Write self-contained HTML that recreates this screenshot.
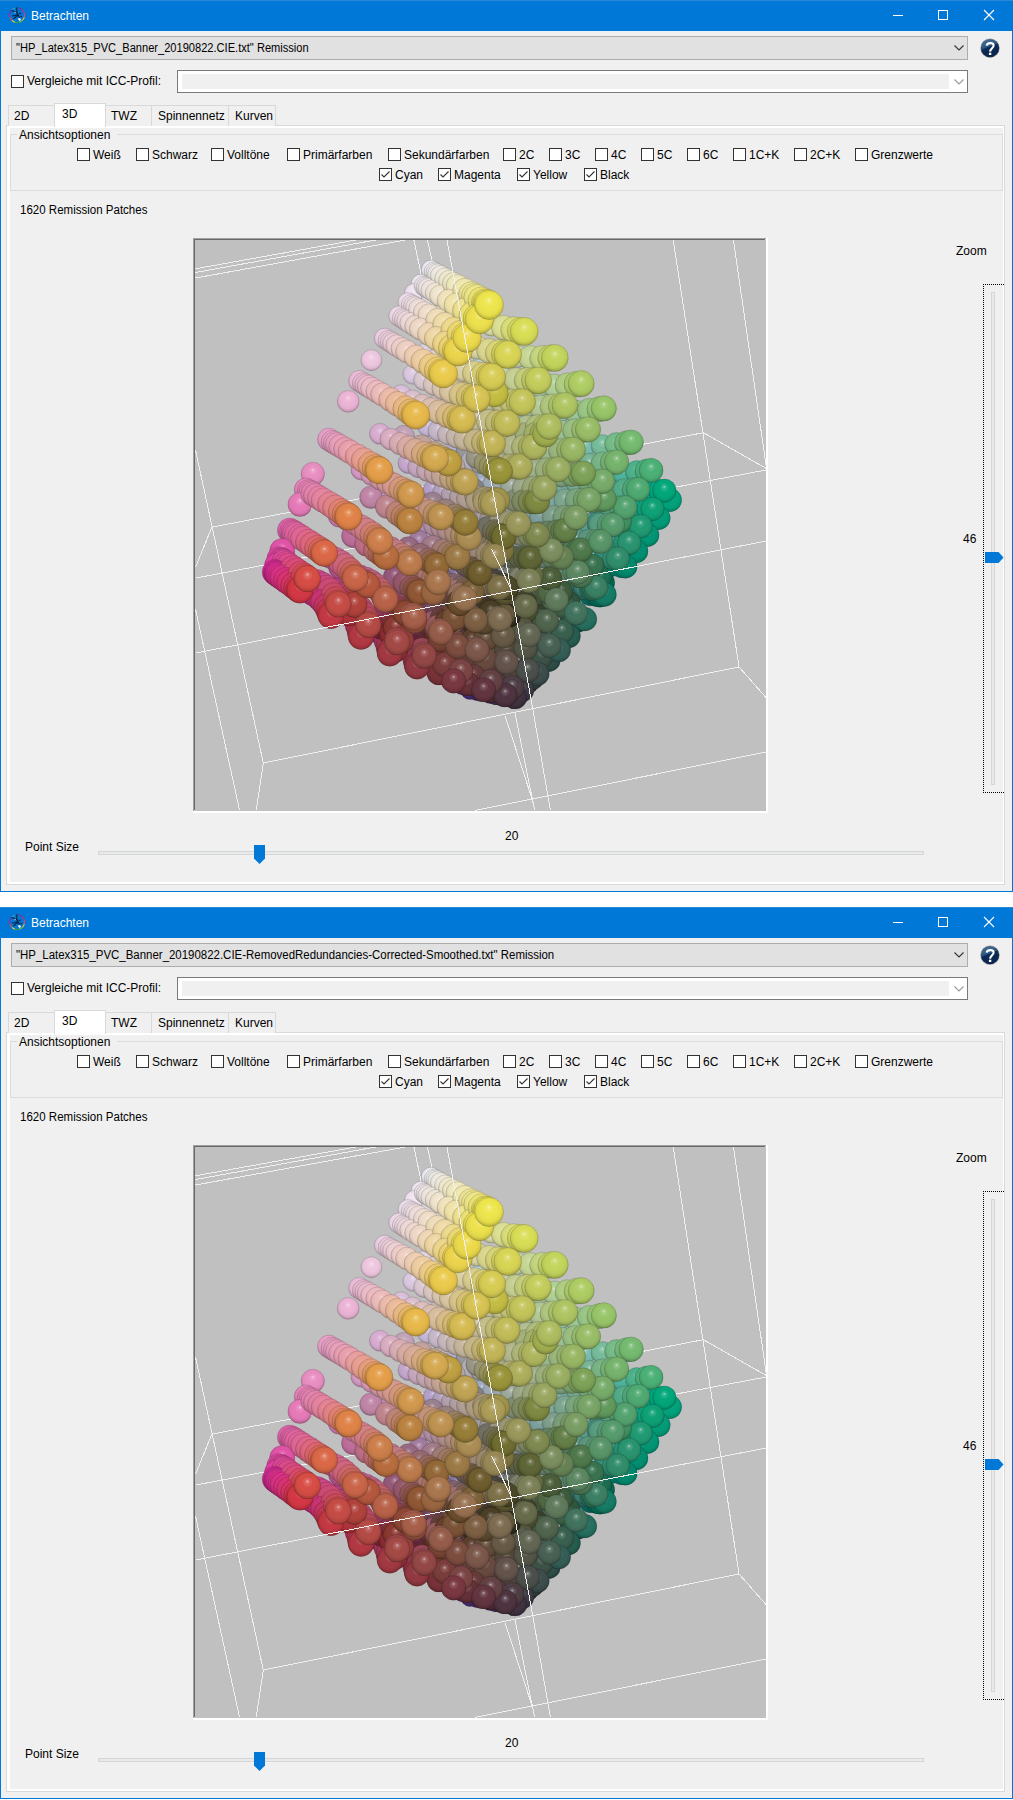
<!DOCTYPE html>
<html><head><meta charset="utf-8"><style>
html,body{margin:0;padding:0;background:#fff;width:1013px;height:1800px;overflow:hidden}
.t{position:absolute;white-space:nowrap;font-family:"Liberation Sans", sans-serif;line-height:14px;height:14px}
.r{position:absolute}
</style></head><body>
<div class="r" style="left:0px;top:0px;width:1013px;height:892px;background:#0078d7"></div>
<div class="r" style="left:1px;top:31px;width:1011px;height:860px;background:#f0f0f0"></div>
<div class="r" style="left:0px;top:0px;width:1013px;height:1px;background:#2a88d8"></div>
<svg class="r" style="left:6px;top:4px" width="22" height="22" viewBox="0 0 22 22"><g fill="none" stroke-width="1.1"><path d="M9.18 3.95 A7.4 7.4 0 0 1 13.02 3.95" stroke="#205a80"/><path d="M13.02 3.95 A7.4 7.4 0 0 1 16.33 5.87" stroke="#8a2a9a"/><path d="M16.33 5.87 A7.4 7.4 0 0 1 18.25 9.18" stroke="#d02a80"/><path d="M18.25 9.18 A7.4 7.4 0 0 1 18.25 13.02" stroke="#e84070"/><path d="M18.25 13.02 A7.4 7.4 0 0 1 16.33 16.33" stroke="#f0c030"/><path d="M16.33 16.33 A7.4 7.4 0 0 1 13.02 18.25" stroke="#80c030"/><path d="M13.02 18.25 A7.4 7.4 0 0 1 9.18 18.25" stroke="#30a040"/><path d="M9.18 18.25 A7.4 7.4 0 0 1 5.87 16.33" stroke="#f0d030"/><path d="M5.87 16.33 A7.4 7.4 0 0 1 3.95 13.02" stroke="#e05030"/><path d="M3.95 13.02 A7.4 7.4 0 0 1 3.95 9.18" stroke="#c02090"/><path d="M3.95 9.18 A7.4 7.4 0 0 1 5.87 5.87" stroke="#7030a0"/><path d="M5.87 5.87 A7.4 7.4 0 0 1 9.18 3.95" stroke="#30a0b0"/></g><path d="M10.5 3.8 L11.2 9 L12.8 12 L13.6 15.5 M5.6 6.6 L8 7.6 L11.2 9 M6 12 L9.2 11.5 L11.5 10.5 M7.5 15 L9.5 13 L12 11.5 M13 9.5 L15.2 9 M14.5 12 L16 13" stroke="#0a2040" stroke-width="1.1" fill="none"/><ellipse cx="13.5" cy="15.3" rx="1.5" ry="1.1" transform="rotate(40 13.5 15.3)" fill="#fff"/><circle cx="9" cy="8.5" r="0.7" fill="#cfe0f0"/></svg>
<div class="t" style="left:31px;top:9px;font-size:12px;color:#fff;">Betrachten</div>
<div class="r" style="left:893px;top:15px;width:10px;height:1px;background:#fff"></div>
<div class="r" style="left:938px;top:10px;width:10px;height:10px;border:1px solid #fff;box-sizing:border-box"></div>
<svg class="r" style="left:983px;top:9px" width="12" height="12"><path d="M1 1 L11 11 M11 1 L1 11" stroke="#fff" stroke-width="1.1"/></svg>
<div class="r" style="left:11px;top:36px;width:957px;height:24px;background:#e1e1e1;border:1px solid #adadad;box-sizing:border-box"></div>
<div class="t" style="left:16px;top:41px;font-size:12px;color:#000;transform:scaleX(0.924);transform-origin:0 0">"HP_Latex315_PVC_Banner_20190822.CIE.txt" Remission</div>
<svg class="r" style="left:954px;top:45px" width="10" height="7"><path d="M0.5 0.5 L5 5 L9.5 0.5" fill="none" stroke="#333" stroke-width="1.1"/></svg>
<svg class="r" style="left:979px;top:37px" width="22" height="22" viewBox="0 0 22 22"><defs><linearGradient id="hg0" x1="0.3" y1="0.1" x2="0.55" y2="0.75"><stop offset="0" stop-color="#3f6b92"/><stop offset="0.5" stop-color="#2a537c"/><stop offset="0.53" stop-color="#0c2c5a"/><stop offset="1" stop-color="#0a2650"/></linearGradient></defs><circle cx="11" cy="11.3" r="9.8" fill="#000" opacity="0.12"/><circle cx="11" cy="11.1" r="9.2" fill="url(#hg0)" stroke="#4a3a30" stroke-opacity="0.45" stroke-width="0.6"/><path d="M7.6 8.6 C8.2 5.6 14 5.2 14.6 8 C15.2 10.6 11.2 11.6 11.1 14.6" fill="none" stroke="#fff" stroke-width="2.1"/><rect x="9.9" y="15.7" width="2.4" height="2.3" fill="#fff"/></svg>
<div class="r" style="left:11px;top:75px;width:13px;height:13px;background:#fff;border:1px solid #333;box-sizing:border-box"></div>
<div class="t" style="left:27px;top:74px;font-size:12px;color:#000;">Vergleiche mit ICC-Profil:</div>
<div class="r" style="left:177px;top:70px;width:791px;height:23px;background:#fff;border:1px solid #7a7a7a;box-sizing:border-box"></div>
<div class="r" style="left:182px;top:74px;width:767px;height:15px;background:#f0f0f0"></div>
<svg class="r" style="left:954px;top:79px" width="10" height="7"><path d="M0.5 0.5 L5 5 L9.5 0.5" fill="none" stroke="#9a9a9a" stroke-width="1.1"/></svg>
<div class="r" style="left:6px;top:125px;width:999px;height:760px;border:1px solid #d9d9d9;box-sizing:border-box;background:#fff"></div>
<div class="r" style="left:10px;top:128px;width:993px;height:754px;background:#f0f0f0"></div>
<div class="r" style="left:8px;top:105px;width:47px;height:21px;background:#f0f0f0;border:1px solid #d9d9d9;border-bottom:none;box-sizing:border-box"></div>
<div class="t" style="left:14px;top:109px;font-size:12px;color:#000;">2D</div>
<div class="r" style="left:105px;top:105px;width:47px;height:21px;background:#f0f0f0;border:1px solid #d9d9d9;border-bottom:none;box-sizing:border-box"></div>
<div class="t" style="left:111px;top:109px;font-size:12px;color:#000;">TWZ</div>
<div class="r" style="left:151px;top:105px;width:78px;height:21px;background:#f0f0f0;border:1px solid #d9d9d9;border-bottom:none;box-sizing:border-box"></div>
<div class="t" style="left:158px;top:109px;font-size:12px;color:#000;">Spinnennetz</div>
<div class="r" style="left:228px;top:105px;width:48px;height:21px;background:#f0f0f0;border:1px solid #d9d9d9;border-bottom:none;box-sizing:border-box"></div>
<div class="t" style="left:235px;top:109px;font-size:12px;color:#000;">Kurven</div>
<div class="r" style="left:54px;top:103px;width:52px;height:24px;background:#fff;border:1px solid #d9d9d9;border-bottom:none;box-sizing:border-box"></div>
<div class="t" style="left:62px;top:107px;font-size:12px;color:#000;">3D</div>
<div class="r" style="left:10px;top:134px;width:993px;height:57px;border:1px solid #dcdcdc;box-sizing:border-box"></div>
<div class="r" style="left:17px;top:130px;width:100px;height:8px;background:#f0f0f0"></div>
<div class="t" style="left:19px;top:128px;font-size:12px;color:#000;">Ansichtsoptionen</div>
<div class="r" style="left:77px;top:148px;width:13px;height:13px;background:#fff;border:1px solid #333;box-sizing:border-box"></div>
<div class="t" style="left:93px;top:148px;font-size:12px;color:#000;">Weiß</div>
<div class="r" style="left:136px;top:148px;width:13px;height:13px;background:#fff;border:1px solid #333;box-sizing:border-box"></div>
<div class="t" style="left:152px;top:148px;font-size:12px;color:#000;">Schwarz</div>
<div class="r" style="left:211px;top:148px;width:13px;height:13px;background:#fff;border:1px solid #333;box-sizing:border-box"></div>
<div class="t" style="left:227px;top:148px;font-size:12px;color:#000;">Volltöne</div>
<div class="r" style="left:287px;top:148px;width:13px;height:13px;background:#fff;border:1px solid #333;box-sizing:border-box"></div>
<div class="t" style="left:303px;top:148px;font-size:12px;color:#000;">Primärfarben</div>
<div class="r" style="left:388px;top:148px;width:13px;height:13px;background:#fff;border:1px solid #333;box-sizing:border-box"></div>
<div class="t" style="left:404px;top:148px;font-size:12px;color:#000;">Sekundärfarben</div>
<div class="r" style="left:503px;top:148px;width:13px;height:13px;background:#fff;border:1px solid #333;box-sizing:border-box"></div>
<div class="t" style="left:519px;top:148px;font-size:12px;color:#000;">2C</div>
<div class="r" style="left:549px;top:148px;width:13px;height:13px;background:#fff;border:1px solid #333;box-sizing:border-box"></div>
<div class="t" style="left:565px;top:148px;font-size:12px;color:#000;">3C</div>
<div class="r" style="left:595px;top:148px;width:13px;height:13px;background:#fff;border:1px solid #333;box-sizing:border-box"></div>
<div class="t" style="left:611px;top:148px;font-size:12px;color:#000;">4C</div>
<div class="r" style="left:641px;top:148px;width:13px;height:13px;background:#fff;border:1px solid #333;box-sizing:border-box"></div>
<div class="t" style="left:657px;top:148px;font-size:12px;color:#000;">5C</div>
<div class="r" style="left:687px;top:148px;width:13px;height:13px;background:#fff;border:1px solid #333;box-sizing:border-box"></div>
<div class="t" style="left:703px;top:148px;font-size:12px;color:#000;">6C</div>
<div class="r" style="left:733px;top:148px;width:13px;height:13px;background:#fff;border:1px solid #333;box-sizing:border-box"></div>
<div class="t" style="left:749px;top:148px;font-size:12px;color:#000;">1C+K</div>
<div class="r" style="left:794px;top:148px;width:13px;height:13px;background:#fff;border:1px solid #333;box-sizing:border-box"></div>
<div class="t" style="left:810px;top:148px;font-size:12px;color:#000;">2C+K</div>
<div class="r" style="left:855px;top:148px;width:13px;height:13px;background:#fff;border:1px solid #333;box-sizing:border-box"></div>
<div class="t" style="left:871px;top:148px;font-size:12px;color:#000;">Grenzwerte</div>
<div class="r" style="left:379px;top:168px;width:13px;height:13px;background:#fff;border:1px solid #333;box-sizing:border-box"></div><svg class="r" style="left:379px;top:168px" width="13" height="13"><path d="M2.5 6.5 L5 9 L10.5 3.5" fill="none" stroke="#333" stroke-width="1.1"/></svg>
<div class="t" style="left:395px;top:168px;font-size:12px;color:#000;">Cyan</div>
<div class="r" style="left:438px;top:168px;width:13px;height:13px;background:#fff;border:1px solid #333;box-sizing:border-box"></div><svg class="r" style="left:438px;top:168px" width="13" height="13"><path d="M2.5 6.5 L5 9 L10.5 3.5" fill="none" stroke="#333" stroke-width="1.1"/></svg>
<div class="t" style="left:454px;top:168px;font-size:12px;color:#000;">Magenta</div>
<div class="r" style="left:517px;top:168px;width:13px;height:13px;background:#fff;border:1px solid #333;box-sizing:border-box"></div><svg class="r" style="left:517px;top:168px" width="13" height="13"><path d="M2.5 6.5 L5 9 L10.5 3.5" fill="none" stroke="#333" stroke-width="1.1"/></svg>
<div class="t" style="left:533px;top:168px;font-size:12px;color:#000;">Yellow</div>
<div class="r" style="left:584px;top:168px;width:13px;height:13px;background:#fff;border:1px solid #333;box-sizing:border-box"></div><svg class="r" style="left:584px;top:168px" width="13" height="13"><path d="M2.5 6.5 L5 9 L10.5 3.5" fill="none" stroke="#333" stroke-width="1.1"/></svg>
<div class="t" style="left:600px;top:168px;font-size:12px;color:#000;">Black</div>
<div class="t" style="left:20px;top:203px;font-size:12px;color:#000;transform:scaleX(0.96);transform-origin:0 0">1620 Remission Patches</div>
<div class="r" style="left:193px;top:238px;width:575px;height:575px;background:#fff"></div>
<div class="r" style="left:193px;top:238px;width:573px;height:573px;background:#a0a0a0"></div>
<div class="r" style="left:194px;top:239px;width:572px;height:572px;background:#e3e3e3"></div>
<div class="r" style="left:194px;top:239px;width:571px;height:571px;background:#696969"></div>
<div class="r" style="left:195px;top:240px;width:571px;height:571px;overflow:hidden"><svg width="571" height="571" viewBox="0 0 571 571" style="display:block"><defs><radialGradient id="sh" cx="0.5" cy="0.45" r="0.55" fx="0.5" fy="0.33"><stop offset="0" stop-color="#fff" stop-opacity="0.6"/><stop offset="0.12" stop-color="#fff" stop-opacity="0.18"/><stop offset="0.38" stop-color="#fff" stop-opacity="0"/><stop offset="0.8" stop-color="#000" stop-opacity="0.05"/><stop offset="0.96" stop-color="#000" stop-opacity="0.2"/><stop offset="1" stop-color="#000" stop-opacity="0.32"/></radialGradient></defs><style>.s{fill:url(#sh);stroke:#000;stroke-opacity:.16;stroke-width:.8}</style><rect width="571" height="571" fill="#c0c0c0"/><g stroke="#f0f0f0" stroke-width="1" shape-rendering="crispEdges"><line x1="0.5" y1="28.8" x2="160.9" y2="0.0"/><line x1="0.5" y1="32.5" x2="180.6" y2="0.0"/><line x1="0.5" y1="38.0" x2="210.2" y2="0.0"/><line x1="218.9" y1="0.0" x2="226.3" y2="35.0"/><line x1="232.4" y1="0.0" x2="238.6" y2="27.6"/><line x1="478.2" y1="0.0" x2="544.1" y2="427.4"/><line x1="538.4" y1="0.0" x2="571.3" y2="227.0"/><line x1="508.3" y1="192.7" x2="571.3" y2="228.5"/><line x1="544.0" y1="427.0" x2="571.0" y2="457.5"/><line x1="16.8" y1="287.2" x2="508.3" y2="192.7"/><line x1="1.0" y1="338.0" x2="571.0" y2="230.0"/><line x1="68.3" y1="523.0" x2="544.0" y2="427.0"/><line x1="280.3" y1="570.4" x2="571.0" y2="512.0"/><line x1="0.5" y1="210.1" x2="68.3" y2="523.0"/><line x1="0.5" y1="369.2" x2="44.6" y2="570.4"/><line x1="16.8" y1="287.2" x2="0.5" y2="327.5"/><line x1="68.3" y1="523.0" x2="61.2" y2="570.4"/><line x1="310.0" y1="475.7" x2="337.6" y2="560.6"/><line x1="319.8" y1="471.7" x2="339.6" y2="570.4"/><line x1="337.6" y1="467.8" x2="355.4" y2="570.4"/></g><circle cx="287.8" cy="120.9" r="9.2" fill="#bad7ec"/><circle cx="287.8" cy="120.9" r="9.2" class="s"/><circle cx="275.0" cy="450.0" r="9.4" fill="#492f7c"/><circle cx="275.0" cy="450.0" r="9.4" class="s"/><circle cx="276.4" cy="240.6" r="9.4" fill="#9daad0"/><circle cx="276.4" cy="240.6" r="9.4" class="s"/><circle cx="326.7" cy="169.4" r="9.4" fill="#99cad8"/><circle cx="326.7" cy="169.4" r="9.4" class="s"/><circle cx="267.2" cy="445.3" r="9.5" fill="#57307e"/><circle cx="267.2" cy="445.3" r="9.5" class="s"/><circle cx="313.3" cy="274.1" r="9.6" fill="#7ea0bf"/><circle cx="313.3" cy="274.1" r="9.6" class="s"/><circle cx="255.9" cy="215.1" r="9.6" fill="#b2b1d4"/><circle cx="255.9" cy="215.1" r="9.6" class="s"/><circle cx="236.0" cy="30.0" r="9.7" fill="#efedf5"/><circle cx="236.0" cy="30.0" r="9.7" class="s"/><circle cx="282.4" cy="451.1" r="9.7" fill="#483074"/><circle cx="282.4" cy="451.1" r="9.7" class="s"/><circle cx="285.0" cy="450.7" r="9.8" fill="#3e2966"/><circle cx="285.0" cy="450.7" r="9.8" class="s"/><circle cx="225.8" cy="44.1" r="9.8" fill="#efe7f2"/><circle cx="225.8" cy="44.1" r="9.8" class="s"/><circle cx="242.8" cy="64.9" r="9.8" fill="#e0dee6"/><circle cx="242.8" cy="64.9" r="9.8" class="s"/><circle cx="230.3" cy="113.1" r="9.8" fill="#dad2e6"/><circle cx="230.3" cy="113.1" r="9.8" class="s"/><circle cx="287.1" cy="242.8" r="9.8" fill="#9daac3"/><circle cx="287.1" cy="242.8" r="9.8" class="s"/><circle cx="238.9" cy="31.8" r="9.8" fill="#efecf0"/><circle cx="238.9" cy="31.8" r="9.8" class="s"/><circle cx="219.3" cy="53.4" r="9.9" fill="#efe3f0"/><circle cx="219.3" cy="53.4" r="9.9" class="s"/><circle cx="232.5" cy="186.6" r="9.9" fill="#c6b8d8"/><circle cx="232.5" cy="186.6" r="9.9" class="s"/><circle cx="238.0" cy="249.7" r="9.9" fill="#b2a0c9"/><circle cx="238.0" cy="249.7" r="9.9" class="s"/><circle cx="236.3" cy="57.7" r="9.9" fill="#e9e4ec"/><circle cx="236.3" cy="57.7" r="9.9" class="s"/><circle cx="240.8" cy="32.9" r="9.9" fill="#f0ecec"/><circle cx="240.8" cy="32.9" r="9.9" class="s"/><circle cx="229.0" cy="46.0" r="9.9" fill="#efe7ed"/><circle cx="229.0" cy="46.0" r="9.9" class="s"/><circle cx="213.0" cy="62.6" r="10.0" fill="#efdfee"/><circle cx="213.0" cy="62.6" r="10.0" class="s"/><circle cx="217.8" cy="134.3" r="10.0" fill="#dac8e1"/><circle cx="217.8" cy="134.3" r="10.0" class="s"/><circle cx="266.5" cy="218.3" r="10.1" fill="#b2b0c6"/><circle cx="266.5" cy="218.3" r="10.1" class="s"/><circle cx="242.7" cy="34.1" r="10.1" fill="#f0ece9"/><circle cx="242.7" cy="34.1" r="10.1" class="s"/><circle cx="231.1" cy="47.2" r="10.1" fill="#efe7e9"/><circle cx="231.1" cy="47.2" r="10.1" class="s"/><circle cx="203.8" cy="76.2" r="10.1" fill="#eedaea"/><circle cx="203.8" cy="76.2" r="10.1" class="s"/><circle cx="216.4" cy="64.6" r="10.1" fill="#efdfe8"/><circle cx="216.4" cy="64.6" r="10.1" class="s"/><circle cx="206.1" cy="154.9" r="10.2" fill="#dabfdb"/><circle cx="206.1" cy="154.9" r="10.2" class="s"/><circle cx="213.1" cy="223.2" r="10.2" fill="#c5a7cd"/><circle cx="213.1" cy="223.2" r="10.2" class="s"/><circle cx="233.1" cy="48.4" r="10.2" fill="#f0e6e5"/><circle cx="233.1" cy="48.4" r="10.2" class="s"/><circle cx="261.4" cy="336.9" r="10.2" fill="#837299"/><circle cx="261.4" cy="336.9" r="10.2" class="s"/><circle cx="218.7" cy="65.9" r="10.2" fill="#efdfe5"/><circle cx="218.7" cy="65.9" r="10.2" class="s"/><circle cx="245.5" cy="35.7" r="10.2" fill="#f0ece3"/><circle cx="245.5" cy="35.7" r="10.2" class="s"/><circle cx="207.5" cy="78.3" r="10.2" fill="#efd9e5"/><circle cx="207.5" cy="78.3" r="10.2" class="s"/><circle cx="297.5" cy="244.5" r="10.2" fill="#9ea9b6"/><circle cx="297.5" cy="244.5" r="10.2" class="s"/><circle cx="247.8" cy="252.4" r="10.3" fill="#b2a0bc"/><circle cx="247.8" cy="252.4" r="10.3" class="s"/><circle cx="189.6" cy="98.5" r="10.3" fill="#eed0e5"/><circle cx="189.6" cy="98.5" r="10.3" class="s"/><circle cx="241.4" cy="118.7" r="10.3" fill="#dbd1d6"/><circle cx="241.4" cy="118.7" r="10.3" class="s"/><circle cx="243.2" cy="190.9" r="10.3" fill="#c6b7c9"/><circle cx="243.2" cy="190.9" r="10.3" class="s"/><circle cx="220.8" cy="67.2" r="10.3" fill="#efdfe1"/><circle cx="220.8" cy="67.2" r="10.3" class="s"/><circle cx="209.8" cy="79.7" r="10.3" fill="#efd9e2"/><circle cx="209.8" cy="79.7" r="10.3" class="s"/><circle cx="236.1" cy="50.2" r="10.3" fill="#f0e6e0"/><circle cx="236.1" cy="50.2" r="10.3" class="s"/><circle cx="335.1" cy="275.6" r="10.4" fill="#7e9fa7"/><circle cx="335.1" cy="275.6" r="10.4" class="s"/><circle cx="271.4" cy="211.2" r="10.4" fill="#99989d"/><circle cx="271.4" cy="211.2" r="10.4" class="s"/><circle cx="278.9" cy="276.7" r="10.4" fill="#9e99ac"/><circle cx="278.9" cy="276.7" r="10.4" class="s"/><circle cx="193.4" cy="100.7" r="10.4" fill="#eed0e0"/><circle cx="193.4" cy="100.7" r="10.4" class="s"/><circle cx="295.5" cy="453.2" r="10.4" fill="#453065"/><circle cx="295.5" cy="453.2" r="10.4" class="s"/><circle cx="212.1" cy="81.0" r="10.4" fill="#efd9de"/><circle cx="212.1" cy="81.0" r="10.4" class="s"/><circle cx="196.0" cy="256.6" r="10.4" fill="#c595c2"/><circle cx="196.0" cy="256.6" r="10.4" class="s"/><circle cx="229.0" cy="140.0" r="10.5" fill="#dac8d1"/><circle cx="229.0" cy="140.0" r="10.5" class="s"/><circle cx="231.0" cy="283.3" r="10.5" fill="#b28fb2"/><circle cx="231.0" cy="283.3" r="10.5" class="s"/><circle cx="276.5" cy="220.8" r="10.5" fill="#b2b0b8"/><circle cx="276.5" cy="220.8" r="10.5" class="s"/><circle cx="224.0" cy="69.1" r="10.5" fill="#efdfdc"/><circle cx="224.0" cy="69.1" r="10.5" class="s"/><circle cx="176.4" cy="120.2" r="10.5" fill="#edc7df"/><circle cx="176.4" cy="120.2" r="10.5" class="s"/><circle cx="184.9" cy="193.8" r="10.5" fill="#d9add1"/><circle cx="184.9" cy="193.8" r="10.5" class="s"/><circle cx="250.0" cy="38.4" r="10.5" fill="#f0ebda"/><circle cx="250.0" cy="38.4" r="10.5" class="s"/><circle cx="195.8" cy="102.1" r="10.5" fill="#eed0dc"/><circle cx="195.8" cy="102.1" r="10.5" class="s"/><circle cx="246.9" cy="158.3" r="10.5" fill="#d0c4c7"/><circle cx="246.9" cy="158.3" r="10.5" class="s"/><circle cx="390.2" cy="206.9" r="10.5" fill="#77bcad"/><circle cx="390.2" cy="206.9" r="10.5" class="s"/><circle cx="278.8" cy="248.9" r="10.6" fill="#848388"/><circle cx="278.8" cy="248.9" r="10.6" class="s"/><circle cx="223.3" cy="227.1" r="10.6" fill="#c5a6bf"/><circle cx="223.3" cy="227.1" r="10.6" class="s"/><circle cx="215.3" cy="83.0" r="10.6" fill="#efd9d9"/><circle cx="215.3" cy="83.0" r="10.6" class="s"/><circle cx="217.3" cy="160.5" r="10.6" fill="#dabfcc"/><circle cx="217.3" cy="160.5" r="10.6" class="s"/><circle cx="240.8" cy="53.0" r="10.6" fill="#f0e6d7"/><circle cx="240.8" cy="53.0" r="10.6" class="s"/><circle cx="198.2" cy="103.5" r="10.6" fill="#eed0d9"/><circle cx="198.2" cy="103.5" r="10.6" class="s"/><circle cx="366.7" cy="242.9" r="10.7" fill="#7bada4"/><circle cx="366.7" cy="242.9" r="10.7" class="s"/><circle cx="307.4" cy="245.8" r="10.7" fill="#9da9a9"/><circle cx="307.4" cy="245.8" r="10.7" class="s"/><circle cx="256.9" cy="254.8" r="10.7" fill="#b29fae"/><circle cx="256.9" cy="254.8" r="10.7" class="s"/><circle cx="223.9" cy="301.3" r="10.7" fill="#a17b9f"/><circle cx="223.9" cy="301.3" r="10.7" class="s"/><circle cx="164.3" cy="141.1" r="10.7" fill="#edbdda"/><circle cx="164.3" cy="141.1" r="10.7" class="s"/><circle cx="208.8" cy="196.0" r="10.7" fill="#c2a3b7"/><circle cx="208.8" cy="196.0" r="10.7" class="s"/><circle cx="355.7" cy="259.8" r="10.7" fill="#7ca69f"/><circle cx="355.7" cy="259.8" r="10.7" class="s"/><circle cx="253.0" cy="194.3" r="10.7" fill="#c6b7ba"/><circle cx="253.0" cy="194.3" r="10.7" class="s"/><circle cx="229.0" cy="72.1" r="10.7" fill="#f0ded3"/><circle cx="229.0" cy="72.1" r="10.7" class="s"/><circle cx="345.1" cy="276.1" r="10.8" fill="#7d9f9b"/><circle cx="345.1" cy="276.1" r="10.8" class="s"/><circle cx="201.6" cy="105.5" r="10.8" fill="#eed0d4"/><circle cx="201.6" cy="105.5" r="10.8" class="s"/><circle cx="301.1" cy="454.1" r="10.8" fill="#44305e"/><circle cx="301.1" cy="454.1" r="10.8" class="s"/><circle cx="287.6" cy="278.2" r="10.8" fill="#9e99a0"/><circle cx="287.6" cy="278.2" r="10.8" class="s"/><circle cx="254.3" cy="41.0" r="10.8" fill="#f1ebd1"/><circle cx="254.3" cy="41.0" r="10.8" class="s"/><circle cx="168.2" cy="143.4" r="10.8" fill="#edbdd5"/><circle cx="168.2" cy="143.4" r="10.8" class="s"/><circle cx="364.2" cy="172.3" r="10.8" fill="#9ac8ad"/><circle cx="364.2" cy="172.3" r="10.8" class="s"/><circle cx="166.7" cy="229.4" r="10.8" fill="#d79bc6"/><circle cx="166.7" cy="229.4" r="10.8" class="s"/><circle cx="239.3" cy="285.6" r="10.8" fill="#b18fa5"/><circle cx="239.3" cy="285.6" r="10.8" class="s"/><circle cx="220.5" cy="86.0" r="10.8" fill="#efd9d0"/><circle cx="220.5" cy="86.0" r="10.8" class="s"/><circle cx="325.2" cy="306.6" r="10.9" fill="#7f9092"/><circle cx="325.2" cy="306.6" r="10.9" class="s"/><circle cx="248.6" cy="340.8" r="10.9" fill="#7e617d"/><circle cx="248.6" cy="340.8" r="10.9" class="s"/><circle cx="153.2" cy="161.4" r="10.9" fill="#ecb4d5"/><circle cx="153.2" cy="161.4" r="10.9" class="s"/><circle cx="245.3" cy="55.7" r="10.9" fill="#f0e5ce"/><circle cx="245.3" cy="55.7" r="10.9" class="s"/><circle cx="195.8" cy="199.1" r="10.9" fill="#d9adc2"/><circle cx="195.8" cy="199.1" r="10.9" class="s"/><circle cx="285.9" cy="222.7" r="10.9" fill="#b2afaa"/><circle cx="285.9" cy="222.7" r="10.9" class="s"/><circle cx="170.7" cy="144.8" r="10.9" fill="#edbdd2"/><circle cx="170.7" cy="144.8" r="10.9" class="s"/><circle cx="259.2" cy="227.0" r="10.9" fill="#bcabad"/><circle cx="259.2" cy="227.0" r="10.9" class="s"/><circle cx="237.3" cy="262.8" r="10.9" fill="#98808f"/><circle cx="237.3" cy="262.8" r="10.9" class="s"/><circle cx="427.8" cy="233.2" r="10.9" fill="#4db19b"/><circle cx="427.8" cy="233.2" r="10.9" class="s"/><circle cx="398.2" cy="316.7" r="10.9" fill="#348e8a"/><circle cx="398.2" cy="316.7" r="10.9" class="s"/><circle cx="239.1" cy="144.6" r="10.9" fill="#dbc7c1"/><circle cx="239.1" cy="144.6" r="10.9" class="s"/><circle cx="307.3" cy="334.2" r="11.0" fill="#81818a"/><circle cx="307.3" cy="334.2" r="11.0" class="s"/><circle cx="232.4" cy="230.4" r="11.0" fill="#c5a6b1"/><circle cx="232.4" cy="230.4" r="11.0" class="s"/><circle cx="415.7" cy="250.9" r="11.0" fill="#51aa97"/><circle cx="415.7" cy="250.9" r="11.0" class="s"/><circle cx="269.0" cy="134.9" r="11.0" fill="#c5c0ab"/><circle cx="269.0" cy="134.9" r="11.0" class="s"/><circle cx="296.3" cy="338.3" r="11.0" fill="#49494b"/><circle cx="296.3" cy="338.3" r="11.0" class="s"/><circle cx="173.2" cy="146.2" r="11.0" fill="#edbdcf"/><circle cx="173.2" cy="146.2" r="11.0" class="s"/><circle cx="404.0" cy="268.0" r="11.0" fill="#55a393"/><circle cx="404.0" cy="268.0" r="11.0" class="s"/><circle cx="311.3" cy="316.0" r="11.0" fill="#5e6661"/><circle cx="311.3" cy="316.0" r="11.0" class="s"/><circle cx="207.0" cy="108.6" r="11.0" fill="#efcfcb"/><circle cx="207.0" cy="108.6" r="11.0" class="s"/><circle cx="233.8" cy="74.9" r="11.0" fill="#f0deca"/><circle cx="233.8" cy="74.9" r="11.0" class="s"/><circle cx="392.7" cy="284.4" r="11.0" fill="#589c8e"/><circle cx="392.7" cy="284.4" r="11.0" class="s"/><circle cx="227.3" cy="165.2" r="11.0" fill="#dabebc"/><circle cx="227.3" cy="165.2" r="11.0" class="s"/><circle cx="265.3" cy="256.9" r="11.0" fill="#b19fa1"/><circle cx="265.3" cy="256.9" r="11.0" class="s"/><circle cx="403.0" cy="283.2" r="11.1" fill="#429280"/><circle cx="403.0" cy="283.2" r="11.1" class="s"/><circle cx="380.1" cy="347.7" r="11.1" fill="#2f7572"/><circle cx="380.1" cy="347.7" r="11.1" class="s"/><circle cx="343.9" cy="145.7" r="11.1" fill="#b1d0ad"/><circle cx="343.9" cy="145.7" r="11.1" class="s"/><circle cx="316.6" cy="246.7" r="11.1" fill="#9da89c"/><circle cx="316.6" cy="246.7" r="11.1" class="s"/><circle cx="381.9" cy="300.1" r="11.1" fill="#5b958a"/><circle cx="381.9" cy="300.1" r="11.1" class="s"/><circle cx="261.5" cy="319.2" r="11.1" fill="#6f5e69"/><circle cx="261.5" cy="319.2" r="11.1" class="s"/><circle cx="258.4" cy="43.5" r="11.1" fill="#f1eac8"/><circle cx="258.4" cy="43.5" r="11.1" class="s"/><circle cx="225.4" cy="88.9" r="11.1" fill="#efd8c8"/><circle cx="225.4" cy="88.9" r="11.1" class="s"/><circle cx="281.9" cy="217.6" r="11.1" fill="#9a9687"/><circle cx="281.9" cy="217.6" r="11.1" class="s"/><circle cx="176.7" cy="148.3" r="11.1" fill="#edbdca"/><circle cx="176.7" cy="148.3" r="11.1" class="s"/><circle cx="344.7" cy="292.6" r="11.1" fill="#658170"/><circle cx="344.7" cy="292.6" r="11.1" class="s"/><circle cx="330.8" cy="166.4" r="11.1" fill="#b1c7a9"/><circle cx="330.8" cy="166.4" r="11.1" class="s"/><circle cx="407.3" cy="205.7" r="11.2" fill="#76bc9a"/><circle cx="407.3" cy="205.7" r="11.2" class="s"/><circle cx="295.7" cy="279.5" r="11.2" fill="#9d9894"/><circle cx="295.7" cy="279.5" r="11.2" class="s"/><circle cx="262.1" cy="197.0" r="11.2" fill="#c6b6ab"/><circle cx="262.1" cy="197.0" r="11.2" class="s"/><circle cx="176.9" cy="234.3" r="11.2" fill="#d79ab8"/><circle cx="176.9" cy="234.3" r="11.2" class="s"/><circle cx="246.7" cy="287.8" r="11.2" fill="#b18e99"/><circle cx="246.7" cy="287.8" r="11.2" class="s"/><circle cx="394.4" cy="224.5" r="11.2" fill="#78b496"/><circle cx="394.4" cy="224.5" r="11.2" class="s"/><circle cx="292.8" cy="287.4" r="11.2" fill="#706e63"/><circle cx="292.8" cy="287.4" r="11.2" class="s"/><circle cx="237.7" cy="306.4" r="11.2" fill="#a17a8a"/><circle cx="237.7" cy="306.4" r="11.2" class="s"/><circle cx="455.5" cy="251.7" r="11.2" fill="#00a88d"/><circle cx="455.5" cy="251.7" r="11.2" class="s"/><circle cx="382.0" cy="242.6" r="11.2" fill="#7aad92"/><circle cx="382.0" cy="242.6" r="11.2" class="s"/><circle cx="306.2" cy="205.6" r="11.2" fill="#b1b7a0"/><circle cx="306.2" cy="205.6" r="11.2" class="s"/><circle cx="211.9" cy="111.5" r="11.3" fill="#efcfc3"/><circle cx="211.9" cy="111.5" r="11.3" class="s"/><circle cx="317.5" cy="335.2" r="11.3" fill="#666d65"/><circle cx="317.5" cy="335.2" r="11.3" class="s"/><circle cx="443.7" cy="269.3" r="11.3" fill="#13a189"/><circle cx="443.7" cy="269.3" r="11.3" class="s"/><circle cx="370.0" cy="260.0" r="11.3" fill="#7ba58e"/><circle cx="370.0" cy="260.0" r="11.3" class="s"/><circle cx="133.8" cy="199.4" r="11.3" fill="#eaa1ca"/><circle cx="133.8" cy="199.4" r="11.3" class="s"/><circle cx="144.4" cy="276.0" r="11.3" fill="#d57fb8"/><circle cx="144.4" cy="276.0" r="11.3" class="s"/><circle cx="205.3" cy="203.6" r="11.3" fill="#d9acb3"/><circle cx="205.3" cy="203.6" r="11.3" class="s"/><circle cx="417.7" cy="325.1" r="11.3" fill="#00897e"/><circle cx="417.7" cy="325.1" r="11.3" class="s"/><circle cx="358.5" cy="276.7" r="11.3" fill="#7d9e8a"/><circle cx="358.5" cy="276.7" r="11.3" class="s"/><circle cx="258.7" cy="344.5" r="11.3" fill="#7e616d"/><circle cx="258.7" cy="344.5" r="11.3" class="s"/><circle cx="369.4" cy="311.7" r="11.3" fill="#4f7964"/><circle cx="369.4" cy="311.7" r="11.3" class="s"/><circle cx="321.4" cy="116.4" r="11.3" fill="#c7d8ad"/><circle cx="321.4" cy="116.4" r="11.3" class="s"/><circle cx="182.1" cy="151.4" r="11.3" fill="#edbcc2"/><circle cx="182.1" cy="151.4" r="11.3" class="s"/><circle cx="301.3" cy="341.3" r="11.3" fill="#4a4842"/><circle cx="301.3" cy="341.3" r="11.3" class="s"/><circle cx="175.9" cy="257.2" r="11.3" fill="#c085a6"/><circle cx="175.9" cy="257.2" r="11.3" class="s"/><circle cx="240.5" cy="233.2" r="11.3" fill="#c5a5a3"/><circle cx="240.5" cy="233.2" r="11.3" class="s"/><circle cx="421.1" cy="302.3" r="11.3" fill="#2b9481"/><circle cx="421.1" cy="302.3" r="11.3" class="s"/><circle cx="395.2" cy="354.3" r="11.4" fill="#097168"/><circle cx="395.2" cy="354.3" r="11.4" class="s"/><circle cx="349.4" cy="316.9" r="11.4" fill="#678272"/><circle cx="349.4" cy="316.9" r="11.4" class="s"/><circle cx="397.7" cy="352.7" r="11.4" fill="#197c76"/><circle cx="397.7" cy="352.7" r="11.4" class="s"/><circle cx="410.3" cy="317.6" r="11.4" fill="#328d7d"/><circle cx="410.3" cy="317.6" r="11.4" class="s"/><circle cx="137.4" cy="201.6" r="11.4" fill="#eaa1c6"/><circle cx="137.4" cy="201.6" r="11.4" class="s"/><circle cx="337.0" cy="308.0" r="11.4" fill="#7e8f82"/><circle cx="337.0" cy="308.0" r="11.4" class="s"/><circle cx="248.2" cy="148.4" r="11.4" fill="#dbc6b1"/><circle cx="248.2" cy="148.4" r="11.4" class="s"/><circle cx="213.0" cy="308.1" r="11.4" fill="#966982"/><circle cx="213.0" cy="308.1" r="11.4" class="s"/><circle cx="262.4" cy="45.9" r="11.4" fill="#f1eabf"/><circle cx="262.4" cy="45.9" r="11.4" class="s"/><circle cx="307.9" cy="138.2" r="11.4" fill="#c6cfa9"/><circle cx="307.9" cy="138.2" r="11.4" class="s"/><circle cx="165.1" cy="336.2" r="11.4" fill="#c0609b"/><circle cx="165.1" cy="336.2" r="11.4" class="s"/><circle cx="252.3" cy="347.6" r="11.4" fill="#9c7281"/><circle cx="252.3" cy="347.6" r="11.4" class="s"/><circle cx="389.5" cy="348.4" r="11.4" fill="#2e7568"/><circle cx="389.5" cy="348.4" r="11.4" class="s"/><circle cx="320.3" cy="260.6" r="11.4" fill="#808b70"/><circle cx="320.3" cy="260.6" r="11.4" class="s"/><circle cx="272.8" cy="258.6" r="11.4" fill="#b19e95"/><circle cx="272.8" cy="258.6" r="11.4" class="s"/><circle cx="441.8" cy="231.9" r="11.4" fill="#4cb18b"/><circle cx="441.8" cy="231.9" r="11.4" class="s"/><circle cx="226.4" cy="206.2" r="11.4" fill="#c3a29c"/><circle cx="226.4" cy="206.2" r="11.4" class="s"/><circle cx="389.7" cy="345.9" r="11.4" fill="#3c8075"/><circle cx="389.7" cy="345.9" r="11.4" class="s"/><circle cx="317.5" cy="336.4" r="11.4" fill="#7f817b"/><circle cx="317.5" cy="336.4" r="11.4" class="s"/><circle cx="139.8" cy="202.9" r="11.5" fill="#eaa1c3"/><circle cx="139.8" cy="202.9" r="11.5" class="s"/><circle cx="319.8" cy="317.7" r="11.5" fill="#5e6654"/><circle cx="319.8" cy="317.7" r="11.5" class="s"/><circle cx="429.1" cy="250.2" r="11.5" fill="#50aa87"/><circle cx="429.1" cy="250.2" r="11.5" class="s"/><circle cx="250.4" cy="270.3" r="11.5" fill="#987f7b"/><circle cx="250.4" cy="270.3" r="11.5" class="s"/><circle cx="294.8" cy="159.3" r="11.5" fill="#c6c7a5"/><circle cx="294.8" cy="159.3" r="11.5" class="s"/><circle cx="253.6" cy="60.7" r="11.5" fill="#f1e4bc"/><circle cx="253.6" cy="60.7" r="11.5" class="s"/><circle cx="270.6" cy="324.5" r="11.5" fill="#6f5e5b"/><circle cx="270.6" cy="324.5" r="11.5" class="s"/><circle cx="416.9" cy="267.8" r="11.5" fill="#54a383"/><circle cx="416.9" cy="267.8" r="11.5" class="s"/><circle cx="236.0" cy="169.0" r="11.5" fill="#dabdad"/><circle cx="236.0" cy="169.0" r="11.5" class="s"/><circle cx="380.6" cy="171.6" r="11.5" fill="#9ac798"/><circle cx="380.6" cy="171.6" r="11.5" class="s"/><circle cx="366.5" cy="235.7" r="11.5" fill="#7fa37e"/><circle cx="366.5" cy="235.7" r="11.5" class="s"/><circle cx="354.1" cy="292.2" r="11.5" fill="#658064"/><circle cx="354.1" cy="292.2" r="11.5" class="s"/><circle cx="405.0" cy="284.6" r="11.5" fill="#579c80"/><circle cx="405.0" cy="284.6" r="11.5" class="s"/><circle cx="142.0" cy="204.2" r="11.5" fill="#eaa0c0"/><circle cx="142.0" cy="204.2" r="11.5" class="s"/><circle cx="185.6" cy="238.5" r="11.5" fill="#d79aab"/><circle cx="185.6" cy="238.5" r="11.5" class="s"/><circle cx="203.6" cy="359.2" r="11.5" fill="#ad5e83"/><circle cx="203.6" cy="359.2" r="11.5" class="s"/><circle cx="366.9" cy="191.7" r="11.5" fill="#9bbf94"/><circle cx="366.9" cy="191.7" r="11.5" class="s"/><circle cx="253.2" cy="289.9" r="11.5" fill="#b08e8d"/><circle cx="253.2" cy="289.9" r="11.5" class="s"/><circle cx="282.3" cy="179.6" r="11.5" fill="#c6bea1"/><circle cx="282.3" cy="179.6" r="11.5" class="s"/><circle cx="187.1" cy="154.4" r="11.5" fill="#edbcba"/><circle cx="187.1" cy="154.4" r="11.5" class="s"/><circle cx="393.5" cy="300.8" r="11.5" fill="#5a957c"/><circle cx="393.5" cy="300.8" r="11.5" class="s"/><circle cx="242.3" cy="79.9" r="11.6" fill="#f0ddb9"/><circle cx="242.3" cy="79.9" r="11.6" class="s"/><circle cx="353.7" cy="211.0" r="11.6" fill="#9bb791"/><circle cx="353.7" cy="211.0" r="11.6" class="s"/><circle cx="299.2" cy="351.0" r="11.6" fill="#5e574c"/><circle cx="299.2" cy="351.0" r="11.6" class="s"/><circle cx="153.2" cy="279.9" r="11.6" fill="#d47fab"/><circle cx="153.2" cy="279.9" r="11.6" class="s"/><circle cx="291.0" cy="307.9" r="11.6" fill="#7f7566"/><circle cx="291.0" cy="307.9" r="11.6" class="s"/><circle cx="281.3" cy="256.9" r="11.6" fill="#a29581"/><circle cx="281.3" cy="256.9" r="11.6" class="s"/><circle cx="324.6" cy="335.7" r="11.6" fill="#666d5a"/><circle cx="324.6" cy="335.7" r="11.6" class="s"/><circle cx="270.2" cy="199.1" r="11.6" fill="#c6b69d"/><circle cx="270.2" cy="199.1" r="11.6" class="s"/><circle cx="341.0" cy="229.7" r="11.6" fill="#9caf8d"/><circle cx="341.0" cy="229.7" r="11.6" class="s"/><circle cx="371.9" cy="330.7" r="11.6" fill="#5e8774"/><circle cx="371.9" cy="330.7" r="11.6" class="s"/><circle cx="326.6" cy="294.4" r="11.6" fill="#818a71"/><circle cx="326.6" cy="294.4" r="11.6" class="s"/><circle cx="465.1" cy="251.0" r="11.6" fill="#00a781"/><circle cx="465.1" cy="251.0" r="11.6" class="s"/><circle cx="145.3" cy="206.1" r="11.6" fill="#eaa0bc"/><circle cx="145.3" cy="206.1" r="11.6" class="s"/><circle cx="234.0" cy="94.0" r="11.6" fill="#efd7b6"/><circle cx="234.0" cy="94.0" r="11.6" class="s"/><circle cx="402.0" cy="355.0" r="11.6" fill="#05705f"/><circle cx="402.0" cy="355.0" r="11.6" class="s"/><circle cx="408.1" cy="342.7" r="11.6" fill="#006952"/><circle cx="408.1" cy="342.7" r="11.6" class="s"/><circle cx="328.9" cy="247.6" r="11.6" fill="#9ca789"/><circle cx="328.9" cy="247.6" r="11.6" class="s"/><circle cx="296.6" cy="84.5" r="11.6" fill="#dce0ad"/><circle cx="296.6" cy="84.5" r="11.6" class="s"/><circle cx="377.4" cy="310.8" r="11.6" fill="#4f795a"/><circle cx="377.4" cy="310.8" r="11.6" class="s"/><circle cx="453.1" cy="269.1" r="11.6" fill="#0fa17d"/><circle cx="453.1" cy="269.1" r="11.6" class="s"/><circle cx="171.1" cy="338.7" r="11.6" fill="#bf6190"/><circle cx="171.1" cy="338.7" r="11.6" class="s"/><circle cx="376.0" cy="376.1" r="11.6" fill="#285c4c"/><circle cx="376.0" cy="376.1" r="11.6" class="s"/><circle cx="352.1" cy="357.7" r="11.7" fill="#61796d"/><circle cx="352.1" cy="357.7" r="11.7" class="s"/><circle cx="426.5" cy="326.1" r="11.7" fill="#008873"/><circle cx="426.5" cy="326.1" r="11.7" class="s"/><circle cx="117.8" cy="233.9" r="11.7" fill="#e88ec1"/><circle cx="117.8" cy="233.9" r="11.7" class="s"/><circle cx="235.1" cy="371.3" r="11.7" fill="#6c4259"/><circle cx="235.1" cy="371.3" r="11.7" class="s"/><circle cx="305.4" cy="343.8" r="11.7" fill="#4a483a"/><circle cx="305.4" cy="343.8" r="11.7" class="s"/><circle cx="398.0" cy="260.9" r="11.7" fill="#629971"/><circle cx="398.0" cy="260.9" r="11.7" class="s"/><circle cx="441.5" cy="286.3" r="11.7" fill="#1f9a79"/><circle cx="441.5" cy="286.3" r="11.7" class="s"/><circle cx="213.4" cy="207.4" r="11.7" fill="#d8aca5"/><circle cx="213.4" cy="207.4" r="11.7" class="s"/><circle cx="404.9" cy="337.4" r="11.7" fill="#186d50"/><circle cx="404.9" cy="337.4" r="11.7" class="s"/><circle cx="347.8" cy="352.5" r="11.7" fill="#526651"/><circle cx="347.8" cy="352.5" r="11.7" class="s"/><circle cx="396.1" cy="349.0" r="11.7" fill="#2c745e"/><circle cx="396.1" cy="349.0" r="11.7" class="s"/><circle cx="475.0" cy="260.0" r="11.7" fill="#00a27b"/><circle cx="475.0" cy="260.0" r="11.7" class="s"/><circle cx="306.2" cy="281.2" r="11.7" fill="#9c9882"/><circle cx="306.2" cy="281.2" r="11.7" class="s"/><circle cx="382.6" cy="380.8" r="11.7" fill="#135948"/><circle cx="382.6" cy="380.8" r="11.7" class="s"/><circle cx="430.0" cy="302.8" r="11.7" fill="#299375"/><circle cx="430.0" cy="302.8" r="11.7" class="s"/><circle cx="421.4" cy="204.2" r="11.7" fill="#75bb88"/><circle cx="421.4" cy="204.2" r="11.7" class="s"/><circle cx="293.2" cy="344.0" r="11.7" fill="#807166"/><circle cx="293.2" cy="344.0" r="11.7" class="s"/><circle cx="266.4" cy="347.7" r="11.7" fill="#7d605d"/><circle cx="266.4" cy="347.7" r="11.7" class="s"/><circle cx="195.9" cy="308.3" r="11.7" fill="#c17a90"/><circle cx="195.9" cy="308.3" r="11.7" class="s"/><circle cx="199.9" cy="336.9" r="11.7" fill="#945779"/><circle cx="199.9" cy="336.9" r="11.7" class="s"/><circle cx="282.6" cy="107.7" r="11.7" fill="#dbd8a9"/><circle cx="282.6" cy="107.7" r="11.7" class="s"/><circle cx="247.7" cy="235.6" r="11.7" fill="#c4a595"/><circle cx="247.7" cy="235.6" r="11.7" class="s"/><circle cx="299.0" cy="291.1" r="11.7" fill="#716d54"/><circle cx="299.0" cy="291.1" r="11.7" class="s"/><circle cx="374.0" cy="363.5" r="11.7" fill="#2d543c"/><circle cx="374.0" cy="363.5" r="11.7" class="s"/><circle cx="463.6" cy="278.0" r="11.7" fill="#009b77"/><circle cx="463.6" cy="278.0" r="11.7" class="s"/><circle cx="407.7" cy="223.5" r="11.7" fill="#77b385"/><circle cx="407.7" cy="223.5" r="11.7" class="s"/><circle cx="418.9" cy="318.3" r="11.7" fill="#308d72"/><circle cx="418.9" cy="318.3" r="11.7" class="s"/><circle cx="435.1" cy="296.8" r="11.7" fill="#0c8a64"/><circle cx="435.1" cy="296.8" r="11.7" class="s"/><circle cx="357.9" cy="317.2" r="11.7" fill="#668265"/><circle cx="357.9" cy="317.2" r="11.7" class="s"/><circle cx="290.6" cy="369.0" r="11.7" fill="#493f36"/><circle cx="290.6" cy="369.0" r="11.7" class="s"/><circle cx="220.7" cy="116.7" r="11.7" fill="#efceb2"/><circle cx="220.7" cy="116.7" r="11.7" class="s"/><circle cx="325.5" cy="318.2" r="11.7" fill="#5e654a"/><circle cx="325.5" cy="318.2" r="11.7" class="s"/><circle cx="394.5" cy="242.1" r="11.8" fill="#79ac81"/><circle cx="394.5" cy="242.1" r="11.8" class="s"/><circle cx="405.0" cy="355.4" r="11.8" fill="#03705a"/><circle cx="405.0" cy="355.4" r="11.8" class="s"/><circle cx="285.7" cy="311.8" r="11.8" fill="#9c887b"/><circle cx="285.7" cy="311.8" r="11.8" class="s"/><circle cx="452.3" cy="295.0" r="11.8" fill="#009574"/><circle cx="452.3" cy="295.0" r="11.8" class="s"/><circle cx="359.4" cy="145.8" r="11.8" fill="#b0cf97"/><circle cx="359.4" cy="145.8" r="11.8" class="s"/><circle cx="248.1" cy="310.6" r="11.8" fill="#a07a75"/><circle cx="248.1" cy="310.6" r="11.8" class="s"/><circle cx="386.6" cy="378.6" r="11.8" fill="#276f64"/><circle cx="386.6" cy="378.6" r="11.8" class="s"/><circle cx="158.3" cy="296.0" r="11.8" fill="#bd6d9a"/><circle cx="158.3" cy="296.0" r="11.8" class="s"/><circle cx="225.0" cy="315.1" r="11.8" fill="#956870"/><circle cx="225.0" cy="315.1" r="11.8" class="s"/><circle cx="381.7" cy="260.0" r="11.8" fill="#7aa57d"/><circle cx="381.7" cy="260.0" r="11.8" class="s"/><circle cx="207.8" cy="362.3" r="11.8" fill="#ac5e78"/><circle cx="207.8" cy="362.3" r="11.8" class="s"/><circle cx="397.7" cy="347.1" r="11.8" fill="#3a806a"/><circle cx="397.7" cy="347.1" r="11.8" class="s"/><circle cx="269.2" cy="130.0" r="11.8" fill="#dbcfa5"/><circle cx="269.2" cy="130.0" r="11.8" class="s"/><circle cx="469.3" cy="250.7" r="11.8" fill="#00a779"/><circle cx="469.3" cy="250.7" r="11.8" class="s"/><circle cx="150.3" cy="209.0" r="11.8" fill="#eaa0b5"/><circle cx="150.3" cy="209.0" r="11.8" class="s"/><circle cx="441.2" cy="311.2" r="11.8" fill="#008e70"/><circle cx="441.2" cy="311.2" r="11.8" class="s"/><circle cx="251.4" cy="372.0" r="11.8" fill="#7c5157"/><circle cx="251.4" cy="372.0" r="11.8" class="s"/><circle cx="290.7" cy="222.8" r="11.8" fill="#9a9570"/><circle cx="290.7" cy="222.8" r="11.8" class="s"/><circle cx="345.3" cy="166.8" r="11.8" fill="#b1c793"/><circle cx="345.3" cy="166.8" r="11.8" class="s"/><circle cx="303.4" cy="351.9" r="11.8" fill="#5d5644"/><circle cx="303.4" cy="351.9" r="11.8" class="s"/><circle cx="369.5" cy="277.1" r="11.8" fill="#7b9d7a"/><circle cx="369.5" cy="277.1" r="11.8" class="s"/><circle cx="397.3" cy="325.8" r="11.8" fill="#36724e"/><circle cx="397.3" cy="325.8" r="11.8" class="s"/><circle cx="399.1" cy="349.3" r="11.8" fill="#2b7459"/><circle cx="399.1" cy="349.3" r="11.8" class="s"/><circle cx="457.4" cy="269.0" r="11.8" fill="#0ca075"/><circle cx="457.4" cy="269.0" r="11.8" class="s"/><circle cx="451.7" cy="230.8" r="11.8" fill="#4bb07d"/><circle cx="451.7" cy="230.8" r="11.8" class="s"/><circle cx="430.4" cy="326.5" r="11.8" fill="#00886c"/><circle cx="430.4" cy="326.5" r="11.8" class="s"/><circle cx="383.0" cy="335.8" r="11.8" fill="#4a7a5d"/><circle cx="383.0" cy="335.8" r="11.8" class="s"/><circle cx="332.2" cy="442.1" r="11.8" fill="#2a3434"/><circle cx="332.2" cy="442.1" r="11.8" class="s"/><circle cx="331.6" cy="187.0" r="11.8" fill="#b1be90"/><circle cx="331.6" cy="187.0" r="11.8" class="s"/><circle cx="259.3" cy="351.3" r="11.8" fill="#9b7171"/><circle cx="259.3" cy="351.3" r="11.8" class="s"/><circle cx="377.9" cy="372.6" r="11.8" fill="#417363"/><circle cx="377.9" cy="372.6" r="11.8" class="s"/><circle cx="227.3" cy="268.6" r="11.8" fill="#c3948e"/><circle cx="227.3" cy="268.6" r="11.8" class="s"/><circle cx="373.7" cy="396.1" r="11.8" fill="#245c4e"/><circle cx="373.7" cy="396.1" r="11.8" class="s"/><circle cx="160.5" cy="283.7" r="11.8" fill="#d47f9e"/><circle cx="160.5" cy="283.7" r="11.8" class="s"/><circle cx="368.4" cy="366.5" r="11.8" fill="#3c6046"/><circle cx="368.4" cy="366.5" r="11.8" class="s"/><circle cx="277.0" cy="328.4" r="11.8" fill="#6f5d4d"/><circle cx="277.0" cy="328.4" r="11.8" class="s"/><circle cx="111.0" cy="249.7" r="11.8" fill="#e784bc"/><circle cx="111.0" cy="249.7" r="11.8" class="s"/><circle cx="438.7" cy="249.6" r="11.8" fill="#4fa97a"/><circle cx="438.7" cy="249.6" r="11.8" class="s"/><circle cx="366.0" cy="352.2" r="11.8" fill="#3c593a"/><circle cx="366.0" cy="352.2" r="11.8" class="s"/><circle cx="445.6" cy="286.4" r="11.8" fill="#1e9a72"/><circle cx="445.6" cy="286.4" r="11.8" class="s"/><circle cx="328.3" cy="261.4" r="11.8" fill="#808a62"/><circle cx="328.3" cy="261.4" r="11.8" class="s"/><circle cx="242.2" cy="375.6" r="11.8" fill="#6b424e"/><circle cx="242.2" cy="375.6" r="11.8" class="s"/><circle cx="362.0" cy="291.5" r="11.8" fill="#648058"/><circle cx="362.0" cy="291.5" r="11.8" class="s"/><circle cx="343.2" cy="375.9" r="11.8" fill="#343f2a"/><circle cx="343.2" cy="375.9" r="11.8" class="s"/><circle cx="256.2" cy="151.4" r="11.9" fill="#dac6a1"/><circle cx="256.2" cy="151.4" r="11.9" class="s"/><circle cx="273.7" cy="397.8" r="11.9" fill="#5a3d3a"/><circle cx="273.7" cy="397.8" r="11.9" class="s"/><circle cx="192.1" cy="266.7" r="11.9" fill="#bf848e"/><circle cx="192.1" cy="266.7" r="11.9" class="s"/><circle cx="193.0" cy="242.2" r="11.9" fill="#d69a9d"/><circle cx="193.0" cy="242.2" r="11.9" class="s"/><circle cx="426.0" cy="267.6" r="11.9" fill="#53a276"/><circle cx="426.0" cy="267.6" r="11.9" class="s"/><circle cx="318.5" cy="206.6" r="11.9" fill="#b1b68c"/><circle cx="318.5" cy="206.6" r="11.9" class="s"/><circle cx="383.2" cy="310.1" r="11.9" fill="#4e7851"/><circle cx="383.2" cy="310.1" r="11.9" class="s"/><circle cx="434.1" cy="303.0" r="11.9" fill="#28936e"/><circle cx="434.1" cy="303.0" r="11.9" class="s"/><circle cx="343.3" cy="399.8" r="11.9" fill="#40503e"/><circle cx="343.3" cy="399.8" r="11.9" class="s"/><circle cx="409.5" cy="354.5" r="11.9" fill="#137b65"/><circle cx="409.5" cy="354.5" r="11.9" class="s"/><circle cx="308.0" cy="345.4" r="11.9" fill="#4a4834"/><circle cx="308.0" cy="345.4" r="11.9" class="s"/><circle cx="325.7" cy="338.4" r="11.9" fill="#7e806c"/><circle cx="325.7" cy="338.4" r="11.9" class="s"/><circle cx="349.6" cy="380.6" r="11.9" fill="#506452"/><circle cx="349.6" cy="380.6" r="11.9" class="s"/><circle cx="227.7" cy="343.5" r="11.9" fill="#9e656d"/><circle cx="227.7" cy="343.5" r="11.9" class="s"/><circle cx="176.1" cy="341.7" r="11.9" fill="#be6185"/><circle cx="176.1" cy="341.7" r="11.9" class="s"/><circle cx="366.9" cy="391.4" r="11.9" fill="#375f4d"/><circle cx="366.9" cy="391.4" r="11.9" class="s"/><circle cx="353.5" cy="419.9" r="11.9" fill="#2c4d46"/><circle cx="353.5" cy="419.9" r="11.9" class="s"/><circle cx="413.8" cy="284.8" r="11.9" fill="#569b73"/><circle cx="413.8" cy="284.8" r="11.9" class="s"/><circle cx="280.8" cy="142.0" r="11.9" fill="#c5bf8e"/><circle cx="280.8" cy="142.0" r="11.9" class="s"/><circle cx="352.3" cy="352.7" r="11.9" fill="#516649"/><circle cx="352.3" cy="352.7" r="11.9" class="s"/><circle cx="292.9" cy="370.4" r="11.9" fill="#493e30"/><circle cx="292.9" cy="370.4" r="11.9" class="s"/><circle cx="238.5" cy="382.7" r="11.9" fill="#995b68"/><circle cx="238.5" cy="382.7" r="11.9" class="s"/><circle cx="135.0" cy="316.3" r="11.9" fill="#d1639f"/><circle cx="135.0" cy="316.3" r="11.9" class="s"/><circle cx="424.9" cy="281.0" r="11.9" fill="#409061"/><circle cx="424.9" cy="281.0" r="11.9" class="s"/><circle cx="306.0" cy="225.4" r="11.9" fill="#b0ae89"/><circle cx="306.0" cy="225.4" r="11.9" class="s"/><circle cx="422.8" cy="318.7" r="11.9" fill="#2f8c6a"/><circle cx="422.8" cy="318.7" r="11.9" class="s"/><circle cx="351.7" cy="404.8" r="11.9" fill="#486059"/><circle cx="351.7" cy="404.8" r="11.9" class="s"/><circle cx="187.7" cy="394.6" r="11.9" fill="#a7346b"/><circle cx="187.7" cy="394.6" r="11.9" class="s"/><circle cx="401.9" cy="301.2" r="11.9" fill="#58946f"/><circle cx="401.9" cy="301.2" r="11.9" class="s"/><circle cx="279.9" cy="391.2" r="11.9" fill="#47352d"/><circle cx="279.9" cy="391.2" r="11.9" class="s"/><circle cx="297.0" cy="309.2" r="11.9" fill="#7f755a"/><circle cx="297.0" cy="309.2" r="11.9" class="s"/><circle cx="114.0" cy="251.5" r="11.9" fill="#e784b8"/><circle cx="114.0" cy="251.5" r="11.9" class="s"/><circle cx="336.9" cy="438.2" r="11.9" fill="#313f3f"/><circle cx="336.9" cy="438.2" r="11.9" class="s"/><circle cx="389.9" cy="379.2" r="11.9" fill="#256e5e"/><circle cx="389.9" cy="379.2" r="11.9" class="s"/><circle cx="346.3" cy="416.4" r="11.9" fill="#3c5046"/><circle cx="346.3" cy="416.4" r="11.9" class="s"/><circle cx="243.7" cy="172.0" r="11.9" fill="#dabd9e"/><circle cx="243.7" cy="172.0" r="11.9" class="s"/><circle cx="258.4" cy="359.5" r="11.9" fill="#6d4d47"/><circle cx="258.4" cy="359.5" r="11.9" class="s"/><circle cx="401.2" cy="347.6" r="11.9" fill="#397f63"/><circle cx="401.2" cy="347.6" r="11.9" class="s"/><circle cx="299.0" cy="415.2" r="11.9" fill="#49392c"/><circle cx="299.0" cy="415.2" r="11.9" class="s"/><circle cx="379.4" cy="331.8" r="11.9" fill="#5c8669"/><circle cx="379.4" cy="331.8" r="11.9" class="s"/><circle cx="330.5" cy="429.8" r="11.9" fill="#4b4e50"/><circle cx="330.5" cy="429.8" r="11.9" class="s"/><circle cx="385.9" cy="336.0" r="11.9" fill="#4a7a56"/><circle cx="385.9" cy="336.0" r="11.9" class="s"/><circle cx="282.6" cy="260.7" r="11.9" fill="#b09e82"/><circle cx="282.6" cy="260.7" r="11.9" class="s"/><circle cx="331.7" cy="194.1" r="11.9" fill="#a3b07b"/><circle cx="331.7" cy="194.1" r="11.9" class="s"/><circle cx="311.2" cy="398.2" r="11.9" fill="#4a432f"/><circle cx="311.2" cy="398.2" r="11.9" class="s"/><circle cx="154.8" cy="211.7" r="11.9" fill="#eaa0ad"/><circle cx="154.8" cy="211.7" r="11.9" class="s"/><circle cx="377.1" cy="234.7" r="11.9" fill="#7ea36e"/><circle cx="377.1" cy="234.7" r="11.9" class="s"/><circle cx="270.8" cy="349.5" r="12.0" fill="#7d6052"/><circle cx="270.8" cy="349.5" r="12.0" class="s"/><circle cx="115.9" cy="252.7" r="12.0" fill="#e784b5"/><circle cx="115.9" cy="252.7" r="12.0" class="s"/><circle cx="195.7" cy="159.5" r="12.0" fill="#edbbaa"/><circle cx="195.7" cy="159.5" r="12.0" class="s"/><circle cx="259.5" cy="275.8" r="12.0" fill="#987f67"/><circle cx="259.5" cy="275.8" r="12.0" class="s"/><circle cx="275.4" cy="399.2" r="12.0" fill="#5a3d34"/><circle cx="275.4" cy="399.2" r="12.0" class="s"/><circle cx="385.8" cy="309.7" r="12.0" fill="#4e784b"/><circle cx="385.8" cy="309.7" r="12.0" class="s"/><circle cx="331.1" cy="370.8" r="12.0" fill="#4b5033"/><circle cx="331.1" cy="370.8" r="12.0" class="s"/><circle cx="209.9" cy="342.9" r="12.0" fill="#935769"/><circle cx="209.9" cy="342.9" r="12.0" class="s"/><circle cx="358.7" cy="359.1" r="12.0" fill="#5f7962"/><circle cx="358.7" cy="359.1" r="12.0" class="s"/><circle cx="354.3" cy="352.7" r="12.0" fill="#506643"/><circle cx="354.3" cy="352.7" r="12.0" class="s"/><circle cx="200.9" cy="311.2" r="12.0" fill="#c07a84"/><circle cx="200.9" cy="311.2" r="12.0" class="s"/><circle cx="381.2" cy="373.2" r="12.0" fill="#40725d"/><circle cx="381.2" cy="373.2" r="12.0" class="s"/><circle cx="405.8" cy="259.8" r="12.0" fill="#619965"/><circle cx="405.8" cy="259.8" r="12.0" class="s"/><circle cx="281.2" cy="392.0" r="12.0" fill="#473529"/><circle cx="281.2" cy="392.0" r="12.0" class="s"/><circle cx="327.5" cy="388.9" r="12.0" fill="#52543c"/><circle cx="327.5" cy="388.9" r="12.0" class="s"/><circle cx="363.7" cy="410.1" r="12.0" fill="#325c54"/><circle cx="363.7" cy="410.1" r="12.0" class="s"/><circle cx="306.8" cy="352.4" r="12.0" fill="#5d563c"/><circle cx="306.8" cy="352.4" r="12.0" class="s"/><circle cx="310.9" cy="411.0" r="12.0" fill="#524738"/><circle cx="310.9" cy="411.0" r="12.0" class="s"/><circle cx="351.9" cy="381.1" r="12.0" fill="#4f644c"/><circle cx="351.9" cy="381.1" r="12.0" class="s"/><circle cx="334.4" cy="294.7" r="12.0" fill="#808963"/><circle cx="334.4" cy="294.7" r="12.0" class="s"/><circle cx="269.7" cy="50.3" r="12.0" fill="#f1e9ad"/><circle cx="269.7" cy="50.3" r="12.0" class="s"/><circle cx="297.7" cy="428.5" r="12.0" fill="#513b33"/><circle cx="297.7" cy="428.5" r="12.0" class="s"/><circle cx="254.7" cy="374.4" r="12.0" fill="#7b514c"/><circle cx="254.7" cy="374.4" r="12.0" class="s"/><circle cx="308.6" cy="454.5" r="12.0" fill="#4d3243"/><circle cx="308.6" cy="454.5" r="12.0" class="s"/><circle cx="355.0" cy="338.6" r="12.0" fill="#4a5d38"/><circle cx="355.0" cy="338.6" r="12.0" class="s"/><circle cx="456.1" cy="230.3" r="12.0" fill="#4ab075"/><circle cx="456.1" cy="230.3" r="12.0" class="s"/><circle cx="330.2" cy="318.4" r="12.0" fill="#5e6541"/><circle cx="330.2" cy="318.4" r="12.0" class="s"/><circle cx="246.9" cy="378.5" r="12.0" fill="#6b4243"/><circle cx="246.9" cy="378.5" r="12.0" class="s"/><circle cx="261.4" cy="292.8" r="12.0" fill="#af8e7b"/><circle cx="261.4" cy="292.8" r="12.0" class="s"/><circle cx="104.9" cy="264.4" r="12.0" fill="#e67ab8"/><circle cx="104.9" cy="264.4" r="12.0" class="s"/><circle cx="117.8" cy="253.8" r="12.0" fill="#e784b3"/><circle cx="117.8" cy="253.8" r="12.0" class="s"/><circle cx="294.4" cy="371.3" r="12.0" fill="#493e2c"/><circle cx="294.4" cy="371.3" r="12.0" class="s"/><circle cx="364.0" cy="317.4" r="12.0" fill="#65815a"/><circle cx="364.0" cy="317.4" r="12.0" class="s"/><circle cx="329.9" cy="362.2" r="12.0" fill="#3f4328"/><circle cx="329.9" cy="362.2" r="12.0" class="s"/><circle cx="330.4" cy="408.3" r="12.0" fill="#515445"/><circle cx="330.4" cy="408.3" r="12.0" class="s"/><circle cx="443.0" cy="249.3" r="12.0" fill="#4ea971"/><circle cx="443.0" cy="249.3" r="12.0" class="s"/><circle cx="298.7" cy="345.7" r="12.0" fill="#7f705a"/><circle cx="298.7" cy="345.7" r="12.0" class="s"/><circle cx="331.5" cy="394.1" r="12.0" fill="#626559"/><circle cx="331.5" cy="394.1" r="12.0" class="s"/><circle cx="222.7" cy="404.5" r="12.0" fill="#68254c"/><circle cx="222.7" cy="404.5" r="12.0" class="s"/><circle cx="430.2" cy="267.5" r="12.0" fill="#52a26e"/><circle cx="430.2" cy="267.5" r="12.0" class="s"/><circle cx="228.3" cy="401.9" r="12.0" fill="#682c45"/><circle cx="228.3" cy="401.9" r="12.0" class="s"/><circle cx="342.3" cy="433.8" r="12.0" fill="#394b4a"/><circle cx="342.3" cy="433.8" r="12.0" class="s"/><circle cx="328.6" cy="365.7" r="12.0" fill="#676a50"/><circle cx="328.6" cy="365.7" r="12.0" class="s"/><circle cx="313.2" cy="429.5" r="12.0" fill="#52453e"/><circle cx="313.2" cy="429.5" r="12.0" class="s"/><circle cx="313.8" cy="375.6" r="12.0" fill="#2f2d20"/><circle cx="313.8" cy="375.6" r="12.0" class="s"/><circle cx="289.4" cy="258.6" r="12.0" fill="#a19571"/><circle cx="289.4" cy="258.6" r="12.0" class="s"/><circle cx="302.8" cy="293.4" r="12.0" fill="#716d49"/><circle cx="302.8" cy="293.4" r="12.0" class="s"/><circle cx="261.0" cy="65.1" r="12.0" fill="#f1e4aa"/><circle cx="261.0" cy="65.1" r="12.0" class="s"/><circle cx="354.4" cy="405.6" r="12.0" fill="#476053"/><circle cx="354.4" cy="405.6" r="12.0" class="s"/><circle cx="276.9" cy="377.2" r="12.0" fill="#7e5e53"/><circle cx="276.9" cy="377.2" r="12.0" class="s"/><circle cx="310.0" cy="346.6" r="12.0" fill="#4a472e"/><circle cx="310.0" cy="346.6" r="12.0" class="s"/><circle cx="417.7" cy="284.9" r="12.0" fill="#559b6b"/><circle cx="417.7" cy="284.9" r="12.0" class="s"/><circle cx="301.0" cy="444.2" r="12.0" fill="#513739"/><circle cx="301.0" cy="444.2" r="12.0" class="s"/><circle cx="237.8" cy="393.6" r="12.0" fill="#69373f"/><circle cx="237.8" cy="393.6" r="12.0" class="s"/><circle cx="259.7" cy="402.2" r="12.0" fill="#7d4c4c"/><circle cx="259.7" cy="402.2" r="12.0" class="s"/><circle cx="220.3" cy="210.5" r="12.1" fill="#d8ab96"/><circle cx="220.3" cy="210.5" r="12.1" class="s"/><circle cx="309.7" cy="421.5" r="12.1" fill="#635250"/><circle cx="309.7" cy="421.5" r="12.1" class="s"/><circle cx="295.5" cy="450.7" r="12.1" fill="#512d36"/><circle cx="295.5" cy="450.7" r="12.1" class="s"/><circle cx="282.2" cy="392.7" r="12.1" fill="#473523"/><circle cx="282.2" cy="392.7" r="12.1" class="s"/><circle cx="280.4" cy="330.4" r="12.1" fill="#6f5d44"/><circle cx="280.4" cy="330.4" r="12.1" class="s"/><circle cx="405.6" cy="301.5" r="12.1" fill="#579467"/><circle cx="405.6" cy="301.5" r="12.1" class="s"/><circle cx="334.4" cy="336.0" r="12.1" fill="#646c47"/><circle cx="334.4" cy="336.0" r="12.1" class="s"/><circle cx="225.9" cy="406.7" r="12.1" fill="#672543"/><circle cx="225.9" cy="406.7" r="12.1" class="s"/><circle cx="326.9" cy="449.9" r="12.1" fill="#3c3b43"/><circle cx="326.9" cy="449.9" r="12.1" class="s"/><circle cx="234.2" cy="334.4" r="12.1" fill="#ad7672"/><circle cx="234.2" cy="334.4" r="12.1" class="s"/><circle cx="335.5" cy="117.7" r="12.1" fill="#c6d795"/><circle cx="335.5" cy="117.7" r="12.1" class="s"/><circle cx="394.3" cy="170.4" r="12.1" fill="#99c685"/><circle cx="394.3" cy="170.4" r="12.1" class="s"/><circle cx="332.7" cy="430.5" r="12.1" fill="#4a4e4a"/><circle cx="332.7" cy="430.5" r="12.1" class="s"/><circle cx="120.5" cy="255.4" r="12.1" fill="#e684af"/><circle cx="120.5" cy="255.4" r="12.1" class="s"/><circle cx="276.9" cy="400.8" r="12.1" fill="#593d2b"/><circle cx="276.9" cy="400.8" r="12.1" class="s"/><circle cx="367.7" cy="290.8" r="12.1" fill="#647f4e"/><circle cx="367.7" cy="290.8" r="12.1" class="s"/><circle cx="261.2" cy="361.3" r="12.1" fill="#6c4d3f"/><circle cx="261.2" cy="361.3" r="12.1" class="s"/><circle cx="320.0" cy="457.0" r="12.1" fill="#3d313e"/><circle cx="320.0" cy="457.0" r="12.1" class="s"/><circle cx="231.4" cy="404.0" r="12.1" fill="#672c3c"/><circle cx="231.4" cy="404.0" r="12.1" class="s"/><circle cx="379.6" cy="190.8" r="12.1" fill="#9abe81"/><circle cx="379.6" cy="190.8" r="12.1" class="s"/><circle cx="166.6" cy="287.1" r="12.1" fill="#d37f92"/><circle cx="166.6" cy="287.1" r="12.1" class="s"/><circle cx="140.9" cy="319.4" r="12.1" fill="#d06493"/><circle cx="140.9" cy="319.4" r="12.1" class="s"/><circle cx="382.7" cy="332.3" r="12.1" fill="#5b8661"/><circle cx="382.7" cy="332.3" r="12.1" class="s"/><circle cx="295.4" cy="372.0" r="12.1" fill="#483e27"/><circle cx="295.4" cy="372.0" r="12.1" class="s"/><circle cx="277.1" cy="418.5" r="12.1" fill="#613e33"/><circle cx="277.1" cy="418.5" r="12.1" class="s"/><circle cx="180.1" cy="344.9" r="12.1" fill="#bd617b"/><circle cx="180.1" cy="344.9" r="12.1" class="s"/><circle cx="249.3" cy="380.1" r="12.1" fill="#6a423b"/><circle cx="249.3" cy="380.1" r="12.1" class="s"/><circle cx="249.7" cy="84.4" r="12.1" fill="#f0dca7"/><circle cx="249.7" cy="84.4" r="12.1" class="s"/><circle cx="365.5" cy="210.6" r="12.1" fill="#9ab67e"/><circle cx="365.5" cy="210.6" r="12.1" class="s"/><circle cx="321.0" cy="139.7" r="12.1" fill="#c6cf92"/><circle cx="321.0" cy="139.7" r="12.1" class="s"/><circle cx="253.9" cy="313.2" r="12.1" fill="#9f7966"/><circle cx="253.9" cy="313.2" r="12.1" class="s"/><circle cx="239.8" cy="394.9" r="12.1" fill="#693738"/><circle cx="239.8" cy="394.9" r="12.1" class="s"/><circle cx="233.0" cy="320.0" r="12.1" fill="#95685f"/><circle cx="233.0" cy="320.0" r="12.1" class="s"/><circle cx="317.2" cy="447.5" r="12.1" fill="#4c3d43"/><circle cx="317.2" cy="447.5" r="12.1" class="s"/><circle cx="290.7" cy="399.2" r="12.1" fill="#624b37"/><circle cx="290.7" cy="399.2" r="12.1" class="s"/><circle cx="352.0" cy="229.7" r="12.1" fill="#9baf7b"/><circle cx="352.0" cy="229.7" r="12.1" class="s"/><circle cx="431.5" cy="202.9" r="12.1" fill="#74ba79"/><circle cx="431.5" cy="202.9" r="12.1" class="s"/><circle cx="233.1" cy="405.3" r="12.1" fill="#672c36"/><circle cx="233.1" cy="405.3" r="12.1" class="s"/><circle cx="309.1" cy="352.7" r="12.1" fill="#5c5635"/><circle cx="309.1" cy="352.7" r="12.1" class="s"/><circle cx="238.7" cy="213.5" r="12.1" fill="#c2a182"/><circle cx="238.7" cy="213.5" r="12.1" class="s"/><circle cx="289.4" cy="382.4" r="12.1" fill="#5b482d"/><circle cx="289.4" cy="382.4" r="12.1" class="s"/><circle cx="361.6" cy="359.8" r="12.1" fill="#5e795b"/><circle cx="361.6" cy="359.8" r="12.1" class="s"/><circle cx="338.9" cy="248.0" r="12.1" fill="#9ba778"/><circle cx="338.9" cy="248.0" r="12.1" class="s"/><circle cx="212.7" cy="367.3" r="12.1" fill="#aa5e6a"/><circle cx="212.7" cy="367.3" r="12.1" class="s"/><circle cx="310.2" cy="455.0" r="12.1" fill="#4c323e"/><circle cx="310.2" cy="455.0" r="12.1" class="s"/><circle cx="409.4" cy="259.3" r="12.1" fill="#60995d"/><circle cx="409.4" cy="259.3" r="12.1" class="s"/><circle cx="122.5" cy="341.7" r="12.1" fill="#ce4895"/><circle cx="122.5" cy="341.7" r="12.1" class="s"/><circle cx="417.2" cy="222.6" r="12.1" fill="#76b376"/><circle cx="417.2" cy="222.6" r="12.1" class="s"/><circle cx="145.7" cy="327.4" r="12.1" fill="#ba5690"/><circle cx="145.7" cy="327.4" r="12.1" class="s"/><circle cx="308.0" cy="375.0" r="12.1" fill="#63593b"/><circle cx="308.0" cy="375.0" r="12.1" class="s"/><circle cx="171.7" cy="304.1" r="12.1" fill="#bc6d85"/><circle cx="171.7" cy="304.1" r="12.1" class="s"/><circle cx="307.0" cy="161.0" r="12.1" fill="#c6c68f"/><circle cx="307.0" cy="161.0" r="12.1" class="s"/><circle cx="295.8" cy="372.3" r="12.1" fill="#483e25"/><circle cx="295.8" cy="372.3" r="12.1" class="s"/><circle cx="366.8" cy="317.5" r="12.1" fill="#658153"/><circle cx="366.8" cy="317.5" r="12.1" class="s"/><circle cx="198.3" cy="364.9" r="12.1" fill="#914662"/><circle cx="198.3" cy="364.9" r="12.1" class="s"/><circle cx="403.5" cy="241.5" r="12.1" fill="#78ac73"/><circle cx="403.5" cy="241.5" r="12.1" class="s"/><circle cx="234.5" cy="406.2" r="12.1" fill="#662c30"/><circle cx="234.5" cy="406.2" r="12.1" class="s"/><circle cx="330.6" cy="366.3" r="12.1" fill="#666a4a"/><circle cx="330.6" cy="366.3" r="12.1" class="s"/><circle cx="314.7" cy="282.6" r="12.1" fill="#9b9772"/><circle cx="314.7" cy="282.6" r="12.1" class="s"/><circle cx="390.2" cy="259.8" r="12.1" fill="#79a46f"/><circle cx="390.2" cy="259.8" r="12.1" class="s"/><circle cx="241.4" cy="98.4" r="12.1" fill="#efd7a5"/><circle cx="241.4" cy="98.4" r="12.1" class="s"/><circle cx="308.2" cy="396.2" r="12.1" fill="#665944"/><circle cx="308.2" cy="396.2" r="12.1" class="s"/><circle cx="290.3" cy="419.9" r="12.2" fill="#66483e"/><circle cx="290.3" cy="419.9" r="12.2" class="s"/><circle cx="257.1" cy="376.5" r="12.2" fill="#7a5143"/><circle cx="257.1" cy="376.5" r="12.2" class="s"/><circle cx="377.4" cy="277.4" r="12.2" fill="#7a9d6c"/><circle cx="377.4" cy="277.4" r="12.2" class="s"/><circle cx="277.8" cy="436.4" r="12.2" fill="#653939"/><circle cx="277.8" cy="436.4" r="12.2" class="s"/><circle cx="272.3" cy="443.7" r="12.2" fill="#642f36"/><circle cx="272.3" cy="443.7" r="12.2" class="s"/><circle cx="241.2" cy="395.9" r="12.2" fill="#683632"/><circle cx="241.2" cy="395.9" r="12.2" class="s"/><circle cx="336.3" cy="336.0" r="12.2" fill="#646c41"/><circle cx="336.3" cy="336.0" r="12.2" class="s"/><circle cx="333.9" cy="395.0" r="12.2" fill="#616552"/><circle cx="333.9" cy="395.0" r="12.2" class="s"/><circle cx="293.6" cy="181.6" r="12.2" fill="#c5be8b"/><circle cx="293.6" cy="181.6" r="12.2" class="s"/><circle cx="184.7" cy="376.5" r="12.2" fill="#8f356a"/><circle cx="184.7" cy="376.5" r="12.2" class="s"/><circle cx="274.0" cy="351.0" r="12.2" fill="#7c6047"/><circle cx="274.0" cy="351.0" r="12.2" class="s"/><circle cx="292.8" cy="314.0" r="12.2" fill="#9b886c"/><circle cx="292.8" cy="314.0" r="12.2" class="s"/><circle cx="353.3" cy="310.2" r="12.2" fill="#7c8e66"/><circle cx="353.3" cy="310.2" r="12.2" class="s"/><circle cx="333.7" cy="318.4" r="12.2" fill="#5e6539"/><circle cx="333.7" cy="318.4" r="12.2" class="s"/><circle cx="199.1" cy="245.3" r="12.2" fill="#d6998f"/><circle cx="199.1" cy="245.3" r="12.2" class="s"/><circle cx="250.9" cy="381.2" r="12.2" fill="#6a4134"/><circle cx="250.9" cy="381.2" r="12.2" class="s"/><circle cx="301.7" cy="309.9" r="12.2" fill="#7e754e"/><circle cx="301.7" cy="309.9" r="12.2" class="s"/><circle cx="310.1" cy="352.8" r="12.2" fill="#5c5631"/><circle cx="310.1" cy="352.8" r="12.2" class="s"/><circle cx="191.1" cy="400.7" r="12.2" fill="#a5355e"/><circle cx="191.1" cy="400.7" r="12.2" class="s"/><circle cx="165.6" cy="368.4" r="12.2" fill="#ba4873"/><circle cx="165.6" cy="368.4" r="12.2" class="s"/><circle cx="331.5" cy="339.9" r="12.2" fill="#7d8060"/><circle cx="331.5" cy="339.9" r="12.2" class="s"/><circle cx="311.5" cy="422.5" r="12.2" fill="#62524a"/><circle cx="311.5" cy="422.5" r="12.2" class="s"/><circle cx="280.7" cy="201.3" r="12.2" fill="#c5b588"/><circle cx="280.7" cy="201.3" r="12.2" class="s"/><circle cx="264.6" cy="354.8" r="12.2" fill="#997163"/><circle cx="264.6" cy="354.8" r="12.2" class="s"/><circle cx="370.2" cy="290.4" r="12.2" fill="#637f47"/><circle cx="370.2" cy="290.4" r="12.2" class="s"/><circle cx="335.1" cy="261.6" r="12.2" fill="#7f8a55"/><circle cx="335.1" cy="261.6" r="12.2" class="s"/><circle cx="124.6" cy="257.9" r="12.2" fill="#e684a8"/><circle cx="124.6" cy="257.9" r="12.2" class="s"/><circle cx="216.7" cy="347.1" r="12.2" fill="#925759"/><circle cx="216.7" cy="347.1" r="12.2" class="s"/><circle cx="263.1" cy="362.5" r="12.2" fill="#6c4d37"/><circle cx="263.1" cy="362.5" r="12.2" class="s"/><circle cx="242.6" cy="396.9" r="12.2" fill="#673629"/><circle cx="242.6" cy="396.9" r="12.2" class="s"/><circle cx="303.1" cy="378.3" r="12.2" fill="#7d6b58"/><circle cx="303.1" cy="378.3" r="12.2" class="s"/><circle cx="295.7" cy="441.5" r="12.2" fill="#624043"/><circle cx="295.7" cy="441.5" r="12.2" class="s"/><circle cx="242.3" cy="387.2" r="12.2" fill="#975b5b"/><circle cx="242.3" cy="387.2" r="12.2" class="s"/><circle cx="288.6" cy="449.9" r="12.2" fill="#61343f"/><circle cx="288.6" cy="449.9" r="12.2" class="s"/><circle cx="249.1" cy="423.0" r="12.2" fill="#7a3c3f"/><circle cx="249.1" cy="423.0" r="12.2" class="s"/><circle cx="312.0" cy="347.8" r="12.2" fill="#4a4727"/><circle cx="312.0" cy="347.8" r="12.2" class="s"/><circle cx="226.9" cy="409.9" r="12.2" fill="#954555"/><circle cx="226.9" cy="409.9" r="12.2" class="s"/><circle cx="280.5" cy="408.6" r="12.2" fill="#7c5650"/><circle cx="280.5" cy="408.6" r="12.2" class="s"/><circle cx="228.0" cy="121.1" r="12.2" fill="#eecda2"/><circle cx="228.0" cy="121.1" r="12.2" class="s"/><circle cx="261.7" cy="405.0" r="12.2" fill="#7b4c43"/><circle cx="261.7" cy="405.0" r="12.2" class="s"/><circle cx="220.0" cy="420.0" r="12.2" fill="#933651"/><circle cx="220.0" cy="420.0" r="12.2" class="s"/><circle cx="251.9" cy="381.9" r="12.2" fill="#69412e"/><circle cx="251.9" cy="381.9" r="12.2" class="s"/><circle cx="264.7" cy="429.8" r="12.2" fill="#7b434a"/><circle cx="264.7" cy="429.8" r="12.2" class="s"/><circle cx="117.1" cy="353.1" r="12.2" fill="#cc308f"/><circle cx="117.1" cy="353.1" r="12.2" class="s"/><circle cx="279.6" cy="379.3" r="12.2" fill="#7d5e49"/><circle cx="279.6" cy="379.3" r="12.2" class="s"/><circle cx="244.9" cy="398.7" r="12.2" fill="#774237"/><circle cx="244.9" cy="398.7" r="12.2" class="s"/><circle cx="256.6" cy="238.3" r="12.2" fill="#c3a482"/><circle cx="256.6" cy="238.3" r="12.2" class="s"/><circle cx="302.5" cy="347.0" r="12.2" fill="#7e704f"/><circle cx="302.5" cy="347.0" r="12.2" class="s"/><circle cx="282.7" cy="331.9" r="12.2" fill="#6e5d3b"/><circle cx="282.7" cy="331.9" r="12.2" class="s"/><circle cx="235.7" cy="414.4" r="12.2" fill="#753430"/><circle cx="235.7" cy="414.4" r="12.2" class="s"/><circle cx="190.3" cy="380.3" r="12.2" fill="#8e365d"/><circle cx="190.3" cy="380.3" r="12.2" class="s"/><circle cx="335.3" cy="318.3" r="12.3" fill="#5d6434"/><circle cx="335.3" cy="318.3" r="12.3" class="s"/><circle cx="296.1" cy="226.1" r="12.3" fill="#9a9560"/><circle cx="296.1" cy="226.1" r="12.3" class="s"/><circle cx="252.3" cy="382.2" r="12.3" fill="#69412a"/><circle cx="252.3" cy="382.2" r="12.3" class="s"/><circle cx="339.9" cy="294.9" r="12.3" fill="#7f8957"/><circle cx="339.9" cy="294.9" r="12.3" class="s"/><circle cx="162.5" cy="216.4" r="12.3" fill="#e99f9f"/><circle cx="162.5" cy="216.4" r="12.3" class="s"/><circle cx="258.6" cy="378.0" r="12.3" fill="#79513b"/><circle cx="258.6" cy="378.0" r="12.3" class="s"/><circle cx="203.7" cy="368.4" r="12.3" fill="#904654"/><circle cx="203.7" cy="368.4" r="12.3" class="s"/><circle cx="127.4" cy="344.4" r="12.3" fill="#cd488a"/><circle cx="127.4" cy="344.4" r="12.3" class="s"/><circle cx="245.3" cy="399.6" r="12.3" fill="#774232"/><circle cx="245.3" cy="399.6" r="12.3" class="s"/><circle cx="384.8" cy="233.8" r="12.3" fill="#7ea260"/><circle cx="384.8" cy="233.8" r="12.3" class="s"/><circle cx="244.0" cy="432.8" r="12.3" fill="#773037"/><circle cx="244.0" cy="432.8" r="12.3" class="s"/><circle cx="145.9" cy="322.6" r="12.3" fill="#d06488"/><circle cx="145.9" cy="322.6" r="12.3" class="s"/><circle cx="234.9" cy="271.9" r="12.3" fill="#c2937c"/><circle cx="234.9" cy="271.9" r="12.3" class="s"/><circle cx="264.2" cy="363.3" r="12.3" fill="#6b4d30"/><circle cx="264.2" cy="363.3" r="12.3" class="s"/><circle cx="249.7" cy="424.6" r="12.3" fill="#793c3a"/><circle cx="249.7" cy="424.6" r="12.3" class="s"/><circle cx="264.2" cy="278.7" r="12.3" fill="#987e59"/><circle cx="264.2" cy="278.7" r="12.3" class="s"/><circle cx="305.8" cy="295.2" r="12.3" fill="#706c3f"/><circle cx="305.8" cy="295.2" r="12.3" class="s"/><circle cx="186.7" cy="387.2" r="12.3" fill="#8d2a59"/><circle cx="186.7" cy="387.2" r="12.3" class="s"/><circle cx="262.5" cy="406.3" r="12.3" fill="#7b4c3e"/><circle cx="262.5" cy="406.3" r="12.3" class="s"/><circle cx="436.1" cy="202.2" r="12.3" fill="#74ba6f"/><circle cx="436.1" cy="202.2" r="12.3" class="s"/><circle cx="276.2" cy="352.1" r="12.3" fill="#7b603e"/><circle cx="276.2" cy="352.1" r="12.3" class="s"/><circle cx="421.6" cy="222.1" r="12.3" fill="#75b36c"/><circle cx="421.6" cy="222.1" r="12.3" class="s"/><circle cx="94.7" cy="290.3" r="12.3" fill="#e366af"/><circle cx="94.7" cy="290.3" r="12.3" class="s"/><circle cx="407.5" cy="241.3" r="12.3" fill="#77ab69"/><circle cx="407.5" cy="241.3" r="12.3" class="s"/><circle cx="128.4" cy="260.2" r="12.3" fill="#e683a1"/><circle cx="128.4" cy="260.2" r="12.3" class="s"/><circle cx="394.0" cy="259.7" r="12.3" fill="#78a466"/><circle cx="394.0" cy="259.7" r="12.3" class="s"/><circle cx="380.9" cy="277.5" r="12.3" fill="#799d63"/><circle cx="380.9" cy="277.5" r="12.3" class="s"/><circle cx="202.9" cy="273.3" r="12.3" fill="#be8377"/><circle cx="202.9" cy="273.3" r="12.3" class="s"/><circle cx="259.3" cy="378.7" r="12.3" fill="#795135"/><circle cx="259.3" cy="378.7" r="12.3" class="s"/><circle cx="280.8" cy="380.3" r="12.3" fill="#7c5e42"/><circle cx="280.8" cy="380.3" r="12.3" class="s"/><circle cx="264.7" cy="363.6" r="12.3" fill="#6b4d2b"/><circle cx="264.7" cy="363.6" r="12.3" class="s"/><circle cx="356.4" cy="310.6" r="12.3" fill="#7b8e5e"/><circle cx="356.4" cy="310.6" r="12.3" class="s"/><circle cx="237.0" cy="322.5" r="12.3" fill="#946752"/><circle cx="237.0" cy="322.5" r="12.3" class="s"/><circle cx="194.6" cy="383.3" r="12.3" fill="#8d364f"/><circle cx="194.6" cy="383.3" r="12.3" class="s"/><circle cx="334.1" cy="340.6" r="12.3" fill="#7c8058"/><circle cx="334.1" cy="340.6" r="12.3" class="s"/><circle cx="171.6" cy="290.3" r="12.3" fill="#d27f86"/><circle cx="171.6" cy="290.3" r="12.3" class="s"/><circle cx="305.0" cy="379.4" r="12.3" fill="#7c6b50"/><circle cx="305.0" cy="379.4" r="12.3" class="s"/><circle cx="282.0" cy="410.0" r="12.3" fill="#7b5649"/><circle cx="282.0" cy="410.0" r="12.3" class="s"/><circle cx="206.8" cy="315.4" r="12.3" fill="#bf7a73"/><circle cx="206.8" cy="315.4" r="12.3" class="s"/><circle cx="265.8" cy="431.4" r="12.3" fill="#7a4343"/><circle cx="265.8" cy="431.4" r="12.3" class="s"/><circle cx="220.1" cy="349.3" r="12.3" fill="#92574e"/><circle cx="220.1" cy="349.3" r="12.3" class="s"/><circle cx="304.2" cy="347.6" r="12.3" fill="#7d7048"/><circle cx="304.2" cy="347.6" r="12.3" class="s"/><circle cx="258.6" cy="440.9" r="12.3" fill="#783640"/><circle cx="258.6" cy="440.9" r="12.3" class="s"/><circle cx="190.5" cy="389.9" r="12.3" fill="#8c2a4c"/><circle cx="190.5" cy="389.9" r="12.3" class="s"/><circle cx="97.0" cy="291.7" r="12.4" fill="#e366ab"/><circle cx="97.0" cy="291.7" r="12.4" class="s"/><circle cx="206.6" cy="370.4" r="12.4" fill="#8f4649"/><circle cx="206.6" cy="370.4" r="12.4" class="s"/><circle cx="121.4" cy="355.5" r="12.4" fill="#cb3184"/><circle cx="121.4" cy="355.5" r="12.4" class="s"/><circle cx="202.7" cy="163.7" r="12.4" fill="#ecbb9b"/><circle cx="202.7" cy="163.7" r="12.4" class="s"/><circle cx="197.1" cy="385.1" r="12.4" fill="#8c3646"/><circle cx="197.1" cy="385.1" r="12.4" class="s"/><circle cx="277.1" cy="352.5" r="12.4" fill="#7b6038"/><circle cx="277.1" cy="352.5" r="12.4" class="s"/><circle cx="284.2" cy="332.8" r="12.4" fill="#6e5c33"/><circle cx="284.2" cy="332.8" r="12.4" class="s"/><circle cx="372.4" cy="145.1" r="12.4" fill="#b0ce82"/><circle cx="372.4" cy="145.1" r="12.4" class="s"/><circle cx="192.8" cy="391.6" r="12.4" fill="#8b2a44"/><circle cx="192.8" cy="391.6" r="12.4" class="s"/><circle cx="357.3" cy="166.4" r="12.4" fill="#b0c67f"/><circle cx="357.3" cy="166.4" r="12.4" class="s"/><circle cx="342.7" cy="187.0" r="12.4" fill="#b0be7c"/><circle cx="342.7" cy="187.0" r="12.4" class="s"/><circle cx="328.7" cy="207.0" r="12.4" fill="#b0b679"/><circle cx="328.7" cy="207.0" r="12.4" class="s"/><circle cx="342.4" cy="294.9" r="12.4" fill="#7e894f"/><circle cx="342.4" cy="294.9" r="12.4" class="s"/><circle cx="315.2" cy="226.2" r="12.4" fill="#afae76"/><circle cx="315.2" cy="226.2" r="12.4" class="s"/><circle cx="98.5" cy="292.6" r="12.4" fill="#e366a9"/><circle cx="98.5" cy="292.6" r="12.4" class="s"/><circle cx="137.7" cy="349.6" r="12.4" fill="#b73f87"/><circle cx="137.7" cy="349.6" r="12.4" class="s"/><circle cx="184.6" cy="349.9" r="12.4" fill="#bc616b"/><circle cx="184.6" cy="349.9" r="12.4" class="s"/><circle cx="290.3" cy="262.3" r="12.4" fill="#af9d70"/><circle cx="290.3" cy="262.3" r="12.4" class="s"/><circle cx="258.3" cy="315.2" r="12.4" fill="#9e7958"/><circle cx="258.3" cy="315.2" r="12.4" class="s"/><circle cx="267.7" cy="295.2" r="12.4" fill="#ae8d6b"/><circle cx="267.7" cy="295.2" r="12.4" class="s"/><circle cx="194.7" cy="392.9" r="12.4" fill="#8a2b3b"/><circle cx="194.7" cy="392.9" r="12.4" class="s"/><circle cx="238.8" cy="338.0" r="12.4" fill="#ab7563"/><circle cx="238.8" cy="338.0" r="12.4" class="s"/><circle cx="216.0" cy="372.0" r="12.4" fill="#a95e5c"/><circle cx="216.0" cy="372.0" r="12.4" class="s"/><circle cx="199.0" cy="386.4" r="12.4" fill="#8c363d"/><circle cx="199.0" cy="386.4" r="12.4" class="s"/><circle cx="193.2" cy="406.6" r="12.4" fill="#a43652"/><circle cx="193.2" cy="406.6" r="12.4" class="s"/><circle cx="295.8" cy="259.6" r="12.4" fill="#a19461"/><circle cx="295.8" cy="259.6" r="12.4" class="s"/><circle cx="196.0" cy="393.8" r="12.4" fill="#892b34"/><circle cx="196.0" cy="393.8" r="12.4" class="s"/><circle cx="99.9" cy="293.5" r="12.4" fill="#e366a6"/><circle cx="99.9" cy="293.5" r="12.4" class="s"/><circle cx="131.4" cy="347.4" r="12.4" fill="#cc4880"/><circle cx="131.4" cy="347.4" r="12.4" class="s"/><circle cx="196.5" cy="394.2" r="12.4" fill="#892b30"/><circle cx="196.5" cy="394.2" r="12.4" class="s"/><circle cx="169.2" cy="374.0" r="12.4" fill="#b84864"/><circle cx="169.2" cy="374.0" r="12.4" class="s"/><circle cx="221.4" cy="424.6" r="12.4" fill="#923647"/><circle cx="221.4" cy="424.6" r="12.4" class="s"/><circle cx="308.8" cy="87.7" r="12.4" fill="#dce094"/><circle cx="308.8" cy="87.7" r="12.4" class="s"/><circle cx="228.6" cy="414.1" r="12.4" fill="#93464a"/><circle cx="228.6" cy="414.1" r="12.4" class="s"/><circle cx="208.6" cy="371.8" r="12.4" fill="#8e4640"/><circle cx="208.6" cy="371.8" r="12.4" class="s"/><circle cx="388.3" cy="233.2" r="12.4" fill="#7da257"/><circle cx="388.3" cy="233.2" r="12.4" class="s"/><circle cx="284.8" cy="333.2" r="12.4" fill="#6e5c2d"/><circle cx="284.8" cy="333.2" r="12.4" class="s"/><circle cx="200.3" cy="387.3" r="12.4" fill="#8b3635"/><circle cx="200.3" cy="387.3" r="12.4" class="s"/><circle cx="244.8" cy="390.8" r="12.4" fill="#965b50"/><circle cx="244.8" cy="390.8" r="12.4" class="s"/><circle cx="340.8" cy="194.4" r="12.4" fill="#a2b069"/><circle cx="340.8" cy="194.4" r="12.4" class="s"/><circle cx="162.3" cy="384.7" r="12.4" fill="#b63560"/><circle cx="162.3" cy="384.7" r="12.4" class="s"/><circle cx="200.8" cy="387.7" r="12.5" fill="#8a3730"/><circle cx="200.8" cy="387.7" r="12.5" class="s"/><circle cx="180.8" cy="309.8" r="12.5" fill="#bb6d70"/><circle cx="180.8" cy="309.8" r="12.5" class="s"/><circle cx="268.1" cy="357.5" r="12.5" fill="#987157"/><circle cx="268.1" cy="357.5" r="12.5" class="s"/><circle cx="340.0" cy="261.6" r="12.5" fill="#7f8949"/><circle cx="340.0" cy="261.6" r="12.5" class="s"/><circle cx="294.1" cy="110.9" r="12.5" fill="#dbd790"/><circle cx="294.1" cy="110.9" r="12.5" class="s"/><circle cx="222.4" cy="350.9" r="12.5" fill="#915643"/><circle cx="222.4" cy="350.9" r="12.5" class="s"/><circle cx="149.9" cy="325.8" r="12.5" fill="#cf647d"/><circle cx="149.9" cy="325.8" r="12.5" class="s"/><circle cx="306.5" cy="310.5" r="12.5" fill="#7d743c"/><circle cx="306.5" cy="310.5" r="12.5" class="s"/><circle cx="297.7" cy="315.6" r="12.5" fill="#99885e"/><circle cx="297.7" cy="315.6" r="12.5" class="s"/><circle cx="101.9" cy="294.8" r="12.5" fill="#e366a3"/><circle cx="101.9" cy="294.8" r="12.5" class="s"/><circle cx="206.1" cy="399.2" r="12.5" fill="#953e40"/><circle cx="206.1" cy="399.2" r="12.5" class="s"/><circle cx="320.7" cy="283.5" r="12.5" fill="#9a9763"/><circle cx="320.7" cy="283.5" r="12.5" class="s"/><circle cx="279.9" cy="133.2" r="12.5" fill="#dace8d"/><circle cx="279.9" cy="133.2" r="12.5" class="s"/><circle cx="209.9" cy="372.8" r="12.5" fill="#8d4637"/><circle cx="209.9" cy="372.8" r="12.5" class="s"/><circle cx="125.0" cy="358.4" r="12.5" fill="#ca327a"/><circle cx="125.0" cy="358.4" r="12.5" class="s"/><circle cx="307.9" cy="296.5" r="12.5" fill="#706c35"/><circle cx="307.9" cy="296.5" r="12.5" class="s"/><circle cx="346.1" cy="248.2" r="12.5" fill="#9aa668"/><circle cx="346.1" cy="248.2" r="12.5" class="s"/><circle cx="359.8" cy="229.5" r="12.5" fill="#99ae6b"/><circle cx="359.8" cy="229.5" r="12.5" class="s"/><circle cx="200.7" cy="409.6" r="12.5" fill="#923138"/><circle cx="200.7" cy="409.6" r="12.5" class="s"/><circle cx="239.6" cy="324.3" r="12.5" fill="#946746"/><circle cx="239.6" cy="324.3" r="12.5" class="s"/><circle cx="374.0" cy="210.0" r="12.5" fill="#99b66e"/><circle cx="374.0" cy="210.0" r="12.5" class="s"/><circle cx="210.5" cy="373.2" r="12.5" fill="#8d4632"/><circle cx="210.5" cy="373.2" r="12.5" class="s"/><circle cx="266.3" cy="154.8" r="12.5" fill="#d9c58a"/><circle cx="266.3" cy="154.8" r="12.5" class="s"/><circle cx="388.9" cy="189.9" r="12.5" fill="#99be71"/><circle cx="388.9" cy="189.9" r="12.5" class="s"/><circle cx="404.3" cy="169.1" r="12.5" fill="#98c674"/><circle cx="404.3" cy="169.1" r="12.5" class="s"/><circle cx="206.5" cy="400.7" r="12.5" fill="#943f3a"/><circle cx="206.5" cy="400.7" r="12.5" class="s"/><circle cx="145.2" cy="354.7" r="12.5" fill="#b63f75"/><circle cx="145.2" cy="354.7" r="12.5" class="s"/><circle cx="222.0" cy="426.7" r="12.5" fill="#913741"/><circle cx="222.0" cy="426.7" r="12.5" class="s"/><circle cx="288.1" cy="146.4" r="12.5" fill="#c5be79"/><circle cx="288.1" cy="146.4" r="12.5" class="s"/><circle cx="229.3" cy="416.1" r="12.5" fill="#924644"/><circle cx="229.3" cy="416.1" r="12.5" class="s"/><circle cx="253.1" cy="175.4" r="12.5" fill="#d9bc87"/><circle cx="253.1" cy="175.4" r="12.5" class="s"/><circle cx="134.9" cy="264.2" r="12.5" fill="#e58394"/><circle cx="134.9" cy="264.2" r="12.5" class="s"/><circle cx="105.1" cy="296.8" r="12.5" fill="#e2669d"/><circle cx="105.1" cy="296.8" r="12.5" class="s"/><circle cx="223.8" cy="351.9" r="12.5" fill="#905639"/><circle cx="223.8" cy="351.9" r="12.5" class="s"/><circle cx="245.9" cy="392.5" r="12.5" fill="#955b49"/><circle cx="245.9" cy="392.5" r="12.5" class="s"/><circle cx="134.7" cy="350.5" r="12.6" fill="#cb4975"/><circle cx="134.7" cy="350.5" r="12.6" class="s"/><circle cx="219.6" cy="380.8" r="12.6" fill="#97513d"/><circle cx="219.6" cy="380.8" r="12.6" class="s"/><circle cx="87.2" cy="311.0" r="12.6" fill="#e152a8"/><circle cx="87.2" cy="311.0" r="12.6" class="s"/><circle cx="276.1" cy="54.2" r="12.6" fill="#f1e99b"/><circle cx="276.1" cy="54.2" r="12.6" class="s"/><circle cx="267.5" cy="280.8" r="12.6" fill="#977e4b"/><circle cx="267.5" cy="280.8" r="12.6" class="s"/><circle cx="168.8" cy="220.3" r="12.6" fill="#e99f91"/><circle cx="168.8" cy="220.3" r="12.6" class="s"/><circle cx="228.6" cy="214.1" r="12.6" fill="#d7ab81"/><circle cx="228.6" cy="214.1" r="12.6" class="s"/><circle cx="269.7" cy="358.7" r="12.6" fill="#97714f"/><circle cx="269.7" cy="358.7" r="12.6" class="s"/><circle cx="308.8" cy="297.0" r="12.6" fill="#706c2f"/><circle cx="308.8" cy="297.0" r="12.6" class="s"/><circle cx="342.2" cy="261.5" r="12.6" fill="#7e8941"/><circle cx="342.2" cy="261.5" r="12.6" class="s"/><circle cx="245.1" cy="217.5" r="12.6" fill="#c2a06f"/><circle cx="245.1" cy="217.5" r="12.6" class="s"/><circle cx="194.4" cy="411.3" r="12.6" fill="#a23748"/><circle cx="194.4" cy="411.3" r="12.6" class="s"/><circle cx="224.3" cy="352.3" r="12.6" fill="#905633"/><circle cx="224.3" cy="352.3" r="12.6" class="s"/><circle cx="201.7" cy="400.3" r="12.6" fill="#a4474b"/><circle cx="201.7" cy="400.3" r="12.6" class="s"/><circle cx="128.0" cy="361.5" r="12.6" fill="#c93371"/><circle cx="128.0" cy="361.5" r="12.6" class="s"/><circle cx="261.2" cy="316.5" r="12.6" fill="#9d794c"/><circle cx="261.2" cy="316.5" r="12.6" class="s"/><circle cx="299.9" cy="316.4" r="12.6" fill="#988855"/><circle cx="299.9" cy="316.4" r="12.6" class="s"/><circle cx="206.3" cy="249.1" r="12.6" fill="#d5997c"/><circle cx="206.3" cy="249.1" r="12.6" class="s"/><circle cx="218.1" cy="375.7" r="12.6" fill="#a75e50"/><circle cx="218.1" cy="375.7" r="12.6" class="s"/><circle cx="108.0" cy="298.7" r="12.6" fill="#e26697"/><circle cx="108.0" cy="298.7" r="12.6" class="s"/><circle cx="238.4" cy="352.6" r="12.6" fill="#9a6540"/><circle cx="238.4" cy="352.6" r="12.6" class="s"/><circle cx="164.4" cy="390.3" r="12.6" fill="#b43654"/><circle cx="164.4" cy="390.3" r="12.6" class="s"/><circle cx="208.3" cy="276.7" r="12.6" fill="#be8367"/><circle cx="208.3" cy="276.7" r="12.6" class="s"/><circle cx="151.0" cy="358.7" r="12.6" fill="#b44063"/><circle cx="151.0" cy="358.7" r="12.6" class="s"/><circle cx="171.5" cy="379.2" r="12.6" fill="#b74957"/><circle cx="171.5" cy="379.2" r="12.6" class="s"/><circle cx="241.2" cy="325.4" r="12.6" fill="#93673c"/><circle cx="241.2" cy="325.4" r="12.6" class="s"/><circle cx="323.4" cy="283.9" r="12.6" fill="#99975a"/><circle cx="323.4" cy="283.9" r="12.6" class="s"/><circle cx="187.7" cy="354.4" r="12.6" fill="#ba615d"/><circle cx="187.7" cy="354.4" r="12.6" class="s"/><circle cx="300.3" cy="228.7" r="12.6" fill="#9a9451"/><circle cx="300.3" cy="228.7" r="12.6" class="s"/><circle cx="241.8" cy="340.8" r="12.7" fill="#aa7556"/><circle cx="241.8" cy="340.8" r="12.7" class="s"/><circle cx="210.9" cy="319.0" r="12.7" fill="#bd7a63"/><circle cx="210.9" cy="319.0" r="12.7" class="s"/><circle cx="185.4" cy="312.8" r="12.7" fill="#ba6c61"/><circle cx="185.4" cy="312.8" r="12.7" class="s"/><circle cx="194.8" cy="413.5" r="12.7" fill="#a13741"/><circle cx="194.8" cy="413.5" r="12.7" class="s"/><circle cx="349.4" cy="248.3" r="12.7" fill="#99a65e"/><circle cx="349.4" cy="248.3" r="12.7" class="s"/><circle cx="177.4" cy="294.4" r="12.7" fill="#d17e74"/><circle cx="177.4" cy="294.4" r="12.7" class="s"/><circle cx="84.4" cy="319.1" r="12.7" fill="#e048a4"/><circle cx="84.4" cy="319.1" r="12.7" class="s"/><circle cx="240.5" cy="274.5" r="12.7" fill="#c0936a"/><circle cx="240.5" cy="274.5" r="12.7" class="s"/><circle cx="202.2" cy="402.4" r="12.7" fill="#a34844"/><circle cx="202.2" cy="402.4" r="12.7" class="s"/><circle cx="363.3" cy="229.3" r="12.7" fill="#99ae61"/><circle cx="363.3" cy="229.3" r="12.7" class="s"/><circle cx="167.2" cy="341.3" r="12.7" fill="#b6565b"/><circle cx="167.2" cy="341.3" r="12.7" class="s"/><circle cx="263.5" cy="240.2" r="12.7" fill="#c2a46f"/><circle cx="263.5" cy="240.2" r="12.7" class="s"/><circle cx="241.9" cy="325.8" r="12.7" fill="#926735"/><circle cx="241.9" cy="325.8" r="12.7" class="s"/><circle cx="377.9" cy="209.7" r="12.7" fill="#98b663"/><circle cx="377.9" cy="209.7" r="12.7" class="s"/><circle cx="272.1" cy="296.9" r="12.7" fill="#ac8d5c"/><circle cx="272.1" cy="296.9" r="12.7" class="s"/><circle cx="86.0" cy="320.2" r="12.7" fill="#e048a1"/><circle cx="86.0" cy="320.2" r="12.7" class="s"/><circle cx="154.4" cy="361.1" r="12.7" fill="#b34057"/><circle cx="154.4" cy="361.1" r="12.7" class="s"/><circle cx="300.2" cy="260.2" r="12.7" fill="#a09452"/><circle cx="300.2" cy="260.2" r="12.7" class="s"/><circle cx="262.5" cy="317.2" r="12.7" fill="#9c7944"/><circle cx="262.5" cy="317.2" r="12.7" class="s"/><circle cx="289.0" cy="202.6" r="12.7" fill="#c4b474"/><circle cx="289.0" cy="202.6" r="12.7" class="s"/><circle cx="154.5" cy="330.2" r="12.7" fill="#cd646c"/><circle cx="154.5" cy="330.2" r="12.7" class="s"/><circle cx="302.7" cy="182.6" r="12.7" fill="#c4bd77"/><circle cx="302.7" cy="182.6" r="12.7" class="s"/><circle cx="393.0" cy="189.4" r="12.7" fill="#98bd66"/><circle cx="393.0" cy="189.4" r="12.7" class="s"/><circle cx="219.0" cy="377.5" r="12.7" fill="#a65e48"/><circle cx="219.0" cy="377.5" r="12.7" class="s"/><circle cx="87.0" cy="320.9" r="12.7" fill="#df489f"/><circle cx="87.0" cy="320.9" r="12.7" class="s"/><circle cx="317.0" cy="161.8" r="12.7" fill="#c5c579"/><circle cx="317.0" cy="161.8" r="12.7" class="s"/><circle cx="331.8" cy="140.3" r="12.7" fill="#c5ce7c"/><circle cx="331.8" cy="140.3" r="12.7" class="s"/><circle cx="408.8" cy="168.4" r="12.7" fill="#97c568"/><circle cx="408.8" cy="168.4" r="12.7" class="s"/><circle cx="295.6" cy="263.3" r="12.7" fill="#ad9d61"/><circle cx="295.6" cy="263.3" r="12.7" class="s"/><circle cx="88.0" cy="321.5" r="12.7" fill="#df489c"/><circle cx="88.0" cy="321.5" r="12.7" class="s"/><circle cx="138.5" cy="355.2" r="12.7" fill="#c94966"/><circle cx="138.5" cy="355.2" r="12.7" class="s"/><circle cx="347.3" cy="118.1" r="12.7" fill="#c5d67f"/><circle cx="347.3" cy="118.1" r="12.7" class="s"/><circle cx="131.4" cy="366.3" r="12.7" fill="#c73463"/><circle cx="131.4" cy="366.3" r="12.7" class="s"/><circle cx="140.2" cy="267.6" r="12.7" fill="#e48387"/><circle cx="140.2" cy="267.6" r="12.7" class="s"/><circle cx="82.2" cy="325.5" r="12.7" fill="#df3ea1"/><circle cx="82.2" cy="325.5" r="12.7" class="s"/><circle cx="157.0" cy="362.9" r="12.7" fill="#b2404b"/><circle cx="157.0" cy="362.9" r="12.7" class="s"/><circle cx="165.5" cy="394.7" r="12.8" fill="#b33749"/><circle cx="165.5" cy="394.7" r="12.8" class="s"/><circle cx="89.5" cy="322.5" r="12.8" fill="#df4999"/><circle cx="89.5" cy="322.5" r="12.8" class="s"/><circle cx="113.2" cy="302.0" r="12.8" fill="#e1678b"/><circle cx="113.2" cy="302.0" r="12.8" class="s"/><circle cx="243.2" cy="342.1" r="12.8" fill="#a9754d"/><circle cx="243.2" cy="342.1" r="12.8" class="s"/><circle cx="321.8" cy="226.5" r="12.8" fill="#aead65"/><circle cx="321.8" cy="226.5" r="12.8" class="s"/><circle cx="269.6" cy="282.1" r="12.8" fill="#967d3f"/><circle cx="269.6" cy="282.1" r="12.8" class="s"/><circle cx="153.6" cy="373.5" r="12.8" fill="#ae3139"/><circle cx="153.6" cy="373.5" r="12.8" class="s"/><circle cx="172.9" cy="383.3" r="12.8" fill="#b5494c"/><circle cx="172.9" cy="383.3" r="12.8" class="s"/><circle cx="170.0" cy="343.2" r="12.8" fill="#b5564e"/><circle cx="170.0" cy="343.2" r="12.8" class="s"/><circle cx="335.9" cy="207.0" r="12.8" fill="#aeb568"/><circle cx="335.9" cy="207.0" r="12.8" class="s"/><circle cx="158.7" cy="364.2" r="12.8" fill="#b14141"/><circle cx="158.7" cy="364.2" r="12.8" class="s"/><circle cx="91.8" cy="324.1" r="12.8" fill="#df4993"/><circle cx="91.8" cy="324.1" r="12.8" class="s"/><circle cx="159.4" cy="364.7" r="12.8" fill="#b0413a"/><circle cx="159.4" cy="364.7" r="12.8" class="s"/><circle cx="350.6" cy="186.7" r="12.8" fill="#afbd6a"/><circle cx="350.6" cy="186.7" r="12.8" class="s"/><circle cx="347.4" cy="194.3" r="12.8" fill="#a1af59"/><circle cx="347.4" cy="194.3" r="12.8" class="s"/><circle cx="166.0" cy="396.7" r="12.8" fill="#b23742"/><circle cx="166.0" cy="396.7" r="12.8" class="s"/><circle cx="189.6" cy="357.9" r="12.8" fill="#b96150"/><circle cx="189.6" cy="357.9" r="12.8" class="s"/><circle cx="188.5" cy="315.0" r="12.8" fill="#b96c52"/><circle cx="188.5" cy="315.0" r="12.8" class="s"/><circle cx="302.2" cy="260.4" r="12.8" fill="#9f9449"/><circle cx="302.2" cy="260.4" r="12.8" class="s"/><circle cx="365.9" cy="165.8" r="12.8" fill="#afc56d"/><circle cx="365.9" cy="165.8" r="12.8" class="s"/><circle cx="274.0" cy="297.7" r="12.8" fill="#ab8d53"/><circle cx="274.0" cy="297.7" r="12.8" class="s"/><circle cx="80.0" cy="332.0" r="12.8" fill="#dd2e9d"/><circle cx="80.0" cy="332.0" r="12.8" class="s"/><circle cx="173.4" cy="385.2" r="12.8" fill="#b44944"/><circle cx="173.4" cy="385.2" r="12.8" class="s"/><circle cx="94.0" cy="325.7" r="12.8" fill="#de498e"/><circle cx="94.0" cy="325.7" r="12.8" class="s"/><circle cx="279.1" cy="56.0" r="12.8" fill="#f1e892"/><circle cx="279.1" cy="56.0" r="12.8" class="s"/><circle cx="81.3" cy="332.9" r="12.8" fill="#dd2e9a"/><circle cx="81.3" cy="332.9" r="12.8" class="s"/><circle cx="171.8" cy="344.5" r="12.9" fill="#b45643"/><circle cx="171.8" cy="344.5" r="12.9" class="s"/><circle cx="381.9" cy="144.2" r="12.9" fill="#aecd6f"/><circle cx="381.9" cy="144.2" r="12.9" class="s"/><circle cx="270.5" cy="282.7" r="12.9" fill="#967d37"/><circle cx="270.5" cy="282.7" r="12.9" class="s"/><circle cx="270.3" cy="70.7" r="12.9" fill="#f0e390"/><circle cx="270.3" cy="70.7" r="12.9" class="s"/><circle cx="82.1" cy="333.5" r="12.9" fill="#dd2e98"/><circle cx="82.1" cy="333.5" r="12.9" class="s"/><circle cx="133.8" cy="370.8" r="12.9" fill="#c53555"/><circle cx="133.8" cy="370.8" r="12.9" class="s"/><circle cx="82.9" cy="334.1" r="12.9" fill="#dd2f96"/><circle cx="82.9" cy="334.1" r="12.9" class="s"/><circle cx="258.7" cy="89.9" r="12.9" fill="#efdb8e"/><circle cx="258.7" cy="89.9" r="12.9" class="s"/><circle cx="141.1" cy="359.5" r="12.9" fill="#c84a58"/><circle cx="141.1" cy="359.5" r="12.9" class="s"/><circle cx="213.6" cy="321.7" r="12.9" fill="#bc7a55"/><circle cx="213.6" cy="321.7" r="12.9" class="s"/><circle cx="211.9" cy="279.0" r="12.9" fill="#bd8257"/><circle cx="211.9" cy="279.0" r="12.9" class="s"/><circle cx="298.0" cy="263.7" r="12.9" fill="#ac9d57"/><circle cx="298.0" cy="263.7" r="12.9" class="s"/><circle cx="172.5" cy="345.1" r="12.9" fill="#b4563c"/><circle cx="172.5" cy="345.1" r="12.9" class="s"/><circle cx="250.3" cy="103.9" r="12.9" fill="#efd68c"/><circle cx="250.3" cy="103.9" r="12.9" class="s"/><circle cx="117.5" cy="304.9" r="12.9" fill="#e0677f"/><circle cx="117.5" cy="304.9" r="12.9" class="s"/><circle cx="84.1" cy="335.0" r="12.9" fill="#dc2f93"/><circle cx="84.1" cy="335.0" r="12.9" class="s"/><circle cx="190.3" cy="359.5" r="12.9" fill="#b86147"/><circle cx="190.3" cy="359.5" r="12.9" class="s"/><circle cx="157.6" cy="334.1" r="12.9" fill="#cc645d"/><circle cx="157.6" cy="334.1" r="12.9" class="s"/><circle cx="236.6" cy="126.4" r="12.9" fill="#eecd89"/><circle cx="236.6" cy="126.4" r="12.9" class="s"/><circle cx="86.0" cy="336.3" r="12.9" fill="#dc2f8d"/><circle cx="86.0" cy="336.3" r="12.9" class="s"/><circle cx="98.1" cy="328.4" r="12.9" fill="#dd4983"/><circle cx="98.1" cy="328.4" r="12.9" class="s"/><circle cx="303.3" cy="230.5" r="12.9" fill="#999442"/><circle cx="303.3" cy="230.5" r="12.9" class="s"/><circle cx="181.3" cy="297.8" r="12.9" fill="#d07e63"/><circle cx="181.3" cy="297.8" r="12.9" class="s"/><circle cx="324.8" cy="226.6" r="12.9" fill="#adad5b"/><circle cx="324.8" cy="226.6" r="12.9" class="s"/><circle cx="210.7" cy="168.6" r="12.9" fill="#ebba84"/><circle cx="210.7" cy="168.6" r="12.9" class="s"/><circle cx="87.9" cy="337.7" r="12.9" fill="#db3088"/><circle cx="87.9" cy="337.7" r="12.9" class="s"/><circle cx="190.4" cy="316.3" r="12.9" fill="#b86c46"/><circle cx="190.4" cy="316.3" r="12.9" class="s"/><circle cx="135.3" cy="374.2" r="13.0" fill="#c4364a"/><circle cx="135.3" cy="374.2" r="13.0" class="s"/><circle cx="244.3" cy="276.3" r="13.0" fill="#bf935a"/><circle cx="244.3" cy="276.3" r="13.0" class="s"/><circle cx="339.1" cy="206.9" r="13.0" fill="#aeb55d"/><circle cx="339.1" cy="206.9" r="13.0" class="s"/><circle cx="249.6" cy="220.3" r="13.0" fill="#c1a05d"/><circle cx="249.6" cy="220.3" r="13.0" class="s"/><circle cx="142.7" cy="362.7" r="13.0" fill="#c64a4c"/><circle cx="142.7" cy="362.7" r="13.0" class="s"/><circle cx="214.7" cy="322.9" r="13.0" fill="#bb7a4b"/><circle cx="214.7" cy="322.9" r="13.0" class="s"/><circle cx="211.3" cy="252.0" r="13.0" fill="#d39869"/><circle cx="211.3" cy="252.0" r="13.0" class="s"/><circle cx="350.4" cy="194.2" r="13.0" fill="#a1af4e"/><circle cx="350.4" cy="194.2" r="13.0" class="s"/><circle cx="175.8" cy="224.7" r="13.0" fill="#e79f7c"/><circle cx="175.8" cy="224.7" r="13.0" class="s"/><circle cx="101.6" cy="330.9" r="13.0" fill="#dc4a78"/><circle cx="101.6" cy="330.9" r="13.0" class="s"/><circle cx="135.9" cy="375.8" r="13.0" fill="#c33742"/><circle cx="135.9" cy="375.8" r="13.0" class="s"/><circle cx="91.4" cy="340.2" r="13.0" fill="#da317e"/><circle cx="91.4" cy="340.2" r="13.0" class="s"/><circle cx="191.2" cy="316.9" r="13.0" fill="#b76c3d"/><circle cx="191.2" cy="316.9" r="13.0" class="s"/><circle cx="354.2" cy="186.5" r="13.0" fill="#aebd5f"/><circle cx="354.2" cy="186.5" r="13.0" class="s"/><circle cx="268.2" cy="241.5" r="13.0" fill="#c1a35e"/><circle cx="268.2" cy="241.5" r="13.0" class="s"/><circle cx="234.6" cy="216.6" r="13.0" fill="#d6aa6d"/><circle cx="234.6" cy="216.6" r="13.0" class="s"/><circle cx="143.4" cy="364.2" r="13.0" fill="#c54a44"/><circle cx="143.4" cy="364.2" r="13.0" class="s"/><circle cx="146.2" cy="271.5" r="13.0" fill="#e38374"/><circle cx="146.2" cy="271.5" r="13.0" class="s"/><circle cx="94.5" cy="342.4" r="13.0" fill="#d93273"/><circle cx="94.5" cy="342.4" r="13.0" class="s"/><circle cx="369.9" cy="165.4" r="13.0" fill="#aec561"/><circle cx="369.9" cy="165.4" r="13.0" class="s"/><circle cx="159.6" cy="336.9" r="13.0" fill="#ca6450"/><circle cx="159.6" cy="336.9" r="13.0" class="s"/><circle cx="260.3" cy="177.7" r="13.1" fill="#d8bc72"/><circle cx="260.3" cy="177.7" r="13.1" class="s"/><circle cx="122.6" cy="308.3" r="13.1" fill="#df676e"/><circle cx="122.6" cy="308.3" r="13.1" class="s"/><circle cx="214.0" cy="280.5" r="13.1" fill="#bc8248"/><circle cx="214.0" cy="280.5" r="13.1" class="s"/><circle cx="304.6" cy="231.2" r="13.1" fill="#999439"/><circle cx="304.6" cy="231.2" r="13.1" class="s"/><circle cx="386.2" cy="143.7" r="13.1" fill="#aecd63"/><circle cx="386.2" cy="143.7" r="13.1" class="s"/><circle cx="274.0" cy="156.9" r="13.1" fill="#d8c474"/><circle cx="274.0" cy="156.9" r="13.1" class="s"/><circle cx="106.0" cy="334.0" r="13.1" fill="#db4a68"/><circle cx="106.0" cy="334.0" r="13.1" class="s"/><circle cx="294.8" cy="203.3" r="13.1" fill="#c2b462"/><circle cx="294.8" cy="203.3" r="13.1" class="s"/><circle cx="245.9" cy="277.1" r="13.1" fill="#be9250"/><circle cx="245.9" cy="277.1" r="13.1" class="s"/><circle cx="98.6" cy="345.4" r="13.1" fill="#d83365"/><circle cx="98.6" cy="345.4" r="13.1" class="s"/><circle cx="288.4" cy="135.3" r="13.1" fill="#d9cd76"/><circle cx="288.4" cy="135.3" r="13.1" class="s"/><circle cx="160.3" cy="338.2" r="13.1" fill="#c96447"/><circle cx="160.3" cy="338.2" r="13.1" class="s"/><circle cx="281.8" cy="57.6" r="13.1" fill="#f0e889"/><circle cx="281.8" cy="57.6" r="13.1" class="s"/><circle cx="309.1" cy="183.1" r="13.1" fill="#c3bc64"/><circle cx="309.1" cy="183.1" r="13.1" class="s"/><circle cx="303.3" cy="112.9" r="13.1" fill="#dad679"/><circle cx="303.3" cy="112.9" r="13.1" class="s"/><circle cx="183.8" cy="300.1" r="13.1" fill="#ce7e54"/><circle cx="183.8" cy="300.1" r="13.1" class="s"/><circle cx="101.8" cy="347.7" r="13.1" fill="#d63457"/><circle cx="101.8" cy="347.7" r="13.1" class="s"/><circle cx="214.9" cy="281.1" r="13.1" fill="#bb823f"/><circle cx="214.9" cy="281.1" r="13.1" class="s"/><circle cx="318.7" cy="89.8" r="13.1" fill="#dbdf7b"/><circle cx="318.7" cy="89.8" r="13.1" class="s"/><circle cx="109.3" cy="336.3" r="13.2" fill="#d94b5a"/><circle cx="109.3" cy="336.3" r="13.2" class="s"/><circle cx="324.0" cy="162.1" r="13.2" fill="#c4c566"/><circle cx="324.0" cy="162.1" r="13.2" class="s"/><circle cx="104.0" cy="349.3" r="13.2" fill="#d5354b"/><circle cx="104.0" cy="349.3" r="13.2" class="s"/><circle cx="270.2" cy="242.0" r="13.2" fill="#c0a353"/><circle cx="270.2" cy="242.0" r="13.2" class="s"/><circle cx="105.0" cy="350.0" r="13.2" fill="#d43643"/><circle cx="105.0" cy="350.0" r="13.2" class="s"/><circle cx="126.1" cy="310.8" r="13.2" fill="#dd675e"/><circle cx="126.1" cy="310.8" r="13.2" class="s"/><circle cx="339.6" cy="140.4" r="13.2" fill="#c4cd68"/><circle cx="339.6" cy="140.4" r="13.2" class="s"/><circle cx="111.5" cy="338.0" r="13.2" fill="#d84b4d"/><circle cx="111.5" cy="338.0" r="13.2" class="s"/><circle cx="184.8" cy="301.2" r="13.2" fill="#cd7e4a"/><circle cx="184.8" cy="301.2" r="13.2" class="s"/><circle cx="112.5" cy="338.7" r="13.2" fill="#d74c44"/><circle cx="112.5" cy="338.7" r="13.2" class="s"/><circle cx="355.9" cy="118.0" r="13.2" fill="#c4d66a"/><circle cx="355.9" cy="118.0" r="13.2" class="s"/><circle cx="214.6" cy="253.8" r="13.3" fill="#d29858"/><circle cx="214.6" cy="253.8" r="13.3" class="s"/><circle cx="150.2" cy="274.2" r="13.3" fill="#e28362"/><circle cx="150.2" cy="274.2" r="13.3" class="s"/><circle cx="252.4" cy="222.1" r="13.3" fill="#c09f4c"/><circle cx="252.4" cy="222.1" r="13.3" class="s"/><circle cx="297.3" cy="203.6" r="13.3" fill="#c2b456"/><circle cx="297.3" cy="203.6" r="13.3" class="s"/><circle cx="128.4" cy="312.5" r="13.3" fill="#dc674f"/><circle cx="128.4" cy="312.5" r="13.3" class="s"/><circle cx="311.9" cy="183.2" r="13.3" fill="#c2bc58"/><circle cx="311.9" cy="183.2" r="13.3" class="s"/><circle cx="180.4" cy="227.7" r="13.3" fill="#e69e68"/><circle cx="180.4" cy="227.7" r="13.3" class="s"/><circle cx="129.4" cy="313.2" r="13.3" fill="#db6746"/><circle cx="129.4" cy="313.2" r="13.3" class="s"/><circle cx="238.5" cy="218.2" r="13.3" fill="#d4aa5b"/><circle cx="238.5" cy="218.2" r="13.3" class="s"/><circle cx="327.2" cy="162.1" r="13.4" fill="#c3c459"/><circle cx="327.2" cy="162.1" r="13.4" class="s"/><circle cx="215.9" cy="254.6" r="13.4" fill="#d1984d"/><circle cx="215.9" cy="254.6" r="13.4" class="s"/><circle cx="253.5" cy="222.8" r="13.4" fill="#bf9f40"/><circle cx="253.5" cy="222.8" r="13.4" class="s"/><circle cx="343.2" cy="140.4" r="13.4" fill="#c3cd5b"/><circle cx="343.2" cy="140.4" r="13.4" class="s"/><circle cx="152.6" cy="275.9" r="13.4" fill="#e08252"/><circle cx="152.6" cy="275.9" r="13.4" class="s"/><circle cx="216.1" cy="172.1" r="13.4" fill="#eaba6d"/><circle cx="216.1" cy="172.1" r="13.4" class="s"/><circle cx="265.1" cy="179.0" r="13.4" fill="#d6bb5e"/><circle cx="265.1" cy="179.0" r="13.4" class="s"/><circle cx="359.8" cy="117.9" r="13.5" fill="#c3d55c"/><circle cx="359.8" cy="117.9" r="13.5" class="s"/><circle cx="240.2" cy="218.8" r="13.5" fill="#d4a94f"/><circle cx="240.2" cy="218.8" r="13.5" class="s"/><circle cx="153.6" cy="276.7" r="13.5" fill="#e08247"/><circle cx="153.6" cy="276.7" r="13.5" class="s"/><circle cx="242.8" cy="130.2" r="13.5" fill="#edcc71"/><circle cx="242.8" cy="130.2" r="13.5" class="s"/><circle cx="279.4" cy="158.2" r="13.5" fill="#d7c460"/><circle cx="279.4" cy="158.2" r="13.5" class="s"/><circle cx="256.8" cy="107.9" r="13.5" fill="#eed573"/><circle cx="256.8" cy="107.9" r="13.5" class="s"/><circle cx="265.5" cy="94.0" r="13.6" fill="#eedb74"/><circle cx="265.5" cy="94.0" r="13.6" class="s"/><circle cx="294.3" cy="136.6" r="13.6" fill="#d8cd61"/><circle cx="294.3" cy="136.6" r="13.6" class="s"/><circle cx="183.2" cy="229.6" r="13.6" fill="#e59e55"/><circle cx="183.2" cy="229.6" r="13.6" class="s"/><circle cx="277.4" cy="75.1" r="13.6" fill="#efe276"/><circle cx="277.4" cy="75.1" r="13.6" class="s"/><circle cx="286.5" cy="60.5" r="13.6" fill="#f0e777"/><circle cx="286.5" cy="60.5" r="13.6" class="s"/><circle cx="309.8" cy="114.2" r="13.6" fill="#d9d563"/><circle cx="309.8" cy="114.2" r="13.6" class="s"/><circle cx="267.2" cy="179.6" r="13.6" fill="#d6bb51"/><circle cx="267.2" cy="179.6" r="13.6" class="s"/><circle cx="325.9" cy="91.0" r="13.7" fill="#dade65"/><circle cx="325.9" cy="91.0" r="13.7" class="s"/><circle cx="299.6" cy="153.4" r="13.7" fill="#c3bd42"/><circle cx="299.6" cy="153.4" r="13.7" class="s"/><circle cx="184.3" cy="230.4" r="13.7" fill="#e49e49"/><circle cx="184.3" cy="230.4" r="13.7" class="s"/><circle cx="281.7" cy="158.7" r="13.7" fill="#d7c352"/><circle cx="281.7" cy="158.7" r="13.7" class="s"/><circle cx="296.9" cy="137.1" r="13.8" fill="#d7cc53"/><circle cx="296.9" cy="137.1" r="13.8" class="s"/><circle cx="219.5" cy="174.3" r="13.8" fill="#e9b959"/><circle cx="219.5" cy="174.3" r="13.8" class="s"/><circle cx="312.7" cy="114.6" r="13.9" fill="#d8d554"/><circle cx="312.7" cy="114.6" r="13.9" class="s"/><circle cx="246.7" cy="132.7" r="13.9" fill="#eccb5b"/><circle cx="246.7" cy="132.7" r="13.9" class="s"/><circle cx="329.2" cy="91.5" r="14.0" fill="#d9de55"/><circle cx="329.2" cy="91.5" r="14.0" class="s"/><circle cx="220.9" cy="175.2" r="14.0" fill="#e8b94a"/><circle cx="220.9" cy="175.2" r="14.0" class="s"/><circle cx="261.2" cy="110.6" r="14.0" fill="#edd45c"/><circle cx="261.2" cy="110.6" r="14.0" class="s"/><circle cx="290.2" cy="62.7" r="14.0" fill="#efe766"/><circle cx="290.2" cy="62.7" r="14.0" class="s"/><circle cx="270.1" cy="96.9" r="14.1" fill="#edda5d"/><circle cx="270.1" cy="96.9" r="14.1" class="s"/><circle cx="248.4" cy="133.8" r="14.2" fill="#ebcb4b"/><circle cx="248.4" cy="133.8" r="14.2" class="s"/><circle cx="282.3" cy="78.1" r="14.2" fill="#eee15d"/><circle cx="282.3" cy="78.1" r="14.2" class="s"/><circle cx="291.7" cy="63.6" r="14.2" fill="#efe75e"/><circle cx="291.7" cy="63.6" r="14.2" class="s"/><circle cx="263.0" cy="111.7" r="14.3" fill="#ecd44b"/><circle cx="263.0" cy="111.7" r="14.3" class="s"/><circle cx="272.1" cy="98.1" r="14.3" fill="#edda4b"/><circle cx="272.1" cy="98.1" r="14.3" class="s"/><circle cx="292.8" cy="64.3" r="14.4" fill="#eee657"/><circle cx="292.8" cy="64.3" r="14.4" class="s"/><circle cx="284.5" cy="79.4" r="14.4" fill="#ede14c"/><circle cx="284.5" cy="79.4" r="14.4" class="s"/><circle cx="294.0" cy="65.0" r="14.5" fill="#eee64c"/><circle cx="294.0" cy="65.0" r="14.5" class="s"/><g stroke="#f0f0f0" stroke-width="1" shape-rendering="crispEdges"><line x1="252.0" y1="0.0" x2="337.6" y2="467.8"/><line x1="1.0" y1="413.0" x2="571.0" y2="301.0"/><line x1="296.5" y1="308.6" x2="316.5" y2="350.0"/></g></svg></div>
<div class="t" style="left:956px;top:244px;font-size:12px;color:#000;">Zoom</div>
<div class="r" style="left:983px;top:284px;width:21px;height:509px;border:1px dotted #000;border-right:none;box-sizing:border-box"></div>
<div class="r" style="left:991px;top:292px;width:4px;height:493px;background:#e7eaea;border:1px solid #d6d6d6;box-sizing:border-box"></div>
<div class="t" style="left:963px;top:532px;font-size:12px;color:#000;">46</div>
<svg class="r" style="left:985px;top:552px" width="19" height="11"><path d="M0 0 H13.5 L18.5 5.5 L13.5 11 H0 Z" fill="#0078d7"/></svg>
<div class="t" style="left:25px;top:840px;font-size:12px;color:#000;">Point Size</div>
<div class="t" style="left:505px;top:829px;font-size:12px;color:#000;">20</div>
<div class="r" style="left:98px;top:851px;width:826px;height:4px;background:#e7eaea;border:1px solid #d6d6d6;box-sizing:border-box"></div>
<svg class="r" style="left:254px;top:845px" width="11" height="20"><path d="M0 0 H11 V13.5 L5.5 19 L0 13.5 Z" fill="#0078d7"/></svg>
<div class="r" style="left:0px;top:907px;width:1013px;height:892px;background:#0078d7"></div>
<div class="r" style="left:1px;top:938px;width:1011px;height:860px;background:#f0f0f0"></div>
<div class="r" style="left:0px;top:907px;width:1013px;height:1px;background:#2a88d8"></div>
<svg class="r" style="left:6px;top:911px" width="22" height="22" viewBox="0 0 22 22"><g fill="none" stroke-width="1.1"><path d="M9.18 3.95 A7.4 7.4 0 0 1 13.02 3.95" stroke="#205a80"/><path d="M13.02 3.95 A7.4 7.4 0 0 1 16.33 5.87" stroke="#8a2a9a"/><path d="M16.33 5.87 A7.4 7.4 0 0 1 18.25 9.18" stroke="#d02a80"/><path d="M18.25 9.18 A7.4 7.4 0 0 1 18.25 13.02" stroke="#e84070"/><path d="M18.25 13.02 A7.4 7.4 0 0 1 16.33 16.33" stroke="#f0c030"/><path d="M16.33 16.33 A7.4 7.4 0 0 1 13.02 18.25" stroke="#80c030"/><path d="M13.02 18.25 A7.4 7.4 0 0 1 9.18 18.25" stroke="#30a040"/><path d="M9.18 18.25 A7.4 7.4 0 0 1 5.87 16.33" stroke="#f0d030"/><path d="M5.87 16.33 A7.4 7.4 0 0 1 3.95 13.02" stroke="#e05030"/><path d="M3.95 13.02 A7.4 7.4 0 0 1 3.95 9.18" stroke="#c02090"/><path d="M3.95 9.18 A7.4 7.4 0 0 1 5.87 5.87" stroke="#7030a0"/><path d="M5.87 5.87 A7.4 7.4 0 0 1 9.18 3.95" stroke="#30a0b0"/></g><path d="M10.5 3.8 L11.2 9 L12.8 12 L13.6 15.5 M5.6 6.6 L8 7.6 L11.2 9 M6 12 L9.2 11.5 L11.5 10.5 M7.5 15 L9.5 13 L12 11.5 M13 9.5 L15.2 9 M14.5 12 L16 13" stroke="#0a2040" stroke-width="1.1" fill="none"/><ellipse cx="13.5" cy="15.3" rx="1.5" ry="1.1" transform="rotate(40 13.5 15.3)" fill="#fff"/><circle cx="9" cy="8.5" r="0.7" fill="#cfe0f0"/></svg>
<div class="t" style="left:31px;top:916px;font-size:12px;color:#fff;">Betrachten</div>
<div class="r" style="left:893px;top:922px;width:10px;height:1px;background:#fff"></div>
<div class="r" style="left:938px;top:917px;width:10px;height:10px;border:1px solid #fff;box-sizing:border-box"></div>
<svg class="r" style="left:983px;top:916px" width="12" height="12"><path d="M1 1 L11 11 M11 1 L1 11" stroke="#fff" stroke-width="1.1"/></svg>
<div class="r" style="left:11px;top:943px;width:957px;height:24px;background:#e1e1e1;border:1px solid #adadad;box-sizing:border-box"></div>
<div class="t" style="left:16px;top:948px;font-size:12px;color:#000;transform:scaleX(0.954);transform-origin:0 0">"HP_Latex315_PVC_Banner_20190822.CIE-RemovedRedundancies-Corrected-Smoothed.txt" Remission</div>
<svg class="r" style="left:954px;top:952px" width="10" height="7"><path d="M0.5 0.5 L5 5 L9.5 0.5" fill="none" stroke="#333" stroke-width="1.1"/></svg>
<svg class="r" style="left:979px;top:944px" width="22" height="22" viewBox="0 0 22 22"><defs><linearGradient id="hg907" x1="0.3" y1="0.1" x2="0.55" y2="0.75"><stop offset="0" stop-color="#3f6b92"/><stop offset="0.5" stop-color="#2a537c"/><stop offset="0.53" stop-color="#0c2c5a"/><stop offset="1" stop-color="#0a2650"/></linearGradient></defs><circle cx="11" cy="11.3" r="9.8" fill="#000" opacity="0.12"/><circle cx="11" cy="11.1" r="9.2" fill="url(#hg907)" stroke="#4a3a30" stroke-opacity="0.45" stroke-width="0.6"/><path d="M7.6 8.6 C8.2 5.6 14 5.2 14.6 8 C15.2 10.6 11.2 11.6 11.1 14.6" fill="none" stroke="#fff" stroke-width="2.1"/><rect x="9.9" y="15.7" width="2.4" height="2.3" fill="#fff"/></svg>
<div class="r" style="left:11px;top:982px;width:13px;height:13px;background:#fff;border:1px solid #333;box-sizing:border-box"></div>
<div class="t" style="left:27px;top:981px;font-size:12px;color:#000;">Vergleiche mit ICC-Profil:</div>
<div class="r" style="left:177px;top:977px;width:791px;height:23px;background:#fff;border:1px solid #7a7a7a;box-sizing:border-box"></div>
<div class="r" style="left:182px;top:981px;width:767px;height:15px;background:#f0f0f0"></div>
<svg class="r" style="left:954px;top:986px" width="10" height="7"><path d="M0.5 0.5 L5 5 L9.5 0.5" fill="none" stroke="#9a9a9a" stroke-width="1.1"/></svg>
<div class="r" style="left:6px;top:1032px;width:999px;height:760px;border:1px solid #d9d9d9;box-sizing:border-box;background:#fff"></div>
<div class="r" style="left:10px;top:1035px;width:993px;height:754px;background:#f0f0f0"></div>
<div class="r" style="left:8px;top:1012px;width:47px;height:21px;background:#f0f0f0;border:1px solid #d9d9d9;border-bottom:none;box-sizing:border-box"></div>
<div class="t" style="left:14px;top:1016px;font-size:12px;color:#000;">2D</div>
<div class="r" style="left:105px;top:1012px;width:47px;height:21px;background:#f0f0f0;border:1px solid #d9d9d9;border-bottom:none;box-sizing:border-box"></div>
<div class="t" style="left:111px;top:1016px;font-size:12px;color:#000;">TWZ</div>
<div class="r" style="left:151px;top:1012px;width:78px;height:21px;background:#f0f0f0;border:1px solid #d9d9d9;border-bottom:none;box-sizing:border-box"></div>
<div class="t" style="left:158px;top:1016px;font-size:12px;color:#000;">Spinnennetz</div>
<div class="r" style="left:228px;top:1012px;width:48px;height:21px;background:#f0f0f0;border:1px solid #d9d9d9;border-bottom:none;box-sizing:border-box"></div>
<div class="t" style="left:235px;top:1016px;font-size:12px;color:#000;">Kurven</div>
<div class="r" style="left:54px;top:1010px;width:52px;height:24px;background:#fff;border:1px solid #d9d9d9;border-bottom:none;box-sizing:border-box"></div>
<div class="t" style="left:62px;top:1014px;font-size:12px;color:#000;">3D</div>
<div class="r" style="left:10px;top:1041px;width:993px;height:57px;border:1px solid #dcdcdc;box-sizing:border-box"></div>
<div class="r" style="left:17px;top:1037px;width:100px;height:8px;background:#f0f0f0"></div>
<div class="t" style="left:19px;top:1035px;font-size:12px;color:#000;">Ansichtsoptionen</div>
<div class="r" style="left:77px;top:1055px;width:13px;height:13px;background:#fff;border:1px solid #333;box-sizing:border-box"></div>
<div class="t" style="left:93px;top:1055px;font-size:12px;color:#000;">Weiß</div>
<div class="r" style="left:136px;top:1055px;width:13px;height:13px;background:#fff;border:1px solid #333;box-sizing:border-box"></div>
<div class="t" style="left:152px;top:1055px;font-size:12px;color:#000;">Schwarz</div>
<div class="r" style="left:211px;top:1055px;width:13px;height:13px;background:#fff;border:1px solid #333;box-sizing:border-box"></div>
<div class="t" style="left:227px;top:1055px;font-size:12px;color:#000;">Volltöne</div>
<div class="r" style="left:287px;top:1055px;width:13px;height:13px;background:#fff;border:1px solid #333;box-sizing:border-box"></div>
<div class="t" style="left:303px;top:1055px;font-size:12px;color:#000;">Primärfarben</div>
<div class="r" style="left:388px;top:1055px;width:13px;height:13px;background:#fff;border:1px solid #333;box-sizing:border-box"></div>
<div class="t" style="left:404px;top:1055px;font-size:12px;color:#000;">Sekundärfarben</div>
<div class="r" style="left:503px;top:1055px;width:13px;height:13px;background:#fff;border:1px solid #333;box-sizing:border-box"></div>
<div class="t" style="left:519px;top:1055px;font-size:12px;color:#000;">2C</div>
<div class="r" style="left:549px;top:1055px;width:13px;height:13px;background:#fff;border:1px solid #333;box-sizing:border-box"></div>
<div class="t" style="left:565px;top:1055px;font-size:12px;color:#000;">3C</div>
<div class="r" style="left:595px;top:1055px;width:13px;height:13px;background:#fff;border:1px solid #333;box-sizing:border-box"></div>
<div class="t" style="left:611px;top:1055px;font-size:12px;color:#000;">4C</div>
<div class="r" style="left:641px;top:1055px;width:13px;height:13px;background:#fff;border:1px solid #333;box-sizing:border-box"></div>
<div class="t" style="left:657px;top:1055px;font-size:12px;color:#000;">5C</div>
<div class="r" style="left:687px;top:1055px;width:13px;height:13px;background:#fff;border:1px solid #333;box-sizing:border-box"></div>
<div class="t" style="left:703px;top:1055px;font-size:12px;color:#000;">6C</div>
<div class="r" style="left:733px;top:1055px;width:13px;height:13px;background:#fff;border:1px solid #333;box-sizing:border-box"></div>
<div class="t" style="left:749px;top:1055px;font-size:12px;color:#000;">1C+K</div>
<div class="r" style="left:794px;top:1055px;width:13px;height:13px;background:#fff;border:1px solid #333;box-sizing:border-box"></div>
<div class="t" style="left:810px;top:1055px;font-size:12px;color:#000;">2C+K</div>
<div class="r" style="left:855px;top:1055px;width:13px;height:13px;background:#fff;border:1px solid #333;box-sizing:border-box"></div>
<div class="t" style="left:871px;top:1055px;font-size:12px;color:#000;">Grenzwerte</div>
<div class="r" style="left:379px;top:1075px;width:13px;height:13px;background:#fff;border:1px solid #333;box-sizing:border-box"></div><svg class="r" style="left:379px;top:1075px" width="13" height="13"><path d="M2.5 6.5 L5 9 L10.5 3.5" fill="none" stroke="#333" stroke-width="1.1"/></svg>
<div class="t" style="left:395px;top:1075px;font-size:12px;color:#000;">Cyan</div>
<div class="r" style="left:438px;top:1075px;width:13px;height:13px;background:#fff;border:1px solid #333;box-sizing:border-box"></div><svg class="r" style="left:438px;top:1075px" width="13" height="13"><path d="M2.5 6.5 L5 9 L10.5 3.5" fill="none" stroke="#333" stroke-width="1.1"/></svg>
<div class="t" style="left:454px;top:1075px;font-size:12px;color:#000;">Magenta</div>
<div class="r" style="left:517px;top:1075px;width:13px;height:13px;background:#fff;border:1px solid #333;box-sizing:border-box"></div><svg class="r" style="left:517px;top:1075px" width="13" height="13"><path d="M2.5 6.5 L5 9 L10.5 3.5" fill="none" stroke="#333" stroke-width="1.1"/></svg>
<div class="t" style="left:533px;top:1075px;font-size:12px;color:#000;">Yellow</div>
<div class="r" style="left:584px;top:1075px;width:13px;height:13px;background:#fff;border:1px solid #333;box-sizing:border-box"></div><svg class="r" style="left:584px;top:1075px" width="13" height="13"><path d="M2.5 6.5 L5 9 L10.5 3.5" fill="none" stroke="#333" stroke-width="1.1"/></svg>
<div class="t" style="left:600px;top:1075px;font-size:12px;color:#000;">Black</div>
<div class="t" style="left:20px;top:1110px;font-size:12px;color:#000;transform:scaleX(0.96);transform-origin:0 0">1620 Remission Patches</div>
<div class="r" style="left:193px;top:1145px;width:575px;height:575px;background:#fff"></div>
<div class="r" style="left:193px;top:1145px;width:573px;height:573px;background:#a0a0a0"></div>
<div class="r" style="left:194px;top:1146px;width:572px;height:572px;background:#e3e3e3"></div>
<div class="r" style="left:194px;top:1146px;width:571px;height:571px;background:#696969"></div>
<div class="r" style="left:195px;top:1147px;width:571px;height:571px;overflow:hidden"><svg width="571" height="571" viewBox="0 0 571 571" style="display:block"><defs><radialGradient id="sh" cx="0.5" cy="0.45" r="0.55" fx="0.5" fy="0.33"><stop offset="0" stop-color="#fff" stop-opacity="0.6"/><stop offset="0.12" stop-color="#fff" stop-opacity="0.18"/><stop offset="0.38" stop-color="#fff" stop-opacity="0"/><stop offset="0.8" stop-color="#000" stop-opacity="0.05"/><stop offset="0.96" stop-color="#000" stop-opacity="0.2"/><stop offset="1" stop-color="#000" stop-opacity="0.32"/></radialGradient></defs><style>.s{fill:url(#sh);stroke:#000;stroke-opacity:.16;stroke-width:.8}</style><rect width="571" height="571" fill="#c0c0c0"/><g stroke="#f0f0f0" stroke-width="1" shape-rendering="crispEdges"><line x1="0.5" y1="28.8" x2="160.9" y2="0.0"/><line x1="0.5" y1="32.5" x2="180.6" y2="0.0"/><line x1="0.5" y1="38.0" x2="210.2" y2="0.0"/><line x1="218.9" y1="0.0" x2="226.3" y2="35.0"/><line x1="232.4" y1="0.0" x2="238.6" y2="27.6"/><line x1="478.2" y1="0.0" x2="544.1" y2="427.4"/><line x1="538.4" y1="0.0" x2="571.3" y2="227.0"/><line x1="508.3" y1="192.7" x2="571.3" y2="228.5"/><line x1="544.0" y1="427.0" x2="571.0" y2="457.5"/><line x1="16.8" y1="287.2" x2="508.3" y2="192.7"/><line x1="1.0" y1="338.0" x2="571.0" y2="230.0"/><line x1="68.3" y1="523.0" x2="544.0" y2="427.0"/><line x1="280.3" y1="570.4" x2="571.0" y2="512.0"/><line x1="0.5" y1="210.1" x2="68.3" y2="523.0"/><line x1="0.5" y1="369.2" x2="44.6" y2="570.4"/><line x1="16.8" y1="287.2" x2="0.5" y2="327.5"/><line x1="68.3" y1="523.0" x2="61.2" y2="570.4"/><line x1="310.0" y1="475.7" x2="337.6" y2="560.6"/><line x1="319.8" y1="471.7" x2="339.6" y2="570.4"/><line x1="337.6" y1="467.8" x2="355.4" y2="570.4"/></g><circle cx="287.8" cy="120.9" r="9.2" fill="#bad7ec"/><circle cx="287.8" cy="120.9" r="9.2" class="s"/><circle cx="275.0" cy="450.0" r="9.4" fill="#492f7c"/><circle cx="275.0" cy="450.0" r="9.4" class="s"/><circle cx="276.4" cy="240.6" r="9.4" fill="#9daad0"/><circle cx="276.4" cy="240.6" r="9.4" class="s"/><circle cx="326.7" cy="169.4" r="9.4" fill="#99cad8"/><circle cx="326.7" cy="169.4" r="9.4" class="s"/><circle cx="267.2" cy="445.3" r="9.5" fill="#57307e"/><circle cx="267.2" cy="445.3" r="9.5" class="s"/><circle cx="313.3" cy="274.1" r="9.6" fill="#7ea0bf"/><circle cx="313.3" cy="274.1" r="9.6" class="s"/><circle cx="255.9" cy="215.1" r="9.6" fill="#b2b1d4"/><circle cx="255.9" cy="215.1" r="9.6" class="s"/><circle cx="236.0" cy="30.0" r="9.7" fill="#efedf5"/><circle cx="236.0" cy="30.0" r="9.7" class="s"/><circle cx="282.4" cy="451.1" r="9.7" fill="#483074"/><circle cx="282.4" cy="451.1" r="9.7" class="s"/><circle cx="285.0" cy="450.7" r="9.8" fill="#3e2966"/><circle cx="285.0" cy="450.7" r="9.8" class="s"/><circle cx="225.8" cy="44.1" r="9.8" fill="#efe7f2"/><circle cx="225.8" cy="44.1" r="9.8" class="s"/><circle cx="242.8" cy="64.9" r="9.8" fill="#e0dee6"/><circle cx="242.8" cy="64.9" r="9.8" class="s"/><circle cx="230.3" cy="113.1" r="9.8" fill="#dad2e6"/><circle cx="230.3" cy="113.1" r="9.8" class="s"/><circle cx="287.1" cy="242.8" r="9.8" fill="#9daac3"/><circle cx="287.1" cy="242.8" r="9.8" class="s"/><circle cx="238.9" cy="31.8" r="9.8" fill="#efecf0"/><circle cx="238.9" cy="31.8" r="9.8" class="s"/><circle cx="219.3" cy="53.4" r="9.9" fill="#efe3f0"/><circle cx="219.3" cy="53.4" r="9.9" class="s"/><circle cx="232.5" cy="186.6" r="9.9" fill="#c6b8d8"/><circle cx="232.5" cy="186.6" r="9.9" class="s"/><circle cx="238.0" cy="249.7" r="9.9" fill="#b2a0c9"/><circle cx="238.0" cy="249.7" r="9.9" class="s"/><circle cx="236.3" cy="57.7" r="9.9" fill="#e9e4ec"/><circle cx="236.3" cy="57.7" r="9.9" class="s"/><circle cx="240.8" cy="32.9" r="9.9" fill="#f0ecec"/><circle cx="240.8" cy="32.9" r="9.9" class="s"/><circle cx="229.0" cy="46.0" r="9.9" fill="#efe7ed"/><circle cx="229.0" cy="46.0" r="9.9" class="s"/><circle cx="213.0" cy="62.6" r="10.0" fill="#efdfee"/><circle cx="213.0" cy="62.6" r="10.0" class="s"/><circle cx="217.8" cy="134.3" r="10.0" fill="#dac8e1"/><circle cx="217.8" cy="134.3" r="10.0" class="s"/><circle cx="266.5" cy="218.3" r="10.1" fill="#b2b0c6"/><circle cx="266.5" cy="218.3" r="10.1" class="s"/><circle cx="242.7" cy="34.1" r="10.1" fill="#f0ece9"/><circle cx="242.7" cy="34.1" r="10.1" class="s"/><circle cx="231.1" cy="47.2" r="10.1" fill="#efe7e9"/><circle cx="231.1" cy="47.2" r="10.1" class="s"/><circle cx="203.8" cy="76.2" r="10.1" fill="#eedaea"/><circle cx="203.8" cy="76.2" r="10.1" class="s"/><circle cx="216.4" cy="64.6" r="10.1" fill="#efdfe8"/><circle cx="216.4" cy="64.6" r="10.1" class="s"/><circle cx="206.1" cy="154.9" r="10.2" fill="#dabfdb"/><circle cx="206.1" cy="154.9" r="10.2" class="s"/><circle cx="213.1" cy="223.2" r="10.2" fill="#c5a7cd"/><circle cx="213.1" cy="223.2" r="10.2" class="s"/><circle cx="233.1" cy="48.4" r="10.2" fill="#f0e6e5"/><circle cx="233.1" cy="48.4" r="10.2" class="s"/><circle cx="261.4" cy="336.9" r="10.2" fill="#837299"/><circle cx="261.4" cy="336.9" r="10.2" class="s"/><circle cx="218.7" cy="65.9" r="10.2" fill="#efdfe5"/><circle cx="218.7" cy="65.9" r="10.2" class="s"/><circle cx="245.5" cy="35.7" r="10.2" fill="#f0ece3"/><circle cx="245.5" cy="35.7" r="10.2" class="s"/><circle cx="207.5" cy="78.3" r="10.2" fill="#efd9e5"/><circle cx="207.5" cy="78.3" r="10.2" class="s"/><circle cx="297.5" cy="244.5" r="10.2" fill="#9ea9b6"/><circle cx="297.5" cy="244.5" r="10.2" class="s"/><circle cx="247.8" cy="252.4" r="10.3" fill="#b2a0bc"/><circle cx="247.8" cy="252.4" r="10.3" class="s"/><circle cx="189.6" cy="98.5" r="10.3" fill="#eed0e5"/><circle cx="189.6" cy="98.5" r="10.3" class="s"/><circle cx="241.4" cy="118.7" r="10.3" fill="#dbd1d6"/><circle cx="241.4" cy="118.7" r="10.3" class="s"/><circle cx="243.2" cy="190.9" r="10.3" fill="#c6b7c9"/><circle cx="243.2" cy="190.9" r="10.3" class="s"/><circle cx="220.8" cy="67.2" r="10.3" fill="#efdfe1"/><circle cx="220.8" cy="67.2" r="10.3" class="s"/><circle cx="209.8" cy="79.7" r="10.3" fill="#efd9e2"/><circle cx="209.8" cy="79.7" r="10.3" class="s"/><circle cx="236.1" cy="50.2" r="10.3" fill="#f0e6e0"/><circle cx="236.1" cy="50.2" r="10.3" class="s"/><circle cx="335.1" cy="275.6" r="10.4" fill="#7e9fa7"/><circle cx="335.1" cy="275.6" r="10.4" class="s"/><circle cx="271.4" cy="211.2" r="10.4" fill="#99989d"/><circle cx="271.4" cy="211.2" r="10.4" class="s"/><circle cx="278.9" cy="276.7" r="10.4" fill="#9e99ac"/><circle cx="278.9" cy="276.7" r="10.4" class="s"/><circle cx="193.4" cy="100.7" r="10.4" fill="#eed0e0"/><circle cx="193.4" cy="100.7" r="10.4" class="s"/><circle cx="295.5" cy="453.2" r="10.4" fill="#453065"/><circle cx="295.5" cy="453.2" r="10.4" class="s"/><circle cx="212.1" cy="81.0" r="10.4" fill="#efd9de"/><circle cx="212.1" cy="81.0" r="10.4" class="s"/><circle cx="196.0" cy="256.6" r="10.4" fill="#c595c2"/><circle cx="196.0" cy="256.6" r="10.4" class="s"/><circle cx="229.0" cy="140.0" r="10.5" fill="#dac8d1"/><circle cx="229.0" cy="140.0" r="10.5" class="s"/><circle cx="231.0" cy="283.3" r="10.5" fill="#b28fb2"/><circle cx="231.0" cy="283.3" r="10.5" class="s"/><circle cx="276.5" cy="220.8" r="10.5" fill="#b2b0b8"/><circle cx="276.5" cy="220.8" r="10.5" class="s"/><circle cx="224.0" cy="69.1" r="10.5" fill="#efdfdc"/><circle cx="224.0" cy="69.1" r="10.5" class="s"/><circle cx="176.4" cy="120.2" r="10.5" fill="#edc7df"/><circle cx="176.4" cy="120.2" r="10.5" class="s"/><circle cx="184.9" cy="193.8" r="10.5" fill="#d9add1"/><circle cx="184.9" cy="193.8" r="10.5" class="s"/><circle cx="250.0" cy="38.4" r="10.5" fill="#f0ebda"/><circle cx="250.0" cy="38.4" r="10.5" class="s"/><circle cx="195.8" cy="102.1" r="10.5" fill="#eed0dc"/><circle cx="195.8" cy="102.1" r="10.5" class="s"/><circle cx="246.9" cy="158.3" r="10.5" fill="#d0c4c7"/><circle cx="246.9" cy="158.3" r="10.5" class="s"/><circle cx="390.2" cy="206.9" r="10.5" fill="#77bcad"/><circle cx="390.2" cy="206.9" r="10.5" class="s"/><circle cx="278.8" cy="248.9" r="10.6" fill="#848388"/><circle cx="278.8" cy="248.9" r="10.6" class="s"/><circle cx="223.3" cy="227.1" r="10.6" fill="#c5a6bf"/><circle cx="223.3" cy="227.1" r="10.6" class="s"/><circle cx="215.3" cy="83.0" r="10.6" fill="#efd9d9"/><circle cx="215.3" cy="83.0" r="10.6" class="s"/><circle cx="217.3" cy="160.5" r="10.6" fill="#dabfcc"/><circle cx="217.3" cy="160.5" r="10.6" class="s"/><circle cx="240.8" cy="53.0" r="10.6" fill="#f0e6d7"/><circle cx="240.8" cy="53.0" r="10.6" class="s"/><circle cx="198.2" cy="103.5" r="10.6" fill="#eed0d9"/><circle cx="198.2" cy="103.5" r="10.6" class="s"/><circle cx="366.7" cy="242.9" r="10.7" fill="#7bada4"/><circle cx="366.7" cy="242.9" r="10.7" class="s"/><circle cx="307.4" cy="245.8" r="10.7" fill="#9da9a9"/><circle cx="307.4" cy="245.8" r="10.7" class="s"/><circle cx="256.9" cy="254.8" r="10.7" fill="#b29fae"/><circle cx="256.9" cy="254.8" r="10.7" class="s"/><circle cx="223.9" cy="301.3" r="10.7" fill="#a17b9f"/><circle cx="223.9" cy="301.3" r="10.7" class="s"/><circle cx="164.3" cy="141.1" r="10.7" fill="#edbdda"/><circle cx="164.3" cy="141.1" r="10.7" class="s"/><circle cx="208.8" cy="196.0" r="10.7" fill="#c2a3b7"/><circle cx="208.8" cy="196.0" r="10.7" class="s"/><circle cx="355.7" cy="259.8" r="10.7" fill="#7ca69f"/><circle cx="355.7" cy="259.8" r="10.7" class="s"/><circle cx="253.0" cy="194.3" r="10.7" fill="#c6b7ba"/><circle cx="253.0" cy="194.3" r="10.7" class="s"/><circle cx="229.0" cy="72.1" r="10.7" fill="#f0ded3"/><circle cx="229.0" cy="72.1" r="10.7" class="s"/><circle cx="345.1" cy="276.1" r="10.8" fill="#7d9f9b"/><circle cx="345.1" cy="276.1" r="10.8" class="s"/><circle cx="201.6" cy="105.5" r="10.8" fill="#eed0d4"/><circle cx="201.6" cy="105.5" r="10.8" class="s"/><circle cx="301.1" cy="454.1" r="10.8" fill="#44305e"/><circle cx="301.1" cy="454.1" r="10.8" class="s"/><circle cx="287.6" cy="278.2" r="10.8" fill="#9e99a0"/><circle cx="287.6" cy="278.2" r="10.8" class="s"/><circle cx="254.3" cy="41.0" r="10.8" fill="#f1ebd1"/><circle cx="254.3" cy="41.0" r="10.8" class="s"/><circle cx="168.2" cy="143.4" r="10.8" fill="#edbdd5"/><circle cx="168.2" cy="143.4" r="10.8" class="s"/><circle cx="364.2" cy="172.3" r="10.8" fill="#9ac8ad"/><circle cx="364.2" cy="172.3" r="10.8" class="s"/><circle cx="166.7" cy="229.4" r="10.8" fill="#d79bc6"/><circle cx="166.7" cy="229.4" r="10.8" class="s"/><circle cx="239.3" cy="285.6" r="10.8" fill="#b18fa5"/><circle cx="239.3" cy="285.6" r="10.8" class="s"/><circle cx="220.5" cy="86.0" r="10.8" fill="#efd9d0"/><circle cx="220.5" cy="86.0" r="10.8" class="s"/><circle cx="325.2" cy="306.6" r="10.9" fill="#7f9092"/><circle cx="325.2" cy="306.6" r="10.9" class="s"/><circle cx="248.6" cy="340.8" r="10.9" fill="#7e617d"/><circle cx="248.6" cy="340.8" r="10.9" class="s"/><circle cx="153.2" cy="161.4" r="10.9" fill="#ecb4d5"/><circle cx="153.2" cy="161.4" r="10.9" class="s"/><circle cx="245.3" cy="55.7" r="10.9" fill="#f0e5ce"/><circle cx="245.3" cy="55.7" r="10.9" class="s"/><circle cx="195.8" cy="199.1" r="10.9" fill="#d9adc2"/><circle cx="195.8" cy="199.1" r="10.9" class="s"/><circle cx="285.9" cy="222.7" r="10.9" fill="#b2afaa"/><circle cx="285.9" cy="222.7" r="10.9" class="s"/><circle cx="170.7" cy="144.8" r="10.9" fill="#edbdd2"/><circle cx="170.7" cy="144.8" r="10.9" class="s"/><circle cx="259.2" cy="227.0" r="10.9" fill="#bcabad"/><circle cx="259.2" cy="227.0" r="10.9" class="s"/><circle cx="237.3" cy="262.8" r="10.9" fill="#98808f"/><circle cx="237.3" cy="262.8" r="10.9" class="s"/><circle cx="427.8" cy="233.2" r="10.9" fill="#4db19b"/><circle cx="427.8" cy="233.2" r="10.9" class="s"/><circle cx="398.2" cy="316.7" r="10.9" fill="#348e8a"/><circle cx="398.2" cy="316.7" r="10.9" class="s"/><circle cx="239.1" cy="144.6" r="10.9" fill="#dbc7c1"/><circle cx="239.1" cy="144.6" r="10.9" class="s"/><circle cx="307.3" cy="334.2" r="11.0" fill="#81818a"/><circle cx="307.3" cy="334.2" r="11.0" class="s"/><circle cx="232.4" cy="230.4" r="11.0" fill="#c5a6b1"/><circle cx="232.4" cy="230.4" r="11.0" class="s"/><circle cx="415.7" cy="250.9" r="11.0" fill="#51aa97"/><circle cx="415.7" cy="250.9" r="11.0" class="s"/><circle cx="269.0" cy="134.9" r="11.0" fill="#c5c0ab"/><circle cx="269.0" cy="134.9" r="11.0" class="s"/><circle cx="296.3" cy="338.3" r="11.0" fill="#49494b"/><circle cx="296.3" cy="338.3" r="11.0" class="s"/><circle cx="173.2" cy="146.2" r="11.0" fill="#edbdcf"/><circle cx="173.2" cy="146.2" r="11.0" class="s"/><circle cx="404.0" cy="268.0" r="11.0" fill="#55a393"/><circle cx="404.0" cy="268.0" r="11.0" class="s"/><circle cx="311.3" cy="316.0" r="11.0" fill="#5e6661"/><circle cx="311.3" cy="316.0" r="11.0" class="s"/><circle cx="207.0" cy="108.6" r="11.0" fill="#efcfcb"/><circle cx="207.0" cy="108.6" r="11.0" class="s"/><circle cx="233.8" cy="74.9" r="11.0" fill="#f0deca"/><circle cx="233.8" cy="74.9" r="11.0" class="s"/><circle cx="392.7" cy="284.4" r="11.0" fill="#589c8e"/><circle cx="392.7" cy="284.4" r="11.0" class="s"/><circle cx="227.3" cy="165.2" r="11.0" fill="#dabebc"/><circle cx="227.3" cy="165.2" r="11.0" class="s"/><circle cx="265.3" cy="256.9" r="11.0" fill="#b19fa1"/><circle cx="265.3" cy="256.9" r="11.0" class="s"/><circle cx="403.0" cy="283.2" r="11.1" fill="#429280"/><circle cx="403.0" cy="283.2" r="11.1" class="s"/><circle cx="380.1" cy="347.7" r="11.1" fill="#2f7572"/><circle cx="380.1" cy="347.7" r="11.1" class="s"/><circle cx="343.9" cy="145.7" r="11.1" fill="#b1d0ad"/><circle cx="343.9" cy="145.7" r="11.1" class="s"/><circle cx="316.6" cy="246.7" r="11.1" fill="#9da89c"/><circle cx="316.6" cy="246.7" r="11.1" class="s"/><circle cx="381.9" cy="300.1" r="11.1" fill="#5b958a"/><circle cx="381.9" cy="300.1" r="11.1" class="s"/><circle cx="261.5" cy="319.2" r="11.1" fill="#6f5e69"/><circle cx="261.5" cy="319.2" r="11.1" class="s"/><circle cx="258.4" cy="43.5" r="11.1" fill="#f1eac8"/><circle cx="258.4" cy="43.5" r="11.1" class="s"/><circle cx="225.4" cy="88.9" r="11.1" fill="#efd8c8"/><circle cx="225.4" cy="88.9" r="11.1" class="s"/><circle cx="281.9" cy="217.6" r="11.1" fill="#9a9687"/><circle cx="281.9" cy="217.6" r="11.1" class="s"/><circle cx="176.7" cy="148.3" r="11.1" fill="#edbdca"/><circle cx="176.7" cy="148.3" r="11.1" class="s"/><circle cx="344.7" cy="292.6" r="11.1" fill="#658170"/><circle cx="344.7" cy="292.6" r="11.1" class="s"/><circle cx="330.8" cy="166.4" r="11.1" fill="#b1c7a9"/><circle cx="330.8" cy="166.4" r="11.1" class="s"/><circle cx="407.3" cy="205.7" r="11.2" fill="#76bc9a"/><circle cx="407.3" cy="205.7" r="11.2" class="s"/><circle cx="295.7" cy="279.5" r="11.2" fill="#9d9894"/><circle cx="295.7" cy="279.5" r="11.2" class="s"/><circle cx="262.1" cy="197.0" r="11.2" fill="#c6b6ab"/><circle cx="262.1" cy="197.0" r="11.2" class="s"/><circle cx="176.9" cy="234.3" r="11.2" fill="#d79ab8"/><circle cx="176.9" cy="234.3" r="11.2" class="s"/><circle cx="246.7" cy="287.8" r="11.2" fill="#b18e99"/><circle cx="246.7" cy="287.8" r="11.2" class="s"/><circle cx="394.4" cy="224.5" r="11.2" fill="#78b496"/><circle cx="394.4" cy="224.5" r="11.2" class="s"/><circle cx="292.8" cy="287.4" r="11.2" fill="#706e63"/><circle cx="292.8" cy="287.4" r="11.2" class="s"/><circle cx="237.7" cy="306.4" r="11.2" fill="#a17a8a"/><circle cx="237.7" cy="306.4" r="11.2" class="s"/><circle cx="455.5" cy="251.7" r="11.2" fill="#00a88d"/><circle cx="455.5" cy="251.7" r="11.2" class="s"/><circle cx="382.0" cy="242.6" r="11.2" fill="#7aad92"/><circle cx="382.0" cy="242.6" r="11.2" class="s"/><circle cx="306.2" cy="205.6" r="11.2" fill="#b1b7a0"/><circle cx="306.2" cy="205.6" r="11.2" class="s"/><circle cx="211.9" cy="111.5" r="11.3" fill="#efcfc3"/><circle cx="211.9" cy="111.5" r="11.3" class="s"/><circle cx="317.5" cy="335.2" r="11.3" fill="#666d65"/><circle cx="317.5" cy="335.2" r="11.3" class="s"/><circle cx="443.7" cy="269.3" r="11.3" fill="#13a189"/><circle cx="443.7" cy="269.3" r="11.3" class="s"/><circle cx="370.0" cy="260.0" r="11.3" fill="#7ba58e"/><circle cx="370.0" cy="260.0" r="11.3" class="s"/><circle cx="133.8" cy="199.4" r="11.3" fill="#eaa1ca"/><circle cx="133.8" cy="199.4" r="11.3" class="s"/><circle cx="144.4" cy="276.0" r="11.3" fill="#d57fb8"/><circle cx="144.4" cy="276.0" r="11.3" class="s"/><circle cx="205.3" cy="203.6" r="11.3" fill="#d9acb3"/><circle cx="205.3" cy="203.6" r="11.3" class="s"/><circle cx="417.7" cy="325.1" r="11.3" fill="#00897e"/><circle cx="417.7" cy="325.1" r="11.3" class="s"/><circle cx="358.5" cy="276.7" r="11.3" fill="#7d9e8a"/><circle cx="358.5" cy="276.7" r="11.3" class="s"/><circle cx="258.7" cy="344.5" r="11.3" fill="#7e616d"/><circle cx="258.7" cy="344.5" r="11.3" class="s"/><circle cx="369.4" cy="311.7" r="11.3" fill="#4f7964"/><circle cx="369.4" cy="311.7" r="11.3" class="s"/><circle cx="321.4" cy="116.4" r="11.3" fill="#c7d8ad"/><circle cx="321.4" cy="116.4" r="11.3" class="s"/><circle cx="182.1" cy="151.4" r="11.3" fill="#edbcc2"/><circle cx="182.1" cy="151.4" r="11.3" class="s"/><circle cx="301.3" cy="341.3" r="11.3" fill="#4a4842"/><circle cx="301.3" cy="341.3" r="11.3" class="s"/><circle cx="175.9" cy="257.2" r="11.3" fill="#c085a6"/><circle cx="175.9" cy="257.2" r="11.3" class="s"/><circle cx="240.5" cy="233.2" r="11.3" fill="#c5a5a3"/><circle cx="240.5" cy="233.2" r="11.3" class="s"/><circle cx="421.1" cy="302.3" r="11.3" fill="#2b9481"/><circle cx="421.1" cy="302.3" r="11.3" class="s"/><circle cx="395.2" cy="354.3" r="11.4" fill="#097168"/><circle cx="395.2" cy="354.3" r="11.4" class="s"/><circle cx="349.4" cy="316.9" r="11.4" fill="#678272"/><circle cx="349.4" cy="316.9" r="11.4" class="s"/><circle cx="397.7" cy="352.7" r="11.4" fill="#197c76"/><circle cx="397.7" cy="352.7" r="11.4" class="s"/><circle cx="410.3" cy="317.6" r="11.4" fill="#328d7d"/><circle cx="410.3" cy="317.6" r="11.4" class="s"/><circle cx="137.4" cy="201.6" r="11.4" fill="#eaa1c6"/><circle cx="137.4" cy="201.6" r="11.4" class="s"/><circle cx="337.0" cy="308.0" r="11.4" fill="#7e8f82"/><circle cx="337.0" cy="308.0" r="11.4" class="s"/><circle cx="248.2" cy="148.4" r="11.4" fill="#dbc6b1"/><circle cx="248.2" cy="148.4" r="11.4" class="s"/><circle cx="213.0" cy="308.1" r="11.4" fill="#966982"/><circle cx="213.0" cy="308.1" r="11.4" class="s"/><circle cx="262.4" cy="45.9" r="11.4" fill="#f1eabf"/><circle cx="262.4" cy="45.9" r="11.4" class="s"/><circle cx="307.9" cy="138.2" r="11.4" fill="#c6cfa9"/><circle cx="307.9" cy="138.2" r="11.4" class="s"/><circle cx="165.1" cy="336.2" r="11.4" fill="#c0609b"/><circle cx="165.1" cy="336.2" r="11.4" class="s"/><circle cx="252.3" cy="347.6" r="11.4" fill="#9c7281"/><circle cx="252.3" cy="347.6" r="11.4" class="s"/><circle cx="389.5" cy="348.4" r="11.4" fill="#2e7568"/><circle cx="389.5" cy="348.4" r="11.4" class="s"/><circle cx="320.3" cy="260.6" r="11.4" fill="#808b70"/><circle cx="320.3" cy="260.6" r="11.4" class="s"/><circle cx="272.8" cy="258.6" r="11.4" fill="#b19e95"/><circle cx="272.8" cy="258.6" r="11.4" class="s"/><circle cx="441.8" cy="231.9" r="11.4" fill="#4cb18b"/><circle cx="441.8" cy="231.9" r="11.4" class="s"/><circle cx="226.4" cy="206.2" r="11.4" fill="#c3a29c"/><circle cx="226.4" cy="206.2" r="11.4" class="s"/><circle cx="389.7" cy="345.9" r="11.4" fill="#3c8075"/><circle cx="389.7" cy="345.9" r="11.4" class="s"/><circle cx="317.5" cy="336.4" r="11.4" fill="#7f817b"/><circle cx="317.5" cy="336.4" r="11.4" class="s"/><circle cx="139.8" cy="202.9" r="11.5" fill="#eaa1c3"/><circle cx="139.8" cy="202.9" r="11.5" class="s"/><circle cx="319.8" cy="317.7" r="11.5" fill="#5e6654"/><circle cx="319.8" cy="317.7" r="11.5" class="s"/><circle cx="429.1" cy="250.2" r="11.5" fill="#50aa87"/><circle cx="429.1" cy="250.2" r="11.5" class="s"/><circle cx="250.4" cy="270.3" r="11.5" fill="#987f7b"/><circle cx="250.4" cy="270.3" r="11.5" class="s"/><circle cx="294.8" cy="159.3" r="11.5" fill="#c6c7a5"/><circle cx="294.8" cy="159.3" r="11.5" class="s"/><circle cx="253.6" cy="60.7" r="11.5" fill="#f1e4bc"/><circle cx="253.6" cy="60.7" r="11.5" class="s"/><circle cx="270.6" cy="324.5" r="11.5" fill="#6f5e5b"/><circle cx="270.6" cy="324.5" r="11.5" class="s"/><circle cx="416.9" cy="267.8" r="11.5" fill="#54a383"/><circle cx="416.9" cy="267.8" r="11.5" class="s"/><circle cx="236.0" cy="169.0" r="11.5" fill="#dabdad"/><circle cx="236.0" cy="169.0" r="11.5" class="s"/><circle cx="380.6" cy="171.6" r="11.5" fill="#9ac798"/><circle cx="380.6" cy="171.6" r="11.5" class="s"/><circle cx="366.5" cy="235.7" r="11.5" fill="#7fa37e"/><circle cx="366.5" cy="235.7" r="11.5" class="s"/><circle cx="354.1" cy="292.2" r="11.5" fill="#658064"/><circle cx="354.1" cy="292.2" r="11.5" class="s"/><circle cx="405.0" cy="284.6" r="11.5" fill="#579c80"/><circle cx="405.0" cy="284.6" r="11.5" class="s"/><circle cx="142.0" cy="204.2" r="11.5" fill="#eaa0c0"/><circle cx="142.0" cy="204.2" r="11.5" class="s"/><circle cx="185.6" cy="238.5" r="11.5" fill="#d79aab"/><circle cx="185.6" cy="238.5" r="11.5" class="s"/><circle cx="203.6" cy="359.2" r="11.5" fill="#ad5e83"/><circle cx="203.6" cy="359.2" r="11.5" class="s"/><circle cx="366.9" cy="191.7" r="11.5" fill="#9bbf94"/><circle cx="366.9" cy="191.7" r="11.5" class="s"/><circle cx="253.2" cy="289.9" r="11.5" fill="#b08e8d"/><circle cx="253.2" cy="289.9" r="11.5" class="s"/><circle cx="282.3" cy="179.6" r="11.5" fill="#c6bea1"/><circle cx="282.3" cy="179.6" r="11.5" class="s"/><circle cx="187.1" cy="154.4" r="11.5" fill="#edbcba"/><circle cx="187.1" cy="154.4" r="11.5" class="s"/><circle cx="393.5" cy="300.8" r="11.5" fill="#5a957c"/><circle cx="393.5" cy="300.8" r="11.5" class="s"/><circle cx="242.3" cy="79.9" r="11.6" fill="#f0ddb9"/><circle cx="242.3" cy="79.9" r="11.6" class="s"/><circle cx="353.7" cy="211.0" r="11.6" fill="#9bb791"/><circle cx="353.7" cy="211.0" r="11.6" class="s"/><circle cx="299.2" cy="351.0" r="11.6" fill="#5e574c"/><circle cx="299.2" cy="351.0" r="11.6" class="s"/><circle cx="153.2" cy="279.9" r="11.6" fill="#d47fab"/><circle cx="153.2" cy="279.9" r="11.6" class="s"/><circle cx="291.0" cy="307.9" r="11.6" fill="#7f7566"/><circle cx="291.0" cy="307.9" r="11.6" class="s"/><circle cx="281.3" cy="256.9" r="11.6" fill="#a29581"/><circle cx="281.3" cy="256.9" r="11.6" class="s"/><circle cx="324.6" cy="335.7" r="11.6" fill="#666d5a"/><circle cx="324.6" cy="335.7" r="11.6" class="s"/><circle cx="270.2" cy="199.1" r="11.6" fill="#c6b69d"/><circle cx="270.2" cy="199.1" r="11.6" class="s"/><circle cx="341.0" cy="229.7" r="11.6" fill="#9caf8d"/><circle cx="341.0" cy="229.7" r="11.6" class="s"/><circle cx="371.9" cy="330.7" r="11.6" fill="#5e8774"/><circle cx="371.9" cy="330.7" r="11.6" class="s"/><circle cx="326.6" cy="294.4" r="11.6" fill="#818a71"/><circle cx="326.6" cy="294.4" r="11.6" class="s"/><circle cx="465.1" cy="251.0" r="11.6" fill="#00a781"/><circle cx="465.1" cy="251.0" r="11.6" class="s"/><circle cx="145.3" cy="206.1" r="11.6" fill="#eaa0bc"/><circle cx="145.3" cy="206.1" r="11.6" class="s"/><circle cx="234.0" cy="94.0" r="11.6" fill="#efd7b6"/><circle cx="234.0" cy="94.0" r="11.6" class="s"/><circle cx="402.0" cy="355.0" r="11.6" fill="#05705f"/><circle cx="402.0" cy="355.0" r="11.6" class="s"/><circle cx="408.1" cy="342.7" r="11.6" fill="#006952"/><circle cx="408.1" cy="342.7" r="11.6" class="s"/><circle cx="328.9" cy="247.6" r="11.6" fill="#9ca789"/><circle cx="328.9" cy="247.6" r="11.6" class="s"/><circle cx="296.6" cy="84.5" r="11.6" fill="#dce0ad"/><circle cx="296.6" cy="84.5" r="11.6" class="s"/><circle cx="377.4" cy="310.8" r="11.6" fill="#4f795a"/><circle cx="377.4" cy="310.8" r="11.6" class="s"/><circle cx="453.1" cy="269.1" r="11.6" fill="#0fa17d"/><circle cx="453.1" cy="269.1" r="11.6" class="s"/><circle cx="171.1" cy="338.7" r="11.6" fill="#bf6190"/><circle cx="171.1" cy="338.7" r="11.6" class="s"/><circle cx="376.0" cy="376.1" r="11.6" fill="#285c4c"/><circle cx="376.0" cy="376.1" r="11.6" class="s"/><circle cx="352.1" cy="357.7" r="11.7" fill="#61796d"/><circle cx="352.1" cy="357.7" r="11.7" class="s"/><circle cx="426.5" cy="326.1" r="11.7" fill="#008873"/><circle cx="426.5" cy="326.1" r="11.7" class="s"/><circle cx="117.8" cy="233.9" r="11.7" fill="#e88ec1"/><circle cx="117.8" cy="233.9" r="11.7" class="s"/><circle cx="235.1" cy="371.3" r="11.7" fill="#6c4259"/><circle cx="235.1" cy="371.3" r="11.7" class="s"/><circle cx="305.4" cy="343.8" r="11.7" fill="#4a483a"/><circle cx="305.4" cy="343.8" r="11.7" class="s"/><circle cx="398.0" cy="260.9" r="11.7" fill="#629971"/><circle cx="398.0" cy="260.9" r="11.7" class="s"/><circle cx="441.5" cy="286.3" r="11.7" fill="#1f9a79"/><circle cx="441.5" cy="286.3" r="11.7" class="s"/><circle cx="213.4" cy="207.4" r="11.7" fill="#d8aca5"/><circle cx="213.4" cy="207.4" r="11.7" class="s"/><circle cx="404.9" cy="337.4" r="11.7" fill="#186d50"/><circle cx="404.9" cy="337.4" r="11.7" class="s"/><circle cx="347.8" cy="352.5" r="11.7" fill="#526651"/><circle cx="347.8" cy="352.5" r="11.7" class="s"/><circle cx="396.1" cy="349.0" r="11.7" fill="#2c745e"/><circle cx="396.1" cy="349.0" r="11.7" class="s"/><circle cx="475.0" cy="260.0" r="11.7" fill="#00a27b"/><circle cx="475.0" cy="260.0" r="11.7" class="s"/><circle cx="306.2" cy="281.2" r="11.7" fill="#9c9882"/><circle cx="306.2" cy="281.2" r="11.7" class="s"/><circle cx="382.6" cy="380.8" r="11.7" fill="#135948"/><circle cx="382.6" cy="380.8" r="11.7" class="s"/><circle cx="430.0" cy="302.8" r="11.7" fill="#299375"/><circle cx="430.0" cy="302.8" r="11.7" class="s"/><circle cx="421.4" cy="204.2" r="11.7" fill="#75bb88"/><circle cx="421.4" cy="204.2" r="11.7" class="s"/><circle cx="293.2" cy="344.0" r="11.7" fill="#807166"/><circle cx="293.2" cy="344.0" r="11.7" class="s"/><circle cx="266.4" cy="347.7" r="11.7" fill="#7d605d"/><circle cx="266.4" cy="347.7" r="11.7" class="s"/><circle cx="195.9" cy="308.3" r="11.7" fill="#c17a90"/><circle cx="195.9" cy="308.3" r="11.7" class="s"/><circle cx="199.9" cy="336.9" r="11.7" fill="#945779"/><circle cx="199.9" cy="336.9" r="11.7" class="s"/><circle cx="282.6" cy="107.7" r="11.7" fill="#dbd8a9"/><circle cx="282.6" cy="107.7" r="11.7" class="s"/><circle cx="247.7" cy="235.6" r="11.7" fill="#c4a595"/><circle cx="247.7" cy="235.6" r="11.7" class="s"/><circle cx="299.0" cy="291.1" r="11.7" fill="#716d54"/><circle cx="299.0" cy="291.1" r="11.7" class="s"/><circle cx="374.0" cy="363.5" r="11.7" fill="#2d543c"/><circle cx="374.0" cy="363.5" r="11.7" class="s"/><circle cx="463.6" cy="278.0" r="11.7" fill="#009b77"/><circle cx="463.6" cy="278.0" r="11.7" class="s"/><circle cx="407.7" cy="223.5" r="11.7" fill="#77b385"/><circle cx="407.7" cy="223.5" r="11.7" class="s"/><circle cx="418.9" cy="318.3" r="11.7" fill="#308d72"/><circle cx="418.9" cy="318.3" r="11.7" class="s"/><circle cx="435.1" cy="296.8" r="11.7" fill="#0c8a64"/><circle cx="435.1" cy="296.8" r="11.7" class="s"/><circle cx="357.9" cy="317.2" r="11.7" fill="#668265"/><circle cx="357.9" cy="317.2" r="11.7" class="s"/><circle cx="290.6" cy="369.0" r="11.7" fill="#493f36"/><circle cx="290.6" cy="369.0" r="11.7" class="s"/><circle cx="220.7" cy="116.7" r="11.7" fill="#efceb2"/><circle cx="220.7" cy="116.7" r="11.7" class="s"/><circle cx="325.5" cy="318.2" r="11.7" fill="#5e654a"/><circle cx="325.5" cy="318.2" r="11.7" class="s"/><circle cx="394.5" cy="242.1" r="11.8" fill="#79ac81"/><circle cx="394.5" cy="242.1" r="11.8" class="s"/><circle cx="405.0" cy="355.4" r="11.8" fill="#03705a"/><circle cx="405.0" cy="355.4" r="11.8" class="s"/><circle cx="285.7" cy="311.8" r="11.8" fill="#9c887b"/><circle cx="285.7" cy="311.8" r="11.8" class="s"/><circle cx="452.3" cy="295.0" r="11.8" fill="#009574"/><circle cx="452.3" cy="295.0" r="11.8" class="s"/><circle cx="359.4" cy="145.8" r="11.8" fill="#b0cf97"/><circle cx="359.4" cy="145.8" r="11.8" class="s"/><circle cx="248.1" cy="310.6" r="11.8" fill="#a07a75"/><circle cx="248.1" cy="310.6" r="11.8" class="s"/><circle cx="386.6" cy="378.6" r="11.8" fill="#276f64"/><circle cx="386.6" cy="378.6" r="11.8" class="s"/><circle cx="158.3" cy="296.0" r="11.8" fill="#bd6d9a"/><circle cx="158.3" cy="296.0" r="11.8" class="s"/><circle cx="225.0" cy="315.1" r="11.8" fill="#956870"/><circle cx="225.0" cy="315.1" r="11.8" class="s"/><circle cx="381.7" cy="260.0" r="11.8" fill="#7aa57d"/><circle cx="381.7" cy="260.0" r="11.8" class="s"/><circle cx="207.8" cy="362.3" r="11.8" fill="#ac5e78"/><circle cx="207.8" cy="362.3" r="11.8" class="s"/><circle cx="397.7" cy="347.1" r="11.8" fill="#3a806a"/><circle cx="397.7" cy="347.1" r="11.8" class="s"/><circle cx="269.2" cy="130.0" r="11.8" fill="#dbcfa5"/><circle cx="269.2" cy="130.0" r="11.8" class="s"/><circle cx="469.3" cy="250.7" r="11.8" fill="#00a779"/><circle cx="469.3" cy="250.7" r="11.8" class="s"/><circle cx="150.3" cy="209.0" r="11.8" fill="#eaa0b5"/><circle cx="150.3" cy="209.0" r="11.8" class="s"/><circle cx="441.2" cy="311.2" r="11.8" fill="#008e70"/><circle cx="441.2" cy="311.2" r="11.8" class="s"/><circle cx="251.4" cy="372.0" r="11.8" fill="#7c5157"/><circle cx="251.4" cy="372.0" r="11.8" class="s"/><circle cx="290.7" cy="222.8" r="11.8" fill="#9a9570"/><circle cx="290.7" cy="222.8" r="11.8" class="s"/><circle cx="345.3" cy="166.8" r="11.8" fill="#b1c793"/><circle cx="345.3" cy="166.8" r="11.8" class="s"/><circle cx="303.4" cy="351.9" r="11.8" fill="#5d5644"/><circle cx="303.4" cy="351.9" r="11.8" class="s"/><circle cx="369.5" cy="277.1" r="11.8" fill="#7b9d7a"/><circle cx="369.5" cy="277.1" r="11.8" class="s"/><circle cx="397.3" cy="325.8" r="11.8" fill="#36724e"/><circle cx="397.3" cy="325.8" r="11.8" class="s"/><circle cx="399.1" cy="349.3" r="11.8" fill="#2b7459"/><circle cx="399.1" cy="349.3" r="11.8" class="s"/><circle cx="457.4" cy="269.0" r="11.8" fill="#0ca075"/><circle cx="457.4" cy="269.0" r="11.8" class="s"/><circle cx="451.7" cy="230.8" r="11.8" fill="#4bb07d"/><circle cx="451.7" cy="230.8" r="11.8" class="s"/><circle cx="430.4" cy="326.5" r="11.8" fill="#00886c"/><circle cx="430.4" cy="326.5" r="11.8" class="s"/><circle cx="383.0" cy="335.8" r="11.8" fill="#4a7a5d"/><circle cx="383.0" cy="335.8" r="11.8" class="s"/><circle cx="332.2" cy="442.1" r="11.8" fill="#2a3434"/><circle cx="332.2" cy="442.1" r="11.8" class="s"/><circle cx="331.6" cy="187.0" r="11.8" fill="#b1be90"/><circle cx="331.6" cy="187.0" r="11.8" class="s"/><circle cx="259.3" cy="351.3" r="11.8" fill="#9b7171"/><circle cx="259.3" cy="351.3" r="11.8" class="s"/><circle cx="377.9" cy="372.6" r="11.8" fill="#417363"/><circle cx="377.9" cy="372.6" r="11.8" class="s"/><circle cx="227.3" cy="268.6" r="11.8" fill="#c3948e"/><circle cx="227.3" cy="268.6" r="11.8" class="s"/><circle cx="373.7" cy="396.1" r="11.8" fill="#245c4e"/><circle cx="373.7" cy="396.1" r="11.8" class="s"/><circle cx="160.5" cy="283.7" r="11.8" fill="#d47f9e"/><circle cx="160.5" cy="283.7" r="11.8" class="s"/><circle cx="368.4" cy="366.5" r="11.8" fill="#3c6046"/><circle cx="368.4" cy="366.5" r="11.8" class="s"/><circle cx="277.0" cy="328.4" r="11.8" fill="#6f5d4d"/><circle cx="277.0" cy="328.4" r="11.8" class="s"/><circle cx="111.0" cy="249.7" r="11.8" fill="#e784bc"/><circle cx="111.0" cy="249.7" r="11.8" class="s"/><circle cx="438.7" cy="249.6" r="11.8" fill="#4fa97a"/><circle cx="438.7" cy="249.6" r="11.8" class="s"/><circle cx="366.0" cy="352.2" r="11.8" fill="#3c593a"/><circle cx="366.0" cy="352.2" r="11.8" class="s"/><circle cx="445.6" cy="286.4" r="11.8" fill="#1e9a72"/><circle cx="445.6" cy="286.4" r="11.8" class="s"/><circle cx="328.3" cy="261.4" r="11.8" fill="#808a62"/><circle cx="328.3" cy="261.4" r="11.8" class="s"/><circle cx="242.2" cy="375.6" r="11.8" fill="#6b424e"/><circle cx="242.2" cy="375.6" r="11.8" class="s"/><circle cx="362.0" cy="291.5" r="11.8" fill="#648058"/><circle cx="362.0" cy="291.5" r="11.8" class="s"/><circle cx="343.2" cy="375.9" r="11.8" fill="#343f2a"/><circle cx="343.2" cy="375.9" r="11.8" class="s"/><circle cx="256.2" cy="151.4" r="11.9" fill="#dac6a1"/><circle cx="256.2" cy="151.4" r="11.9" class="s"/><circle cx="273.7" cy="397.8" r="11.9" fill="#5a3d3a"/><circle cx="273.7" cy="397.8" r="11.9" class="s"/><circle cx="192.1" cy="266.7" r="11.9" fill="#bf848e"/><circle cx="192.1" cy="266.7" r="11.9" class="s"/><circle cx="193.0" cy="242.2" r="11.9" fill="#d69a9d"/><circle cx="193.0" cy="242.2" r="11.9" class="s"/><circle cx="426.0" cy="267.6" r="11.9" fill="#53a276"/><circle cx="426.0" cy="267.6" r="11.9" class="s"/><circle cx="318.5" cy="206.6" r="11.9" fill="#b1b68c"/><circle cx="318.5" cy="206.6" r="11.9" class="s"/><circle cx="383.2" cy="310.1" r="11.9" fill="#4e7851"/><circle cx="383.2" cy="310.1" r="11.9" class="s"/><circle cx="434.1" cy="303.0" r="11.9" fill="#28936e"/><circle cx="434.1" cy="303.0" r="11.9" class="s"/><circle cx="343.3" cy="399.8" r="11.9" fill="#40503e"/><circle cx="343.3" cy="399.8" r="11.9" class="s"/><circle cx="409.5" cy="354.5" r="11.9" fill="#137b65"/><circle cx="409.5" cy="354.5" r="11.9" class="s"/><circle cx="308.0" cy="345.4" r="11.9" fill="#4a4834"/><circle cx="308.0" cy="345.4" r="11.9" class="s"/><circle cx="325.7" cy="338.4" r="11.9" fill="#7e806c"/><circle cx="325.7" cy="338.4" r="11.9" class="s"/><circle cx="349.6" cy="380.6" r="11.9" fill="#506452"/><circle cx="349.6" cy="380.6" r="11.9" class="s"/><circle cx="227.7" cy="343.5" r="11.9" fill="#9e656d"/><circle cx="227.7" cy="343.5" r="11.9" class="s"/><circle cx="176.1" cy="341.7" r="11.9" fill="#be6185"/><circle cx="176.1" cy="341.7" r="11.9" class="s"/><circle cx="366.9" cy="391.4" r="11.9" fill="#375f4d"/><circle cx="366.9" cy="391.4" r="11.9" class="s"/><circle cx="353.5" cy="419.9" r="11.9" fill="#2c4d46"/><circle cx="353.5" cy="419.9" r="11.9" class="s"/><circle cx="413.8" cy="284.8" r="11.9" fill="#569b73"/><circle cx="413.8" cy="284.8" r="11.9" class="s"/><circle cx="280.8" cy="142.0" r="11.9" fill="#c5bf8e"/><circle cx="280.8" cy="142.0" r="11.9" class="s"/><circle cx="352.3" cy="352.7" r="11.9" fill="#516649"/><circle cx="352.3" cy="352.7" r="11.9" class="s"/><circle cx="292.9" cy="370.4" r="11.9" fill="#493e30"/><circle cx="292.9" cy="370.4" r="11.9" class="s"/><circle cx="238.5" cy="382.7" r="11.9" fill="#995b68"/><circle cx="238.5" cy="382.7" r="11.9" class="s"/><circle cx="135.0" cy="316.3" r="11.9" fill="#d1639f"/><circle cx="135.0" cy="316.3" r="11.9" class="s"/><circle cx="424.9" cy="281.0" r="11.9" fill="#409061"/><circle cx="424.9" cy="281.0" r="11.9" class="s"/><circle cx="306.0" cy="225.4" r="11.9" fill="#b0ae89"/><circle cx="306.0" cy="225.4" r="11.9" class="s"/><circle cx="422.8" cy="318.7" r="11.9" fill="#2f8c6a"/><circle cx="422.8" cy="318.7" r="11.9" class="s"/><circle cx="351.7" cy="404.8" r="11.9" fill="#486059"/><circle cx="351.7" cy="404.8" r="11.9" class="s"/><circle cx="187.7" cy="394.6" r="11.9" fill="#a7346b"/><circle cx="187.7" cy="394.6" r="11.9" class="s"/><circle cx="401.9" cy="301.2" r="11.9" fill="#58946f"/><circle cx="401.9" cy="301.2" r="11.9" class="s"/><circle cx="279.9" cy="391.2" r="11.9" fill="#47352d"/><circle cx="279.9" cy="391.2" r="11.9" class="s"/><circle cx="297.0" cy="309.2" r="11.9" fill="#7f755a"/><circle cx="297.0" cy="309.2" r="11.9" class="s"/><circle cx="114.0" cy="251.5" r="11.9" fill="#e784b8"/><circle cx="114.0" cy="251.5" r="11.9" class="s"/><circle cx="336.9" cy="438.2" r="11.9" fill="#313f3f"/><circle cx="336.9" cy="438.2" r="11.9" class="s"/><circle cx="389.9" cy="379.2" r="11.9" fill="#256e5e"/><circle cx="389.9" cy="379.2" r="11.9" class="s"/><circle cx="346.3" cy="416.4" r="11.9" fill="#3c5046"/><circle cx="346.3" cy="416.4" r="11.9" class="s"/><circle cx="243.7" cy="172.0" r="11.9" fill="#dabd9e"/><circle cx="243.7" cy="172.0" r="11.9" class="s"/><circle cx="258.4" cy="359.5" r="11.9" fill="#6d4d47"/><circle cx="258.4" cy="359.5" r="11.9" class="s"/><circle cx="401.2" cy="347.6" r="11.9" fill="#397f63"/><circle cx="401.2" cy="347.6" r="11.9" class="s"/><circle cx="299.0" cy="415.2" r="11.9" fill="#49392c"/><circle cx="299.0" cy="415.2" r="11.9" class="s"/><circle cx="379.4" cy="331.8" r="11.9" fill="#5c8669"/><circle cx="379.4" cy="331.8" r="11.9" class="s"/><circle cx="330.5" cy="429.8" r="11.9" fill="#4b4e50"/><circle cx="330.5" cy="429.8" r="11.9" class="s"/><circle cx="385.9" cy="336.0" r="11.9" fill="#4a7a56"/><circle cx="385.9" cy="336.0" r="11.9" class="s"/><circle cx="282.6" cy="260.7" r="11.9" fill="#b09e82"/><circle cx="282.6" cy="260.7" r="11.9" class="s"/><circle cx="331.7" cy="194.1" r="11.9" fill="#a3b07b"/><circle cx="331.7" cy="194.1" r="11.9" class="s"/><circle cx="311.2" cy="398.2" r="11.9" fill="#4a432f"/><circle cx="311.2" cy="398.2" r="11.9" class="s"/><circle cx="154.8" cy="211.7" r="11.9" fill="#eaa0ad"/><circle cx="154.8" cy="211.7" r="11.9" class="s"/><circle cx="377.1" cy="234.7" r="11.9" fill="#7ea36e"/><circle cx="377.1" cy="234.7" r="11.9" class="s"/><circle cx="270.8" cy="349.5" r="12.0" fill="#7d6052"/><circle cx="270.8" cy="349.5" r="12.0" class="s"/><circle cx="115.9" cy="252.7" r="12.0" fill="#e784b5"/><circle cx="115.9" cy="252.7" r="12.0" class="s"/><circle cx="195.7" cy="159.5" r="12.0" fill="#edbbaa"/><circle cx="195.7" cy="159.5" r="12.0" class="s"/><circle cx="259.5" cy="275.8" r="12.0" fill="#987f67"/><circle cx="259.5" cy="275.8" r="12.0" class="s"/><circle cx="275.4" cy="399.2" r="12.0" fill="#5a3d34"/><circle cx="275.4" cy="399.2" r="12.0" class="s"/><circle cx="385.8" cy="309.7" r="12.0" fill="#4e784b"/><circle cx="385.8" cy="309.7" r="12.0" class="s"/><circle cx="331.1" cy="370.8" r="12.0" fill="#4b5033"/><circle cx="331.1" cy="370.8" r="12.0" class="s"/><circle cx="209.9" cy="342.9" r="12.0" fill="#935769"/><circle cx="209.9" cy="342.9" r="12.0" class="s"/><circle cx="358.7" cy="359.1" r="12.0" fill="#5f7962"/><circle cx="358.7" cy="359.1" r="12.0" class="s"/><circle cx="354.3" cy="352.7" r="12.0" fill="#506643"/><circle cx="354.3" cy="352.7" r="12.0" class="s"/><circle cx="200.9" cy="311.2" r="12.0" fill="#c07a84"/><circle cx="200.9" cy="311.2" r="12.0" class="s"/><circle cx="381.2" cy="373.2" r="12.0" fill="#40725d"/><circle cx="381.2" cy="373.2" r="12.0" class="s"/><circle cx="405.8" cy="259.8" r="12.0" fill="#619965"/><circle cx="405.8" cy="259.8" r="12.0" class="s"/><circle cx="281.2" cy="392.0" r="12.0" fill="#473529"/><circle cx="281.2" cy="392.0" r="12.0" class="s"/><circle cx="327.5" cy="388.9" r="12.0" fill="#52543c"/><circle cx="327.5" cy="388.9" r="12.0" class="s"/><circle cx="363.7" cy="410.1" r="12.0" fill="#325c54"/><circle cx="363.7" cy="410.1" r="12.0" class="s"/><circle cx="306.8" cy="352.4" r="12.0" fill="#5d563c"/><circle cx="306.8" cy="352.4" r="12.0" class="s"/><circle cx="310.9" cy="411.0" r="12.0" fill="#524738"/><circle cx="310.9" cy="411.0" r="12.0" class="s"/><circle cx="351.9" cy="381.1" r="12.0" fill="#4f644c"/><circle cx="351.9" cy="381.1" r="12.0" class="s"/><circle cx="334.4" cy="294.7" r="12.0" fill="#808963"/><circle cx="334.4" cy="294.7" r="12.0" class="s"/><circle cx="269.7" cy="50.3" r="12.0" fill="#f1e9ad"/><circle cx="269.7" cy="50.3" r="12.0" class="s"/><circle cx="297.7" cy="428.5" r="12.0" fill="#513b33"/><circle cx="297.7" cy="428.5" r="12.0" class="s"/><circle cx="254.7" cy="374.4" r="12.0" fill="#7b514c"/><circle cx="254.7" cy="374.4" r="12.0" class="s"/><circle cx="308.6" cy="454.5" r="12.0" fill="#4d3243"/><circle cx="308.6" cy="454.5" r="12.0" class="s"/><circle cx="355.0" cy="338.6" r="12.0" fill="#4a5d38"/><circle cx="355.0" cy="338.6" r="12.0" class="s"/><circle cx="456.1" cy="230.3" r="12.0" fill="#4ab075"/><circle cx="456.1" cy="230.3" r="12.0" class="s"/><circle cx="330.2" cy="318.4" r="12.0" fill="#5e6541"/><circle cx="330.2" cy="318.4" r="12.0" class="s"/><circle cx="246.9" cy="378.5" r="12.0" fill="#6b4243"/><circle cx="246.9" cy="378.5" r="12.0" class="s"/><circle cx="261.4" cy="292.8" r="12.0" fill="#af8e7b"/><circle cx="261.4" cy="292.8" r="12.0" class="s"/><circle cx="104.9" cy="264.4" r="12.0" fill="#e67ab8"/><circle cx="104.9" cy="264.4" r="12.0" class="s"/><circle cx="117.8" cy="253.8" r="12.0" fill="#e784b3"/><circle cx="117.8" cy="253.8" r="12.0" class="s"/><circle cx="294.4" cy="371.3" r="12.0" fill="#493e2c"/><circle cx="294.4" cy="371.3" r="12.0" class="s"/><circle cx="364.0" cy="317.4" r="12.0" fill="#65815a"/><circle cx="364.0" cy="317.4" r="12.0" class="s"/><circle cx="329.9" cy="362.2" r="12.0" fill="#3f4328"/><circle cx="329.9" cy="362.2" r="12.0" class="s"/><circle cx="330.4" cy="408.3" r="12.0" fill="#515445"/><circle cx="330.4" cy="408.3" r="12.0" class="s"/><circle cx="443.0" cy="249.3" r="12.0" fill="#4ea971"/><circle cx="443.0" cy="249.3" r="12.0" class="s"/><circle cx="298.7" cy="345.7" r="12.0" fill="#7f705a"/><circle cx="298.7" cy="345.7" r="12.0" class="s"/><circle cx="331.5" cy="394.1" r="12.0" fill="#626559"/><circle cx="331.5" cy="394.1" r="12.0" class="s"/><circle cx="222.7" cy="404.5" r="12.0" fill="#68254c"/><circle cx="222.7" cy="404.5" r="12.0" class="s"/><circle cx="430.2" cy="267.5" r="12.0" fill="#52a26e"/><circle cx="430.2" cy="267.5" r="12.0" class="s"/><circle cx="228.3" cy="401.9" r="12.0" fill="#682c45"/><circle cx="228.3" cy="401.9" r="12.0" class="s"/><circle cx="342.3" cy="433.8" r="12.0" fill="#394b4a"/><circle cx="342.3" cy="433.8" r="12.0" class="s"/><circle cx="328.6" cy="365.7" r="12.0" fill="#676a50"/><circle cx="328.6" cy="365.7" r="12.0" class="s"/><circle cx="313.2" cy="429.5" r="12.0" fill="#52453e"/><circle cx="313.2" cy="429.5" r="12.0" class="s"/><circle cx="313.8" cy="375.6" r="12.0" fill="#2f2d20"/><circle cx="313.8" cy="375.6" r="12.0" class="s"/><circle cx="289.4" cy="258.6" r="12.0" fill="#a19571"/><circle cx="289.4" cy="258.6" r="12.0" class="s"/><circle cx="302.8" cy="293.4" r="12.0" fill="#716d49"/><circle cx="302.8" cy="293.4" r="12.0" class="s"/><circle cx="261.0" cy="65.1" r="12.0" fill="#f1e4aa"/><circle cx="261.0" cy="65.1" r="12.0" class="s"/><circle cx="354.4" cy="405.6" r="12.0" fill="#476053"/><circle cx="354.4" cy="405.6" r="12.0" class="s"/><circle cx="276.9" cy="377.2" r="12.0" fill="#7e5e53"/><circle cx="276.9" cy="377.2" r="12.0" class="s"/><circle cx="310.0" cy="346.6" r="12.0" fill="#4a472e"/><circle cx="310.0" cy="346.6" r="12.0" class="s"/><circle cx="417.7" cy="284.9" r="12.0" fill="#559b6b"/><circle cx="417.7" cy="284.9" r="12.0" class="s"/><circle cx="301.0" cy="444.2" r="12.0" fill="#513739"/><circle cx="301.0" cy="444.2" r="12.0" class="s"/><circle cx="237.8" cy="393.6" r="12.0" fill="#69373f"/><circle cx="237.8" cy="393.6" r="12.0" class="s"/><circle cx="259.7" cy="402.2" r="12.0" fill="#7d4c4c"/><circle cx="259.7" cy="402.2" r="12.0" class="s"/><circle cx="220.3" cy="210.5" r="12.1" fill="#d8ab96"/><circle cx="220.3" cy="210.5" r="12.1" class="s"/><circle cx="309.7" cy="421.5" r="12.1" fill="#635250"/><circle cx="309.7" cy="421.5" r="12.1" class="s"/><circle cx="295.5" cy="450.7" r="12.1" fill="#512d36"/><circle cx="295.5" cy="450.7" r="12.1" class="s"/><circle cx="282.2" cy="392.7" r="12.1" fill="#473523"/><circle cx="282.2" cy="392.7" r="12.1" class="s"/><circle cx="280.4" cy="330.4" r="12.1" fill="#6f5d44"/><circle cx="280.4" cy="330.4" r="12.1" class="s"/><circle cx="405.6" cy="301.5" r="12.1" fill="#579467"/><circle cx="405.6" cy="301.5" r="12.1" class="s"/><circle cx="334.4" cy="336.0" r="12.1" fill="#646c47"/><circle cx="334.4" cy="336.0" r="12.1" class="s"/><circle cx="225.9" cy="406.7" r="12.1" fill="#672543"/><circle cx="225.9" cy="406.7" r="12.1" class="s"/><circle cx="326.9" cy="449.9" r="12.1" fill="#3c3b43"/><circle cx="326.9" cy="449.9" r="12.1" class="s"/><circle cx="234.2" cy="334.4" r="12.1" fill="#ad7672"/><circle cx="234.2" cy="334.4" r="12.1" class="s"/><circle cx="335.5" cy="117.7" r="12.1" fill="#c6d795"/><circle cx="335.5" cy="117.7" r="12.1" class="s"/><circle cx="394.3" cy="170.4" r="12.1" fill="#99c685"/><circle cx="394.3" cy="170.4" r="12.1" class="s"/><circle cx="332.7" cy="430.5" r="12.1" fill="#4a4e4a"/><circle cx="332.7" cy="430.5" r="12.1" class="s"/><circle cx="120.5" cy="255.4" r="12.1" fill="#e684af"/><circle cx="120.5" cy="255.4" r="12.1" class="s"/><circle cx="276.9" cy="400.8" r="12.1" fill="#593d2b"/><circle cx="276.9" cy="400.8" r="12.1" class="s"/><circle cx="367.7" cy="290.8" r="12.1" fill="#647f4e"/><circle cx="367.7" cy="290.8" r="12.1" class="s"/><circle cx="261.2" cy="361.3" r="12.1" fill="#6c4d3f"/><circle cx="261.2" cy="361.3" r="12.1" class="s"/><circle cx="320.0" cy="457.0" r="12.1" fill="#3d313e"/><circle cx="320.0" cy="457.0" r="12.1" class="s"/><circle cx="231.4" cy="404.0" r="12.1" fill="#672c3c"/><circle cx="231.4" cy="404.0" r="12.1" class="s"/><circle cx="379.6" cy="190.8" r="12.1" fill="#9abe81"/><circle cx="379.6" cy="190.8" r="12.1" class="s"/><circle cx="166.6" cy="287.1" r="12.1" fill="#d37f92"/><circle cx="166.6" cy="287.1" r="12.1" class="s"/><circle cx="140.9" cy="319.4" r="12.1" fill="#d06493"/><circle cx="140.9" cy="319.4" r="12.1" class="s"/><circle cx="382.7" cy="332.3" r="12.1" fill="#5b8661"/><circle cx="382.7" cy="332.3" r="12.1" class="s"/><circle cx="295.4" cy="372.0" r="12.1" fill="#483e27"/><circle cx="295.4" cy="372.0" r="12.1" class="s"/><circle cx="277.1" cy="418.5" r="12.1" fill="#613e33"/><circle cx="277.1" cy="418.5" r="12.1" class="s"/><circle cx="180.1" cy="344.9" r="12.1" fill="#bd617b"/><circle cx="180.1" cy="344.9" r="12.1" class="s"/><circle cx="249.3" cy="380.1" r="12.1" fill="#6a423b"/><circle cx="249.3" cy="380.1" r="12.1" class="s"/><circle cx="249.7" cy="84.4" r="12.1" fill="#f0dca7"/><circle cx="249.7" cy="84.4" r="12.1" class="s"/><circle cx="365.5" cy="210.6" r="12.1" fill="#9ab67e"/><circle cx="365.5" cy="210.6" r="12.1" class="s"/><circle cx="321.0" cy="139.7" r="12.1" fill="#c6cf92"/><circle cx="321.0" cy="139.7" r="12.1" class="s"/><circle cx="253.9" cy="313.2" r="12.1" fill="#9f7966"/><circle cx="253.9" cy="313.2" r="12.1" class="s"/><circle cx="239.8" cy="394.9" r="12.1" fill="#693738"/><circle cx="239.8" cy="394.9" r="12.1" class="s"/><circle cx="233.0" cy="320.0" r="12.1" fill="#95685f"/><circle cx="233.0" cy="320.0" r="12.1" class="s"/><circle cx="317.2" cy="447.5" r="12.1" fill="#4c3d43"/><circle cx="317.2" cy="447.5" r="12.1" class="s"/><circle cx="290.7" cy="399.2" r="12.1" fill="#624b37"/><circle cx="290.7" cy="399.2" r="12.1" class="s"/><circle cx="352.0" cy="229.7" r="12.1" fill="#9baf7b"/><circle cx="352.0" cy="229.7" r="12.1" class="s"/><circle cx="431.5" cy="202.9" r="12.1" fill="#74ba79"/><circle cx="431.5" cy="202.9" r="12.1" class="s"/><circle cx="233.1" cy="405.3" r="12.1" fill="#672c36"/><circle cx="233.1" cy="405.3" r="12.1" class="s"/><circle cx="309.1" cy="352.7" r="12.1" fill="#5c5635"/><circle cx="309.1" cy="352.7" r="12.1" class="s"/><circle cx="238.7" cy="213.5" r="12.1" fill="#c2a182"/><circle cx="238.7" cy="213.5" r="12.1" class="s"/><circle cx="289.4" cy="382.4" r="12.1" fill="#5b482d"/><circle cx="289.4" cy="382.4" r="12.1" class="s"/><circle cx="361.6" cy="359.8" r="12.1" fill="#5e795b"/><circle cx="361.6" cy="359.8" r="12.1" class="s"/><circle cx="338.9" cy="248.0" r="12.1" fill="#9ba778"/><circle cx="338.9" cy="248.0" r="12.1" class="s"/><circle cx="212.7" cy="367.3" r="12.1" fill="#aa5e6a"/><circle cx="212.7" cy="367.3" r="12.1" class="s"/><circle cx="310.2" cy="455.0" r="12.1" fill="#4c323e"/><circle cx="310.2" cy="455.0" r="12.1" class="s"/><circle cx="409.4" cy="259.3" r="12.1" fill="#60995d"/><circle cx="409.4" cy="259.3" r="12.1" class="s"/><circle cx="122.5" cy="341.7" r="12.1" fill="#ce4895"/><circle cx="122.5" cy="341.7" r="12.1" class="s"/><circle cx="417.2" cy="222.6" r="12.1" fill="#76b376"/><circle cx="417.2" cy="222.6" r="12.1" class="s"/><circle cx="145.7" cy="327.4" r="12.1" fill="#ba5690"/><circle cx="145.7" cy="327.4" r="12.1" class="s"/><circle cx="308.0" cy="375.0" r="12.1" fill="#63593b"/><circle cx="308.0" cy="375.0" r="12.1" class="s"/><circle cx="171.7" cy="304.1" r="12.1" fill="#bc6d85"/><circle cx="171.7" cy="304.1" r="12.1" class="s"/><circle cx="307.0" cy="161.0" r="12.1" fill="#c6c68f"/><circle cx="307.0" cy="161.0" r="12.1" class="s"/><circle cx="295.8" cy="372.3" r="12.1" fill="#483e25"/><circle cx="295.8" cy="372.3" r="12.1" class="s"/><circle cx="366.8" cy="317.5" r="12.1" fill="#658153"/><circle cx="366.8" cy="317.5" r="12.1" class="s"/><circle cx="198.3" cy="364.9" r="12.1" fill="#914662"/><circle cx="198.3" cy="364.9" r="12.1" class="s"/><circle cx="403.5" cy="241.5" r="12.1" fill="#78ac73"/><circle cx="403.5" cy="241.5" r="12.1" class="s"/><circle cx="234.5" cy="406.2" r="12.1" fill="#662c30"/><circle cx="234.5" cy="406.2" r="12.1" class="s"/><circle cx="330.6" cy="366.3" r="12.1" fill="#666a4a"/><circle cx="330.6" cy="366.3" r="12.1" class="s"/><circle cx="314.7" cy="282.6" r="12.1" fill="#9b9772"/><circle cx="314.7" cy="282.6" r="12.1" class="s"/><circle cx="390.2" cy="259.8" r="12.1" fill="#79a46f"/><circle cx="390.2" cy="259.8" r="12.1" class="s"/><circle cx="241.4" cy="98.4" r="12.1" fill="#efd7a5"/><circle cx="241.4" cy="98.4" r="12.1" class="s"/><circle cx="308.2" cy="396.2" r="12.1" fill="#665944"/><circle cx="308.2" cy="396.2" r="12.1" class="s"/><circle cx="290.3" cy="419.9" r="12.2" fill="#66483e"/><circle cx="290.3" cy="419.9" r="12.2" class="s"/><circle cx="257.1" cy="376.5" r="12.2" fill="#7a5143"/><circle cx="257.1" cy="376.5" r="12.2" class="s"/><circle cx="377.4" cy="277.4" r="12.2" fill="#7a9d6c"/><circle cx="377.4" cy="277.4" r="12.2" class="s"/><circle cx="277.8" cy="436.4" r="12.2" fill="#653939"/><circle cx="277.8" cy="436.4" r="12.2" class="s"/><circle cx="272.3" cy="443.7" r="12.2" fill="#642f36"/><circle cx="272.3" cy="443.7" r="12.2" class="s"/><circle cx="241.2" cy="395.9" r="12.2" fill="#683632"/><circle cx="241.2" cy="395.9" r="12.2" class="s"/><circle cx="336.3" cy="336.0" r="12.2" fill="#646c41"/><circle cx="336.3" cy="336.0" r="12.2" class="s"/><circle cx="333.9" cy="395.0" r="12.2" fill="#616552"/><circle cx="333.9" cy="395.0" r="12.2" class="s"/><circle cx="293.6" cy="181.6" r="12.2" fill="#c5be8b"/><circle cx="293.6" cy="181.6" r="12.2" class="s"/><circle cx="184.7" cy="376.5" r="12.2" fill="#8f356a"/><circle cx="184.7" cy="376.5" r="12.2" class="s"/><circle cx="274.0" cy="351.0" r="12.2" fill="#7c6047"/><circle cx="274.0" cy="351.0" r="12.2" class="s"/><circle cx="292.8" cy="314.0" r="12.2" fill="#9b886c"/><circle cx="292.8" cy="314.0" r="12.2" class="s"/><circle cx="353.3" cy="310.2" r="12.2" fill="#7c8e66"/><circle cx="353.3" cy="310.2" r="12.2" class="s"/><circle cx="333.7" cy="318.4" r="12.2" fill="#5e6539"/><circle cx="333.7" cy="318.4" r="12.2" class="s"/><circle cx="199.1" cy="245.3" r="12.2" fill="#d6998f"/><circle cx="199.1" cy="245.3" r="12.2" class="s"/><circle cx="250.9" cy="381.2" r="12.2" fill="#6a4134"/><circle cx="250.9" cy="381.2" r="12.2" class="s"/><circle cx="301.7" cy="309.9" r="12.2" fill="#7e754e"/><circle cx="301.7" cy="309.9" r="12.2" class="s"/><circle cx="310.1" cy="352.8" r="12.2" fill="#5c5631"/><circle cx="310.1" cy="352.8" r="12.2" class="s"/><circle cx="191.1" cy="400.7" r="12.2" fill="#a5355e"/><circle cx="191.1" cy="400.7" r="12.2" class="s"/><circle cx="165.6" cy="368.4" r="12.2" fill="#ba4873"/><circle cx="165.6" cy="368.4" r="12.2" class="s"/><circle cx="331.5" cy="339.9" r="12.2" fill="#7d8060"/><circle cx="331.5" cy="339.9" r="12.2" class="s"/><circle cx="311.5" cy="422.5" r="12.2" fill="#62524a"/><circle cx="311.5" cy="422.5" r="12.2" class="s"/><circle cx="280.7" cy="201.3" r="12.2" fill="#c5b588"/><circle cx="280.7" cy="201.3" r="12.2" class="s"/><circle cx="264.6" cy="354.8" r="12.2" fill="#997163"/><circle cx="264.6" cy="354.8" r="12.2" class="s"/><circle cx="370.2" cy="290.4" r="12.2" fill="#637f47"/><circle cx="370.2" cy="290.4" r="12.2" class="s"/><circle cx="335.1" cy="261.6" r="12.2" fill="#7f8a55"/><circle cx="335.1" cy="261.6" r="12.2" class="s"/><circle cx="124.6" cy="257.9" r="12.2" fill="#e684a8"/><circle cx="124.6" cy="257.9" r="12.2" class="s"/><circle cx="216.7" cy="347.1" r="12.2" fill="#925759"/><circle cx="216.7" cy="347.1" r="12.2" class="s"/><circle cx="263.1" cy="362.5" r="12.2" fill="#6c4d37"/><circle cx="263.1" cy="362.5" r="12.2" class="s"/><circle cx="242.6" cy="396.9" r="12.2" fill="#673629"/><circle cx="242.6" cy="396.9" r="12.2" class="s"/><circle cx="303.1" cy="378.3" r="12.2" fill="#7d6b58"/><circle cx="303.1" cy="378.3" r="12.2" class="s"/><circle cx="295.7" cy="441.5" r="12.2" fill="#624043"/><circle cx="295.7" cy="441.5" r="12.2" class="s"/><circle cx="242.3" cy="387.2" r="12.2" fill="#975b5b"/><circle cx="242.3" cy="387.2" r="12.2" class="s"/><circle cx="288.6" cy="449.9" r="12.2" fill="#61343f"/><circle cx="288.6" cy="449.9" r="12.2" class="s"/><circle cx="249.1" cy="423.0" r="12.2" fill="#7a3c3f"/><circle cx="249.1" cy="423.0" r="12.2" class="s"/><circle cx="312.0" cy="347.8" r="12.2" fill="#4a4727"/><circle cx="312.0" cy="347.8" r="12.2" class="s"/><circle cx="226.9" cy="409.9" r="12.2" fill="#954555"/><circle cx="226.9" cy="409.9" r="12.2" class="s"/><circle cx="280.5" cy="408.6" r="12.2" fill="#7c5650"/><circle cx="280.5" cy="408.6" r="12.2" class="s"/><circle cx="228.0" cy="121.1" r="12.2" fill="#eecda2"/><circle cx="228.0" cy="121.1" r="12.2" class="s"/><circle cx="261.7" cy="405.0" r="12.2" fill="#7b4c43"/><circle cx="261.7" cy="405.0" r="12.2" class="s"/><circle cx="220.0" cy="420.0" r="12.2" fill="#933651"/><circle cx="220.0" cy="420.0" r="12.2" class="s"/><circle cx="251.9" cy="381.9" r="12.2" fill="#69412e"/><circle cx="251.9" cy="381.9" r="12.2" class="s"/><circle cx="264.7" cy="429.8" r="12.2" fill="#7b434a"/><circle cx="264.7" cy="429.8" r="12.2" class="s"/><circle cx="117.1" cy="353.1" r="12.2" fill="#cc308f"/><circle cx="117.1" cy="353.1" r="12.2" class="s"/><circle cx="279.6" cy="379.3" r="12.2" fill="#7d5e49"/><circle cx="279.6" cy="379.3" r="12.2" class="s"/><circle cx="244.9" cy="398.7" r="12.2" fill="#774237"/><circle cx="244.9" cy="398.7" r="12.2" class="s"/><circle cx="256.6" cy="238.3" r="12.2" fill="#c3a482"/><circle cx="256.6" cy="238.3" r="12.2" class="s"/><circle cx="302.5" cy="347.0" r="12.2" fill="#7e704f"/><circle cx="302.5" cy="347.0" r="12.2" class="s"/><circle cx="282.7" cy="331.9" r="12.2" fill="#6e5d3b"/><circle cx="282.7" cy="331.9" r="12.2" class="s"/><circle cx="235.7" cy="414.4" r="12.2" fill="#753430"/><circle cx="235.7" cy="414.4" r="12.2" class="s"/><circle cx="190.3" cy="380.3" r="12.2" fill="#8e365d"/><circle cx="190.3" cy="380.3" r="12.2" class="s"/><circle cx="335.3" cy="318.3" r="12.3" fill="#5d6434"/><circle cx="335.3" cy="318.3" r="12.3" class="s"/><circle cx="296.1" cy="226.1" r="12.3" fill="#9a9560"/><circle cx="296.1" cy="226.1" r="12.3" class="s"/><circle cx="252.3" cy="382.2" r="12.3" fill="#69412a"/><circle cx="252.3" cy="382.2" r="12.3" class="s"/><circle cx="339.9" cy="294.9" r="12.3" fill="#7f8957"/><circle cx="339.9" cy="294.9" r="12.3" class="s"/><circle cx="162.5" cy="216.4" r="12.3" fill="#e99f9f"/><circle cx="162.5" cy="216.4" r="12.3" class="s"/><circle cx="258.6" cy="378.0" r="12.3" fill="#79513b"/><circle cx="258.6" cy="378.0" r="12.3" class="s"/><circle cx="203.7" cy="368.4" r="12.3" fill="#904654"/><circle cx="203.7" cy="368.4" r="12.3" class="s"/><circle cx="127.4" cy="344.4" r="12.3" fill="#cd488a"/><circle cx="127.4" cy="344.4" r="12.3" class="s"/><circle cx="245.3" cy="399.6" r="12.3" fill="#774232"/><circle cx="245.3" cy="399.6" r="12.3" class="s"/><circle cx="384.8" cy="233.8" r="12.3" fill="#7ea260"/><circle cx="384.8" cy="233.8" r="12.3" class="s"/><circle cx="244.0" cy="432.8" r="12.3" fill="#773037"/><circle cx="244.0" cy="432.8" r="12.3" class="s"/><circle cx="145.9" cy="322.6" r="12.3" fill="#d06488"/><circle cx="145.9" cy="322.6" r="12.3" class="s"/><circle cx="234.9" cy="271.9" r="12.3" fill="#c2937c"/><circle cx="234.9" cy="271.9" r="12.3" class="s"/><circle cx="264.2" cy="363.3" r="12.3" fill="#6b4d30"/><circle cx="264.2" cy="363.3" r="12.3" class="s"/><circle cx="249.7" cy="424.6" r="12.3" fill="#793c3a"/><circle cx="249.7" cy="424.6" r="12.3" class="s"/><circle cx="264.2" cy="278.7" r="12.3" fill="#987e59"/><circle cx="264.2" cy="278.7" r="12.3" class="s"/><circle cx="305.8" cy="295.2" r="12.3" fill="#706c3f"/><circle cx="305.8" cy="295.2" r="12.3" class="s"/><circle cx="186.7" cy="387.2" r="12.3" fill="#8d2a59"/><circle cx="186.7" cy="387.2" r="12.3" class="s"/><circle cx="262.5" cy="406.3" r="12.3" fill="#7b4c3e"/><circle cx="262.5" cy="406.3" r="12.3" class="s"/><circle cx="436.1" cy="202.2" r="12.3" fill="#74ba6f"/><circle cx="436.1" cy="202.2" r="12.3" class="s"/><circle cx="276.2" cy="352.1" r="12.3" fill="#7b603e"/><circle cx="276.2" cy="352.1" r="12.3" class="s"/><circle cx="421.6" cy="222.1" r="12.3" fill="#75b36c"/><circle cx="421.6" cy="222.1" r="12.3" class="s"/><circle cx="94.7" cy="290.3" r="12.3" fill="#e366af"/><circle cx="94.7" cy="290.3" r="12.3" class="s"/><circle cx="407.5" cy="241.3" r="12.3" fill="#77ab69"/><circle cx="407.5" cy="241.3" r="12.3" class="s"/><circle cx="128.4" cy="260.2" r="12.3" fill="#e683a1"/><circle cx="128.4" cy="260.2" r="12.3" class="s"/><circle cx="394.0" cy="259.7" r="12.3" fill="#78a466"/><circle cx="394.0" cy="259.7" r="12.3" class="s"/><circle cx="380.9" cy="277.5" r="12.3" fill="#799d63"/><circle cx="380.9" cy="277.5" r="12.3" class="s"/><circle cx="202.9" cy="273.3" r="12.3" fill="#be8377"/><circle cx="202.9" cy="273.3" r="12.3" class="s"/><circle cx="259.3" cy="378.7" r="12.3" fill="#795135"/><circle cx="259.3" cy="378.7" r="12.3" class="s"/><circle cx="280.8" cy="380.3" r="12.3" fill="#7c5e42"/><circle cx="280.8" cy="380.3" r="12.3" class="s"/><circle cx="264.7" cy="363.6" r="12.3" fill="#6b4d2b"/><circle cx="264.7" cy="363.6" r="12.3" class="s"/><circle cx="356.4" cy="310.6" r="12.3" fill="#7b8e5e"/><circle cx="356.4" cy="310.6" r="12.3" class="s"/><circle cx="237.0" cy="322.5" r="12.3" fill="#946752"/><circle cx="237.0" cy="322.5" r="12.3" class="s"/><circle cx="194.6" cy="383.3" r="12.3" fill="#8d364f"/><circle cx="194.6" cy="383.3" r="12.3" class="s"/><circle cx="334.1" cy="340.6" r="12.3" fill="#7c8058"/><circle cx="334.1" cy="340.6" r="12.3" class="s"/><circle cx="171.6" cy="290.3" r="12.3" fill="#d27f86"/><circle cx="171.6" cy="290.3" r="12.3" class="s"/><circle cx="305.0" cy="379.4" r="12.3" fill="#7c6b50"/><circle cx="305.0" cy="379.4" r="12.3" class="s"/><circle cx="282.0" cy="410.0" r="12.3" fill="#7b5649"/><circle cx="282.0" cy="410.0" r="12.3" class="s"/><circle cx="206.8" cy="315.4" r="12.3" fill="#bf7a73"/><circle cx="206.8" cy="315.4" r="12.3" class="s"/><circle cx="265.8" cy="431.4" r="12.3" fill="#7a4343"/><circle cx="265.8" cy="431.4" r="12.3" class="s"/><circle cx="220.1" cy="349.3" r="12.3" fill="#92574e"/><circle cx="220.1" cy="349.3" r="12.3" class="s"/><circle cx="304.2" cy="347.6" r="12.3" fill="#7d7048"/><circle cx="304.2" cy="347.6" r="12.3" class="s"/><circle cx="258.6" cy="440.9" r="12.3" fill="#783640"/><circle cx="258.6" cy="440.9" r="12.3" class="s"/><circle cx="190.5" cy="389.9" r="12.3" fill="#8c2a4c"/><circle cx="190.5" cy="389.9" r="12.3" class="s"/><circle cx="97.0" cy="291.7" r="12.4" fill="#e366ab"/><circle cx="97.0" cy="291.7" r="12.4" class="s"/><circle cx="206.6" cy="370.4" r="12.4" fill="#8f4649"/><circle cx="206.6" cy="370.4" r="12.4" class="s"/><circle cx="121.4" cy="355.5" r="12.4" fill="#cb3184"/><circle cx="121.4" cy="355.5" r="12.4" class="s"/><circle cx="202.7" cy="163.7" r="12.4" fill="#ecbb9b"/><circle cx="202.7" cy="163.7" r="12.4" class="s"/><circle cx="197.1" cy="385.1" r="12.4" fill="#8c3646"/><circle cx="197.1" cy="385.1" r="12.4" class="s"/><circle cx="277.1" cy="352.5" r="12.4" fill="#7b6038"/><circle cx="277.1" cy="352.5" r="12.4" class="s"/><circle cx="284.2" cy="332.8" r="12.4" fill="#6e5c33"/><circle cx="284.2" cy="332.8" r="12.4" class="s"/><circle cx="372.4" cy="145.1" r="12.4" fill="#b0ce82"/><circle cx="372.4" cy="145.1" r="12.4" class="s"/><circle cx="192.8" cy="391.6" r="12.4" fill="#8b2a44"/><circle cx="192.8" cy="391.6" r="12.4" class="s"/><circle cx="357.3" cy="166.4" r="12.4" fill="#b0c67f"/><circle cx="357.3" cy="166.4" r="12.4" class="s"/><circle cx="342.7" cy="187.0" r="12.4" fill="#b0be7c"/><circle cx="342.7" cy="187.0" r="12.4" class="s"/><circle cx="328.7" cy="207.0" r="12.4" fill="#b0b679"/><circle cx="328.7" cy="207.0" r="12.4" class="s"/><circle cx="342.4" cy="294.9" r="12.4" fill="#7e894f"/><circle cx="342.4" cy="294.9" r="12.4" class="s"/><circle cx="315.2" cy="226.2" r="12.4" fill="#afae76"/><circle cx="315.2" cy="226.2" r="12.4" class="s"/><circle cx="98.5" cy="292.6" r="12.4" fill="#e366a9"/><circle cx="98.5" cy="292.6" r="12.4" class="s"/><circle cx="137.7" cy="349.6" r="12.4" fill="#b73f87"/><circle cx="137.7" cy="349.6" r="12.4" class="s"/><circle cx="184.6" cy="349.9" r="12.4" fill="#bc616b"/><circle cx="184.6" cy="349.9" r="12.4" class="s"/><circle cx="290.3" cy="262.3" r="12.4" fill="#af9d70"/><circle cx="290.3" cy="262.3" r="12.4" class="s"/><circle cx="258.3" cy="315.2" r="12.4" fill="#9e7958"/><circle cx="258.3" cy="315.2" r="12.4" class="s"/><circle cx="267.7" cy="295.2" r="12.4" fill="#ae8d6b"/><circle cx="267.7" cy="295.2" r="12.4" class="s"/><circle cx="194.7" cy="392.9" r="12.4" fill="#8a2b3b"/><circle cx="194.7" cy="392.9" r="12.4" class="s"/><circle cx="238.8" cy="338.0" r="12.4" fill="#ab7563"/><circle cx="238.8" cy="338.0" r="12.4" class="s"/><circle cx="216.0" cy="372.0" r="12.4" fill="#a95e5c"/><circle cx="216.0" cy="372.0" r="12.4" class="s"/><circle cx="199.0" cy="386.4" r="12.4" fill="#8c363d"/><circle cx="199.0" cy="386.4" r="12.4" class="s"/><circle cx="193.2" cy="406.6" r="12.4" fill="#a43652"/><circle cx="193.2" cy="406.6" r="12.4" class="s"/><circle cx="295.8" cy="259.6" r="12.4" fill="#a19461"/><circle cx="295.8" cy="259.6" r="12.4" class="s"/><circle cx="196.0" cy="393.8" r="12.4" fill="#892b34"/><circle cx="196.0" cy="393.8" r="12.4" class="s"/><circle cx="99.9" cy="293.5" r="12.4" fill="#e366a6"/><circle cx="99.9" cy="293.5" r="12.4" class="s"/><circle cx="131.4" cy="347.4" r="12.4" fill="#cc4880"/><circle cx="131.4" cy="347.4" r="12.4" class="s"/><circle cx="196.5" cy="394.2" r="12.4" fill="#892b30"/><circle cx="196.5" cy="394.2" r="12.4" class="s"/><circle cx="169.2" cy="374.0" r="12.4" fill="#b84864"/><circle cx="169.2" cy="374.0" r="12.4" class="s"/><circle cx="221.4" cy="424.6" r="12.4" fill="#923647"/><circle cx="221.4" cy="424.6" r="12.4" class="s"/><circle cx="308.8" cy="87.7" r="12.4" fill="#dce094"/><circle cx="308.8" cy="87.7" r="12.4" class="s"/><circle cx="228.6" cy="414.1" r="12.4" fill="#93464a"/><circle cx="228.6" cy="414.1" r="12.4" class="s"/><circle cx="208.6" cy="371.8" r="12.4" fill="#8e4640"/><circle cx="208.6" cy="371.8" r="12.4" class="s"/><circle cx="388.3" cy="233.2" r="12.4" fill="#7da257"/><circle cx="388.3" cy="233.2" r="12.4" class="s"/><circle cx="284.8" cy="333.2" r="12.4" fill="#6e5c2d"/><circle cx="284.8" cy="333.2" r="12.4" class="s"/><circle cx="200.3" cy="387.3" r="12.4" fill="#8b3635"/><circle cx="200.3" cy="387.3" r="12.4" class="s"/><circle cx="244.8" cy="390.8" r="12.4" fill="#965b50"/><circle cx="244.8" cy="390.8" r="12.4" class="s"/><circle cx="340.8" cy="194.4" r="12.4" fill="#a2b069"/><circle cx="340.8" cy="194.4" r="12.4" class="s"/><circle cx="162.3" cy="384.7" r="12.4" fill="#b63560"/><circle cx="162.3" cy="384.7" r="12.4" class="s"/><circle cx="200.8" cy="387.7" r="12.5" fill="#8a3730"/><circle cx="200.8" cy="387.7" r="12.5" class="s"/><circle cx="180.8" cy="309.8" r="12.5" fill="#bb6d70"/><circle cx="180.8" cy="309.8" r="12.5" class="s"/><circle cx="268.1" cy="357.5" r="12.5" fill="#987157"/><circle cx="268.1" cy="357.5" r="12.5" class="s"/><circle cx="340.0" cy="261.6" r="12.5" fill="#7f8949"/><circle cx="340.0" cy="261.6" r="12.5" class="s"/><circle cx="294.1" cy="110.9" r="12.5" fill="#dbd790"/><circle cx="294.1" cy="110.9" r="12.5" class="s"/><circle cx="222.4" cy="350.9" r="12.5" fill="#915643"/><circle cx="222.4" cy="350.9" r="12.5" class="s"/><circle cx="149.9" cy="325.8" r="12.5" fill="#cf647d"/><circle cx="149.9" cy="325.8" r="12.5" class="s"/><circle cx="306.5" cy="310.5" r="12.5" fill="#7d743c"/><circle cx="306.5" cy="310.5" r="12.5" class="s"/><circle cx="297.7" cy="315.6" r="12.5" fill="#99885e"/><circle cx="297.7" cy="315.6" r="12.5" class="s"/><circle cx="101.9" cy="294.8" r="12.5" fill="#e366a3"/><circle cx="101.9" cy="294.8" r="12.5" class="s"/><circle cx="206.1" cy="399.2" r="12.5" fill="#953e40"/><circle cx="206.1" cy="399.2" r="12.5" class="s"/><circle cx="320.7" cy="283.5" r="12.5" fill="#9a9763"/><circle cx="320.7" cy="283.5" r="12.5" class="s"/><circle cx="279.9" cy="133.2" r="12.5" fill="#dace8d"/><circle cx="279.9" cy="133.2" r="12.5" class="s"/><circle cx="209.9" cy="372.8" r="12.5" fill="#8d4637"/><circle cx="209.9" cy="372.8" r="12.5" class="s"/><circle cx="125.0" cy="358.4" r="12.5" fill="#ca327a"/><circle cx="125.0" cy="358.4" r="12.5" class="s"/><circle cx="307.9" cy="296.5" r="12.5" fill="#706c35"/><circle cx="307.9" cy="296.5" r="12.5" class="s"/><circle cx="346.1" cy="248.2" r="12.5" fill="#9aa668"/><circle cx="346.1" cy="248.2" r="12.5" class="s"/><circle cx="359.8" cy="229.5" r="12.5" fill="#99ae6b"/><circle cx="359.8" cy="229.5" r="12.5" class="s"/><circle cx="200.7" cy="409.6" r="12.5" fill="#923138"/><circle cx="200.7" cy="409.6" r="12.5" class="s"/><circle cx="239.6" cy="324.3" r="12.5" fill="#946746"/><circle cx="239.6" cy="324.3" r="12.5" class="s"/><circle cx="374.0" cy="210.0" r="12.5" fill="#99b66e"/><circle cx="374.0" cy="210.0" r="12.5" class="s"/><circle cx="210.5" cy="373.2" r="12.5" fill="#8d4632"/><circle cx="210.5" cy="373.2" r="12.5" class="s"/><circle cx="266.3" cy="154.8" r="12.5" fill="#d9c58a"/><circle cx="266.3" cy="154.8" r="12.5" class="s"/><circle cx="388.9" cy="189.9" r="12.5" fill="#99be71"/><circle cx="388.9" cy="189.9" r="12.5" class="s"/><circle cx="404.3" cy="169.1" r="12.5" fill="#98c674"/><circle cx="404.3" cy="169.1" r="12.5" class="s"/><circle cx="206.5" cy="400.7" r="12.5" fill="#943f3a"/><circle cx="206.5" cy="400.7" r="12.5" class="s"/><circle cx="145.2" cy="354.7" r="12.5" fill="#b63f75"/><circle cx="145.2" cy="354.7" r="12.5" class="s"/><circle cx="222.0" cy="426.7" r="12.5" fill="#913741"/><circle cx="222.0" cy="426.7" r="12.5" class="s"/><circle cx="288.1" cy="146.4" r="12.5" fill="#c5be79"/><circle cx="288.1" cy="146.4" r="12.5" class="s"/><circle cx="229.3" cy="416.1" r="12.5" fill="#924644"/><circle cx="229.3" cy="416.1" r="12.5" class="s"/><circle cx="253.1" cy="175.4" r="12.5" fill="#d9bc87"/><circle cx="253.1" cy="175.4" r="12.5" class="s"/><circle cx="134.9" cy="264.2" r="12.5" fill="#e58394"/><circle cx="134.9" cy="264.2" r="12.5" class="s"/><circle cx="105.1" cy="296.8" r="12.5" fill="#e2669d"/><circle cx="105.1" cy="296.8" r="12.5" class="s"/><circle cx="223.8" cy="351.9" r="12.5" fill="#905639"/><circle cx="223.8" cy="351.9" r="12.5" class="s"/><circle cx="245.9" cy="392.5" r="12.5" fill="#955b49"/><circle cx="245.9" cy="392.5" r="12.5" class="s"/><circle cx="134.7" cy="350.5" r="12.6" fill="#cb4975"/><circle cx="134.7" cy="350.5" r="12.6" class="s"/><circle cx="219.6" cy="380.8" r="12.6" fill="#97513d"/><circle cx="219.6" cy="380.8" r="12.6" class="s"/><circle cx="87.2" cy="311.0" r="12.6" fill="#e152a8"/><circle cx="87.2" cy="311.0" r="12.6" class="s"/><circle cx="276.1" cy="54.2" r="12.6" fill="#f1e99b"/><circle cx="276.1" cy="54.2" r="12.6" class="s"/><circle cx="267.5" cy="280.8" r="12.6" fill="#977e4b"/><circle cx="267.5" cy="280.8" r="12.6" class="s"/><circle cx="168.8" cy="220.3" r="12.6" fill="#e99f91"/><circle cx="168.8" cy="220.3" r="12.6" class="s"/><circle cx="228.6" cy="214.1" r="12.6" fill="#d7ab81"/><circle cx="228.6" cy="214.1" r="12.6" class="s"/><circle cx="269.7" cy="358.7" r="12.6" fill="#97714f"/><circle cx="269.7" cy="358.7" r="12.6" class="s"/><circle cx="308.8" cy="297.0" r="12.6" fill="#706c2f"/><circle cx="308.8" cy="297.0" r="12.6" class="s"/><circle cx="342.2" cy="261.5" r="12.6" fill="#7e8941"/><circle cx="342.2" cy="261.5" r="12.6" class="s"/><circle cx="245.1" cy="217.5" r="12.6" fill="#c2a06f"/><circle cx="245.1" cy="217.5" r="12.6" class="s"/><circle cx="194.4" cy="411.3" r="12.6" fill="#a23748"/><circle cx="194.4" cy="411.3" r="12.6" class="s"/><circle cx="224.3" cy="352.3" r="12.6" fill="#905633"/><circle cx="224.3" cy="352.3" r="12.6" class="s"/><circle cx="201.7" cy="400.3" r="12.6" fill="#a4474b"/><circle cx="201.7" cy="400.3" r="12.6" class="s"/><circle cx="128.0" cy="361.5" r="12.6" fill="#c93371"/><circle cx="128.0" cy="361.5" r="12.6" class="s"/><circle cx="261.2" cy="316.5" r="12.6" fill="#9d794c"/><circle cx="261.2" cy="316.5" r="12.6" class="s"/><circle cx="299.9" cy="316.4" r="12.6" fill="#988855"/><circle cx="299.9" cy="316.4" r="12.6" class="s"/><circle cx="206.3" cy="249.1" r="12.6" fill="#d5997c"/><circle cx="206.3" cy="249.1" r="12.6" class="s"/><circle cx="218.1" cy="375.7" r="12.6" fill="#a75e50"/><circle cx="218.1" cy="375.7" r="12.6" class="s"/><circle cx="108.0" cy="298.7" r="12.6" fill="#e26697"/><circle cx="108.0" cy="298.7" r="12.6" class="s"/><circle cx="238.4" cy="352.6" r="12.6" fill="#9a6540"/><circle cx="238.4" cy="352.6" r="12.6" class="s"/><circle cx="164.4" cy="390.3" r="12.6" fill="#b43654"/><circle cx="164.4" cy="390.3" r="12.6" class="s"/><circle cx="208.3" cy="276.7" r="12.6" fill="#be8367"/><circle cx="208.3" cy="276.7" r="12.6" class="s"/><circle cx="151.0" cy="358.7" r="12.6" fill="#b44063"/><circle cx="151.0" cy="358.7" r="12.6" class="s"/><circle cx="171.5" cy="379.2" r="12.6" fill="#b74957"/><circle cx="171.5" cy="379.2" r="12.6" class="s"/><circle cx="241.2" cy="325.4" r="12.6" fill="#93673c"/><circle cx="241.2" cy="325.4" r="12.6" class="s"/><circle cx="323.4" cy="283.9" r="12.6" fill="#99975a"/><circle cx="323.4" cy="283.9" r="12.6" class="s"/><circle cx="187.7" cy="354.4" r="12.6" fill="#ba615d"/><circle cx="187.7" cy="354.4" r="12.6" class="s"/><circle cx="300.3" cy="228.7" r="12.6" fill="#9a9451"/><circle cx="300.3" cy="228.7" r="12.6" class="s"/><circle cx="241.8" cy="340.8" r="12.7" fill="#aa7556"/><circle cx="241.8" cy="340.8" r="12.7" class="s"/><circle cx="210.9" cy="319.0" r="12.7" fill="#bd7a63"/><circle cx="210.9" cy="319.0" r="12.7" class="s"/><circle cx="185.4" cy="312.8" r="12.7" fill="#ba6c61"/><circle cx="185.4" cy="312.8" r="12.7" class="s"/><circle cx="194.8" cy="413.5" r="12.7" fill="#a13741"/><circle cx="194.8" cy="413.5" r="12.7" class="s"/><circle cx="349.4" cy="248.3" r="12.7" fill="#99a65e"/><circle cx="349.4" cy="248.3" r="12.7" class="s"/><circle cx="177.4" cy="294.4" r="12.7" fill="#d17e74"/><circle cx="177.4" cy="294.4" r="12.7" class="s"/><circle cx="84.4" cy="319.1" r="12.7" fill="#e048a4"/><circle cx="84.4" cy="319.1" r="12.7" class="s"/><circle cx="240.5" cy="274.5" r="12.7" fill="#c0936a"/><circle cx="240.5" cy="274.5" r="12.7" class="s"/><circle cx="202.2" cy="402.4" r="12.7" fill="#a34844"/><circle cx="202.2" cy="402.4" r="12.7" class="s"/><circle cx="363.3" cy="229.3" r="12.7" fill="#99ae61"/><circle cx="363.3" cy="229.3" r="12.7" class="s"/><circle cx="167.2" cy="341.3" r="12.7" fill="#b6565b"/><circle cx="167.2" cy="341.3" r="12.7" class="s"/><circle cx="263.5" cy="240.2" r="12.7" fill="#c2a46f"/><circle cx="263.5" cy="240.2" r="12.7" class="s"/><circle cx="241.9" cy="325.8" r="12.7" fill="#926735"/><circle cx="241.9" cy="325.8" r="12.7" class="s"/><circle cx="377.9" cy="209.7" r="12.7" fill="#98b663"/><circle cx="377.9" cy="209.7" r="12.7" class="s"/><circle cx="272.1" cy="296.9" r="12.7" fill="#ac8d5c"/><circle cx="272.1" cy="296.9" r="12.7" class="s"/><circle cx="86.0" cy="320.2" r="12.7" fill="#e048a1"/><circle cx="86.0" cy="320.2" r="12.7" class="s"/><circle cx="154.4" cy="361.1" r="12.7" fill="#b34057"/><circle cx="154.4" cy="361.1" r="12.7" class="s"/><circle cx="300.2" cy="260.2" r="12.7" fill="#a09452"/><circle cx="300.2" cy="260.2" r="12.7" class="s"/><circle cx="262.5" cy="317.2" r="12.7" fill="#9c7944"/><circle cx="262.5" cy="317.2" r="12.7" class="s"/><circle cx="289.0" cy="202.6" r="12.7" fill="#c4b474"/><circle cx="289.0" cy="202.6" r="12.7" class="s"/><circle cx="154.5" cy="330.2" r="12.7" fill="#cd646c"/><circle cx="154.5" cy="330.2" r="12.7" class="s"/><circle cx="302.7" cy="182.6" r="12.7" fill="#c4bd77"/><circle cx="302.7" cy="182.6" r="12.7" class="s"/><circle cx="393.0" cy="189.4" r="12.7" fill="#98bd66"/><circle cx="393.0" cy="189.4" r="12.7" class="s"/><circle cx="219.0" cy="377.5" r="12.7" fill="#a65e48"/><circle cx="219.0" cy="377.5" r="12.7" class="s"/><circle cx="87.0" cy="320.9" r="12.7" fill="#df489f"/><circle cx="87.0" cy="320.9" r="12.7" class="s"/><circle cx="317.0" cy="161.8" r="12.7" fill="#c5c579"/><circle cx="317.0" cy="161.8" r="12.7" class="s"/><circle cx="331.8" cy="140.3" r="12.7" fill="#c5ce7c"/><circle cx="331.8" cy="140.3" r="12.7" class="s"/><circle cx="408.8" cy="168.4" r="12.7" fill="#97c568"/><circle cx="408.8" cy="168.4" r="12.7" class="s"/><circle cx="295.6" cy="263.3" r="12.7" fill="#ad9d61"/><circle cx="295.6" cy="263.3" r="12.7" class="s"/><circle cx="88.0" cy="321.5" r="12.7" fill="#df489c"/><circle cx="88.0" cy="321.5" r="12.7" class="s"/><circle cx="138.5" cy="355.2" r="12.7" fill="#c94966"/><circle cx="138.5" cy="355.2" r="12.7" class="s"/><circle cx="347.3" cy="118.1" r="12.7" fill="#c5d67f"/><circle cx="347.3" cy="118.1" r="12.7" class="s"/><circle cx="131.4" cy="366.3" r="12.7" fill="#c73463"/><circle cx="131.4" cy="366.3" r="12.7" class="s"/><circle cx="140.2" cy="267.6" r="12.7" fill="#e48387"/><circle cx="140.2" cy="267.6" r="12.7" class="s"/><circle cx="82.2" cy="325.5" r="12.7" fill="#df3ea1"/><circle cx="82.2" cy="325.5" r="12.7" class="s"/><circle cx="157.0" cy="362.9" r="12.7" fill="#b2404b"/><circle cx="157.0" cy="362.9" r="12.7" class="s"/><circle cx="165.5" cy="394.7" r="12.8" fill="#b33749"/><circle cx="165.5" cy="394.7" r="12.8" class="s"/><circle cx="89.5" cy="322.5" r="12.8" fill="#df4999"/><circle cx="89.5" cy="322.5" r="12.8" class="s"/><circle cx="113.2" cy="302.0" r="12.8" fill="#e1678b"/><circle cx="113.2" cy="302.0" r="12.8" class="s"/><circle cx="243.2" cy="342.1" r="12.8" fill="#a9754d"/><circle cx="243.2" cy="342.1" r="12.8" class="s"/><circle cx="321.8" cy="226.5" r="12.8" fill="#aead65"/><circle cx="321.8" cy="226.5" r="12.8" class="s"/><circle cx="269.6" cy="282.1" r="12.8" fill="#967d3f"/><circle cx="269.6" cy="282.1" r="12.8" class="s"/><circle cx="153.6" cy="373.5" r="12.8" fill="#ae3139"/><circle cx="153.6" cy="373.5" r="12.8" class="s"/><circle cx="172.9" cy="383.3" r="12.8" fill="#b5494c"/><circle cx="172.9" cy="383.3" r="12.8" class="s"/><circle cx="170.0" cy="343.2" r="12.8" fill="#b5564e"/><circle cx="170.0" cy="343.2" r="12.8" class="s"/><circle cx="335.9" cy="207.0" r="12.8" fill="#aeb568"/><circle cx="335.9" cy="207.0" r="12.8" class="s"/><circle cx="158.7" cy="364.2" r="12.8" fill="#b14141"/><circle cx="158.7" cy="364.2" r="12.8" class="s"/><circle cx="91.8" cy="324.1" r="12.8" fill="#df4993"/><circle cx="91.8" cy="324.1" r="12.8" class="s"/><circle cx="159.4" cy="364.7" r="12.8" fill="#b0413a"/><circle cx="159.4" cy="364.7" r="12.8" class="s"/><circle cx="350.6" cy="186.7" r="12.8" fill="#afbd6a"/><circle cx="350.6" cy="186.7" r="12.8" class="s"/><circle cx="347.4" cy="194.3" r="12.8" fill="#a1af59"/><circle cx="347.4" cy="194.3" r="12.8" class="s"/><circle cx="166.0" cy="396.7" r="12.8" fill="#b23742"/><circle cx="166.0" cy="396.7" r="12.8" class="s"/><circle cx="189.6" cy="357.9" r="12.8" fill="#b96150"/><circle cx="189.6" cy="357.9" r="12.8" class="s"/><circle cx="188.5" cy="315.0" r="12.8" fill="#b96c52"/><circle cx="188.5" cy="315.0" r="12.8" class="s"/><circle cx="302.2" cy="260.4" r="12.8" fill="#9f9449"/><circle cx="302.2" cy="260.4" r="12.8" class="s"/><circle cx="365.9" cy="165.8" r="12.8" fill="#afc56d"/><circle cx="365.9" cy="165.8" r="12.8" class="s"/><circle cx="274.0" cy="297.7" r="12.8" fill="#ab8d53"/><circle cx="274.0" cy="297.7" r="12.8" class="s"/><circle cx="80.0" cy="332.0" r="12.8" fill="#dd2e9d"/><circle cx="80.0" cy="332.0" r="12.8" class="s"/><circle cx="173.4" cy="385.2" r="12.8" fill="#b44944"/><circle cx="173.4" cy="385.2" r="12.8" class="s"/><circle cx="94.0" cy="325.7" r="12.8" fill="#de498e"/><circle cx="94.0" cy="325.7" r="12.8" class="s"/><circle cx="279.1" cy="56.0" r="12.8" fill="#f1e892"/><circle cx="279.1" cy="56.0" r="12.8" class="s"/><circle cx="81.3" cy="332.9" r="12.8" fill="#dd2e9a"/><circle cx="81.3" cy="332.9" r="12.8" class="s"/><circle cx="171.8" cy="344.5" r="12.9" fill="#b45643"/><circle cx="171.8" cy="344.5" r="12.9" class="s"/><circle cx="381.9" cy="144.2" r="12.9" fill="#aecd6f"/><circle cx="381.9" cy="144.2" r="12.9" class="s"/><circle cx="270.5" cy="282.7" r="12.9" fill="#967d37"/><circle cx="270.5" cy="282.7" r="12.9" class="s"/><circle cx="270.3" cy="70.7" r="12.9" fill="#f0e390"/><circle cx="270.3" cy="70.7" r="12.9" class="s"/><circle cx="82.1" cy="333.5" r="12.9" fill="#dd2e98"/><circle cx="82.1" cy="333.5" r="12.9" class="s"/><circle cx="133.8" cy="370.8" r="12.9" fill="#c53555"/><circle cx="133.8" cy="370.8" r="12.9" class="s"/><circle cx="82.9" cy="334.1" r="12.9" fill="#dd2f96"/><circle cx="82.9" cy="334.1" r="12.9" class="s"/><circle cx="258.7" cy="89.9" r="12.9" fill="#efdb8e"/><circle cx="258.7" cy="89.9" r="12.9" class="s"/><circle cx="141.1" cy="359.5" r="12.9" fill="#c84a58"/><circle cx="141.1" cy="359.5" r="12.9" class="s"/><circle cx="213.6" cy="321.7" r="12.9" fill="#bc7a55"/><circle cx="213.6" cy="321.7" r="12.9" class="s"/><circle cx="211.9" cy="279.0" r="12.9" fill="#bd8257"/><circle cx="211.9" cy="279.0" r="12.9" class="s"/><circle cx="298.0" cy="263.7" r="12.9" fill="#ac9d57"/><circle cx="298.0" cy="263.7" r="12.9" class="s"/><circle cx="172.5" cy="345.1" r="12.9" fill="#b4563c"/><circle cx="172.5" cy="345.1" r="12.9" class="s"/><circle cx="250.3" cy="103.9" r="12.9" fill="#efd68c"/><circle cx="250.3" cy="103.9" r="12.9" class="s"/><circle cx="117.5" cy="304.9" r="12.9" fill="#e0677f"/><circle cx="117.5" cy="304.9" r="12.9" class="s"/><circle cx="84.1" cy="335.0" r="12.9" fill="#dc2f93"/><circle cx="84.1" cy="335.0" r="12.9" class="s"/><circle cx="190.3" cy="359.5" r="12.9" fill="#b86147"/><circle cx="190.3" cy="359.5" r="12.9" class="s"/><circle cx="157.6" cy="334.1" r="12.9" fill="#cc645d"/><circle cx="157.6" cy="334.1" r="12.9" class="s"/><circle cx="236.6" cy="126.4" r="12.9" fill="#eecd89"/><circle cx="236.6" cy="126.4" r="12.9" class="s"/><circle cx="86.0" cy="336.3" r="12.9" fill="#dc2f8d"/><circle cx="86.0" cy="336.3" r="12.9" class="s"/><circle cx="98.1" cy="328.4" r="12.9" fill="#dd4983"/><circle cx="98.1" cy="328.4" r="12.9" class="s"/><circle cx="303.3" cy="230.5" r="12.9" fill="#999442"/><circle cx="303.3" cy="230.5" r="12.9" class="s"/><circle cx="181.3" cy="297.8" r="12.9" fill="#d07e63"/><circle cx="181.3" cy="297.8" r="12.9" class="s"/><circle cx="324.8" cy="226.6" r="12.9" fill="#adad5b"/><circle cx="324.8" cy="226.6" r="12.9" class="s"/><circle cx="210.7" cy="168.6" r="12.9" fill="#ebba84"/><circle cx="210.7" cy="168.6" r="12.9" class="s"/><circle cx="87.9" cy="337.7" r="12.9" fill="#db3088"/><circle cx="87.9" cy="337.7" r="12.9" class="s"/><circle cx="190.4" cy="316.3" r="12.9" fill="#b86c46"/><circle cx="190.4" cy="316.3" r="12.9" class="s"/><circle cx="135.3" cy="374.2" r="13.0" fill="#c4364a"/><circle cx="135.3" cy="374.2" r="13.0" class="s"/><circle cx="244.3" cy="276.3" r="13.0" fill="#bf935a"/><circle cx="244.3" cy="276.3" r="13.0" class="s"/><circle cx="339.1" cy="206.9" r="13.0" fill="#aeb55d"/><circle cx="339.1" cy="206.9" r="13.0" class="s"/><circle cx="249.6" cy="220.3" r="13.0" fill="#c1a05d"/><circle cx="249.6" cy="220.3" r="13.0" class="s"/><circle cx="142.7" cy="362.7" r="13.0" fill="#c64a4c"/><circle cx="142.7" cy="362.7" r="13.0" class="s"/><circle cx="214.7" cy="322.9" r="13.0" fill="#bb7a4b"/><circle cx="214.7" cy="322.9" r="13.0" class="s"/><circle cx="211.3" cy="252.0" r="13.0" fill="#d39869"/><circle cx="211.3" cy="252.0" r="13.0" class="s"/><circle cx="350.4" cy="194.2" r="13.0" fill="#a1af4e"/><circle cx="350.4" cy="194.2" r="13.0" class="s"/><circle cx="175.8" cy="224.7" r="13.0" fill="#e79f7c"/><circle cx="175.8" cy="224.7" r="13.0" class="s"/><circle cx="101.6" cy="330.9" r="13.0" fill="#dc4a78"/><circle cx="101.6" cy="330.9" r="13.0" class="s"/><circle cx="135.9" cy="375.8" r="13.0" fill="#c33742"/><circle cx="135.9" cy="375.8" r="13.0" class="s"/><circle cx="91.4" cy="340.2" r="13.0" fill="#da317e"/><circle cx="91.4" cy="340.2" r="13.0" class="s"/><circle cx="191.2" cy="316.9" r="13.0" fill="#b76c3d"/><circle cx="191.2" cy="316.9" r="13.0" class="s"/><circle cx="354.2" cy="186.5" r="13.0" fill="#aebd5f"/><circle cx="354.2" cy="186.5" r="13.0" class="s"/><circle cx="268.2" cy="241.5" r="13.0" fill="#c1a35e"/><circle cx="268.2" cy="241.5" r="13.0" class="s"/><circle cx="234.6" cy="216.6" r="13.0" fill="#d6aa6d"/><circle cx="234.6" cy="216.6" r="13.0" class="s"/><circle cx="143.4" cy="364.2" r="13.0" fill="#c54a44"/><circle cx="143.4" cy="364.2" r="13.0" class="s"/><circle cx="146.2" cy="271.5" r="13.0" fill="#e38374"/><circle cx="146.2" cy="271.5" r="13.0" class="s"/><circle cx="94.5" cy="342.4" r="13.0" fill="#d93273"/><circle cx="94.5" cy="342.4" r="13.0" class="s"/><circle cx="369.9" cy="165.4" r="13.0" fill="#aec561"/><circle cx="369.9" cy="165.4" r="13.0" class="s"/><circle cx="159.6" cy="336.9" r="13.0" fill="#ca6450"/><circle cx="159.6" cy="336.9" r="13.0" class="s"/><circle cx="260.3" cy="177.7" r="13.1" fill="#d8bc72"/><circle cx="260.3" cy="177.7" r="13.1" class="s"/><circle cx="122.6" cy="308.3" r="13.1" fill="#df676e"/><circle cx="122.6" cy="308.3" r="13.1" class="s"/><circle cx="214.0" cy="280.5" r="13.1" fill="#bc8248"/><circle cx="214.0" cy="280.5" r="13.1" class="s"/><circle cx="304.6" cy="231.2" r="13.1" fill="#999439"/><circle cx="304.6" cy="231.2" r="13.1" class="s"/><circle cx="386.2" cy="143.7" r="13.1" fill="#aecd63"/><circle cx="386.2" cy="143.7" r="13.1" class="s"/><circle cx="274.0" cy="156.9" r="13.1" fill="#d8c474"/><circle cx="274.0" cy="156.9" r="13.1" class="s"/><circle cx="106.0" cy="334.0" r="13.1" fill="#db4a68"/><circle cx="106.0" cy="334.0" r="13.1" class="s"/><circle cx="294.8" cy="203.3" r="13.1" fill="#c2b462"/><circle cx="294.8" cy="203.3" r="13.1" class="s"/><circle cx="245.9" cy="277.1" r="13.1" fill="#be9250"/><circle cx="245.9" cy="277.1" r="13.1" class="s"/><circle cx="98.6" cy="345.4" r="13.1" fill="#d83365"/><circle cx="98.6" cy="345.4" r="13.1" class="s"/><circle cx="288.4" cy="135.3" r="13.1" fill="#d9cd76"/><circle cx="288.4" cy="135.3" r="13.1" class="s"/><circle cx="160.3" cy="338.2" r="13.1" fill="#c96447"/><circle cx="160.3" cy="338.2" r="13.1" class="s"/><circle cx="281.8" cy="57.6" r="13.1" fill="#f0e889"/><circle cx="281.8" cy="57.6" r="13.1" class="s"/><circle cx="309.1" cy="183.1" r="13.1" fill="#c3bc64"/><circle cx="309.1" cy="183.1" r="13.1" class="s"/><circle cx="303.3" cy="112.9" r="13.1" fill="#dad679"/><circle cx="303.3" cy="112.9" r="13.1" class="s"/><circle cx="183.8" cy="300.1" r="13.1" fill="#ce7e54"/><circle cx="183.8" cy="300.1" r="13.1" class="s"/><circle cx="101.8" cy="347.7" r="13.1" fill="#d63457"/><circle cx="101.8" cy="347.7" r="13.1" class="s"/><circle cx="214.9" cy="281.1" r="13.1" fill="#bb823f"/><circle cx="214.9" cy="281.1" r="13.1" class="s"/><circle cx="318.7" cy="89.8" r="13.1" fill="#dbdf7b"/><circle cx="318.7" cy="89.8" r="13.1" class="s"/><circle cx="109.3" cy="336.3" r="13.2" fill="#d94b5a"/><circle cx="109.3" cy="336.3" r="13.2" class="s"/><circle cx="324.0" cy="162.1" r="13.2" fill="#c4c566"/><circle cx="324.0" cy="162.1" r="13.2" class="s"/><circle cx="104.0" cy="349.3" r="13.2" fill="#d5354b"/><circle cx="104.0" cy="349.3" r="13.2" class="s"/><circle cx="270.2" cy="242.0" r="13.2" fill="#c0a353"/><circle cx="270.2" cy="242.0" r="13.2" class="s"/><circle cx="105.0" cy="350.0" r="13.2" fill="#d43643"/><circle cx="105.0" cy="350.0" r="13.2" class="s"/><circle cx="126.1" cy="310.8" r="13.2" fill="#dd675e"/><circle cx="126.1" cy="310.8" r="13.2" class="s"/><circle cx="339.6" cy="140.4" r="13.2" fill="#c4cd68"/><circle cx="339.6" cy="140.4" r="13.2" class="s"/><circle cx="111.5" cy="338.0" r="13.2" fill="#d84b4d"/><circle cx="111.5" cy="338.0" r="13.2" class="s"/><circle cx="184.8" cy="301.2" r="13.2" fill="#cd7e4a"/><circle cx="184.8" cy="301.2" r="13.2" class="s"/><circle cx="112.5" cy="338.7" r="13.2" fill="#d74c44"/><circle cx="112.5" cy="338.7" r="13.2" class="s"/><circle cx="355.9" cy="118.0" r="13.2" fill="#c4d66a"/><circle cx="355.9" cy="118.0" r="13.2" class="s"/><circle cx="214.6" cy="253.8" r="13.3" fill="#d29858"/><circle cx="214.6" cy="253.8" r="13.3" class="s"/><circle cx="150.2" cy="274.2" r="13.3" fill="#e28362"/><circle cx="150.2" cy="274.2" r="13.3" class="s"/><circle cx="252.4" cy="222.1" r="13.3" fill="#c09f4c"/><circle cx="252.4" cy="222.1" r="13.3" class="s"/><circle cx="297.3" cy="203.6" r="13.3" fill="#c2b456"/><circle cx="297.3" cy="203.6" r="13.3" class="s"/><circle cx="128.4" cy="312.5" r="13.3" fill="#dc674f"/><circle cx="128.4" cy="312.5" r="13.3" class="s"/><circle cx="311.9" cy="183.2" r="13.3" fill="#c2bc58"/><circle cx="311.9" cy="183.2" r="13.3" class="s"/><circle cx="180.4" cy="227.7" r="13.3" fill="#e69e68"/><circle cx="180.4" cy="227.7" r="13.3" class="s"/><circle cx="129.4" cy="313.2" r="13.3" fill="#db6746"/><circle cx="129.4" cy="313.2" r="13.3" class="s"/><circle cx="238.5" cy="218.2" r="13.3" fill="#d4aa5b"/><circle cx="238.5" cy="218.2" r="13.3" class="s"/><circle cx="327.2" cy="162.1" r="13.4" fill="#c3c459"/><circle cx="327.2" cy="162.1" r="13.4" class="s"/><circle cx="215.9" cy="254.6" r="13.4" fill="#d1984d"/><circle cx="215.9" cy="254.6" r="13.4" class="s"/><circle cx="253.5" cy="222.8" r="13.4" fill="#bf9f40"/><circle cx="253.5" cy="222.8" r="13.4" class="s"/><circle cx="343.2" cy="140.4" r="13.4" fill="#c3cd5b"/><circle cx="343.2" cy="140.4" r="13.4" class="s"/><circle cx="152.6" cy="275.9" r="13.4" fill="#e08252"/><circle cx="152.6" cy="275.9" r="13.4" class="s"/><circle cx="216.1" cy="172.1" r="13.4" fill="#eaba6d"/><circle cx="216.1" cy="172.1" r="13.4" class="s"/><circle cx="265.1" cy="179.0" r="13.4" fill="#d6bb5e"/><circle cx="265.1" cy="179.0" r="13.4" class="s"/><circle cx="359.8" cy="117.9" r="13.5" fill="#c3d55c"/><circle cx="359.8" cy="117.9" r="13.5" class="s"/><circle cx="240.2" cy="218.8" r="13.5" fill="#d4a94f"/><circle cx="240.2" cy="218.8" r="13.5" class="s"/><circle cx="153.6" cy="276.7" r="13.5" fill="#e08247"/><circle cx="153.6" cy="276.7" r="13.5" class="s"/><circle cx="242.8" cy="130.2" r="13.5" fill="#edcc71"/><circle cx="242.8" cy="130.2" r="13.5" class="s"/><circle cx="279.4" cy="158.2" r="13.5" fill="#d7c460"/><circle cx="279.4" cy="158.2" r="13.5" class="s"/><circle cx="256.8" cy="107.9" r="13.5" fill="#eed573"/><circle cx="256.8" cy="107.9" r="13.5" class="s"/><circle cx="265.5" cy="94.0" r="13.6" fill="#eedb74"/><circle cx="265.5" cy="94.0" r="13.6" class="s"/><circle cx="294.3" cy="136.6" r="13.6" fill="#d8cd61"/><circle cx="294.3" cy="136.6" r="13.6" class="s"/><circle cx="183.2" cy="229.6" r="13.6" fill="#e59e55"/><circle cx="183.2" cy="229.6" r="13.6" class="s"/><circle cx="277.4" cy="75.1" r="13.6" fill="#efe276"/><circle cx="277.4" cy="75.1" r="13.6" class="s"/><circle cx="286.5" cy="60.5" r="13.6" fill="#f0e777"/><circle cx="286.5" cy="60.5" r="13.6" class="s"/><circle cx="309.8" cy="114.2" r="13.6" fill="#d9d563"/><circle cx="309.8" cy="114.2" r="13.6" class="s"/><circle cx="267.2" cy="179.6" r="13.6" fill="#d6bb51"/><circle cx="267.2" cy="179.6" r="13.6" class="s"/><circle cx="325.9" cy="91.0" r="13.7" fill="#dade65"/><circle cx="325.9" cy="91.0" r="13.7" class="s"/><circle cx="299.6" cy="153.4" r="13.7" fill="#c3bd42"/><circle cx="299.6" cy="153.4" r="13.7" class="s"/><circle cx="184.3" cy="230.4" r="13.7" fill="#e49e49"/><circle cx="184.3" cy="230.4" r="13.7" class="s"/><circle cx="281.7" cy="158.7" r="13.7" fill="#d7c352"/><circle cx="281.7" cy="158.7" r="13.7" class="s"/><circle cx="296.9" cy="137.1" r="13.8" fill="#d7cc53"/><circle cx="296.9" cy="137.1" r="13.8" class="s"/><circle cx="219.5" cy="174.3" r="13.8" fill="#e9b959"/><circle cx="219.5" cy="174.3" r="13.8" class="s"/><circle cx="312.7" cy="114.6" r="13.9" fill="#d8d554"/><circle cx="312.7" cy="114.6" r="13.9" class="s"/><circle cx="246.7" cy="132.7" r="13.9" fill="#eccb5b"/><circle cx="246.7" cy="132.7" r="13.9" class="s"/><circle cx="329.2" cy="91.5" r="14.0" fill="#d9de55"/><circle cx="329.2" cy="91.5" r="14.0" class="s"/><circle cx="220.9" cy="175.2" r="14.0" fill="#e8b94a"/><circle cx="220.9" cy="175.2" r="14.0" class="s"/><circle cx="261.2" cy="110.6" r="14.0" fill="#edd45c"/><circle cx="261.2" cy="110.6" r="14.0" class="s"/><circle cx="290.2" cy="62.7" r="14.0" fill="#efe766"/><circle cx="290.2" cy="62.7" r="14.0" class="s"/><circle cx="270.1" cy="96.9" r="14.1" fill="#edda5d"/><circle cx="270.1" cy="96.9" r="14.1" class="s"/><circle cx="248.4" cy="133.8" r="14.2" fill="#ebcb4b"/><circle cx="248.4" cy="133.8" r="14.2" class="s"/><circle cx="282.3" cy="78.1" r="14.2" fill="#eee15d"/><circle cx="282.3" cy="78.1" r="14.2" class="s"/><circle cx="291.7" cy="63.6" r="14.2" fill="#efe75e"/><circle cx="291.7" cy="63.6" r="14.2" class="s"/><circle cx="263.0" cy="111.7" r="14.3" fill="#ecd44b"/><circle cx="263.0" cy="111.7" r="14.3" class="s"/><circle cx="272.1" cy="98.1" r="14.3" fill="#edda4b"/><circle cx="272.1" cy="98.1" r="14.3" class="s"/><circle cx="292.8" cy="64.3" r="14.4" fill="#eee657"/><circle cx="292.8" cy="64.3" r="14.4" class="s"/><circle cx="284.5" cy="79.4" r="14.4" fill="#ede14c"/><circle cx="284.5" cy="79.4" r="14.4" class="s"/><circle cx="294.0" cy="65.0" r="14.5" fill="#eee64c"/><circle cx="294.0" cy="65.0" r="14.5" class="s"/><g stroke="#f0f0f0" stroke-width="1" shape-rendering="crispEdges"><line x1="252.0" y1="0.0" x2="337.6" y2="467.8"/><line x1="1.0" y1="413.0" x2="571.0" y2="301.0"/><line x1="296.5" y1="308.6" x2="316.5" y2="350.0"/></g></svg></div>
<div class="t" style="left:956px;top:1151px;font-size:12px;color:#000;">Zoom</div>
<div class="r" style="left:983px;top:1191px;width:21px;height:509px;border:1px dotted #000;border-right:none;box-sizing:border-box"></div>
<div class="r" style="left:991px;top:1199px;width:4px;height:493px;background:#e7eaea;border:1px solid #d6d6d6;box-sizing:border-box"></div>
<div class="t" style="left:963px;top:1439px;font-size:12px;color:#000;">46</div>
<svg class="r" style="left:985px;top:1459px" width="19" height="11"><path d="M0 0 H13.5 L18.5 5.5 L13.5 11 H0 Z" fill="#0078d7"/></svg>
<div class="t" style="left:25px;top:1747px;font-size:12px;color:#000;">Point Size</div>
<div class="t" style="left:505px;top:1736px;font-size:12px;color:#000;">20</div>
<div class="r" style="left:98px;top:1758px;width:826px;height:4px;background:#e7eaea;border:1px solid #d6d6d6;box-sizing:border-box"></div>
<svg class="r" style="left:254px;top:1752px" width="11" height="20"><path d="M0 0 H11 V13.5 L5.5 19 L0 13.5 Z" fill="#0078d7"/></svg>
</body></html>
